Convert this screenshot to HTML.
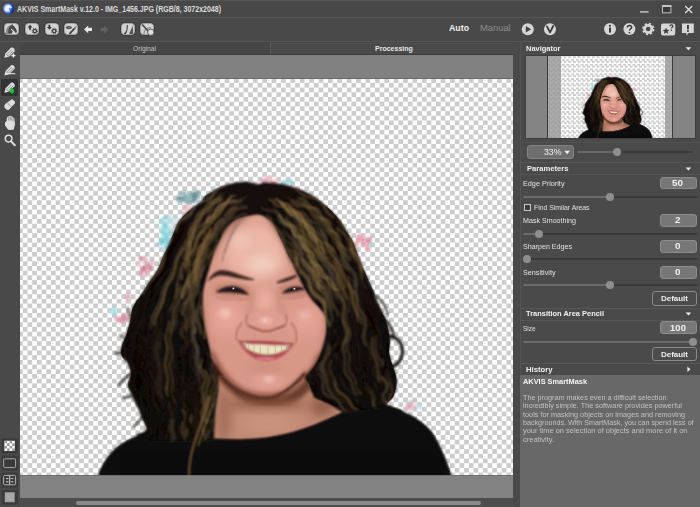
<!DOCTYPE html>
<html lang="en">
<head>
<meta charset="utf-8">
<title>AKVIS SmartMask v.12.0 - IMG_1456.JPG</title>
<style>
html,body{margin:0;padding:0;background:#494949;}
body{width:700px;height:507px;overflow:hidden;font-family:"Liberation Sans",sans-serif;}
#app{position:relative;width:700px;height:507px;overflow:hidden;background:#494949;}
#app div,#app span,#app svg{position:absolute;box-sizing:border-box;}
.t{white-space:nowrap;transform-origin:0 50%;display:block;}
.hl{height:1px;background:#565656;}
.btn{border-radius:3.6px;background:#d2d2d2;border:0.8px solid #a4a4a4;box-shadow:0 0 0 0.7px #383838;}
.val{border-radius:3px;background:#777;border:1px solid #8c8c8c;}
.dbtn{border-radius:3px;background:#4c4c4c;border:1px solid #8a8a8a;}
.trk{height:2px;background:#393939;border-radius:1px;}
.trk i{position:absolute;left:0;top:0;height:2px;background:#6a6a6a;border-radius:1px;display:block;}
.knob{width:8px;height:8px;border-radius:50%;background:#8f8f8f;}
.checker{background-color:#fff;background-image:conic-gradient(#ccc 25%,#fff 0 50%,#ccc 0 75%,#fff 0);}

</style>
</head>
<body>
<div id="app">
<!-- title bar -->
<div id="titlebar" style="left:0;top:0;width:700px;height:17px;background:#484848;border-top:1px solid #545454;"></div>
<svg id="appicon" style="left:2px;top:2px" width="14" height="14" viewBox="0 0 14 14">
  <defs><radialGradient id="gi" cx="32%" cy="38%" r="75%"><stop offset="0" stop-color="#dbe8ff"/><stop offset="0.4" stop-color="#6c9cf0"/><stop offset="0.75" stop-color="#1c40b8"/><stop offset="1" stop-color="#0a1666"/></radialGradient></defs>
  <circle cx="6.7" cy="6.7" r="5.5" fill="url(#gi)"/>
  <path d="M2.6 8.4 C2.4 5.6 4.2 3.2 7 2.8 C8.4 3.2 9.4 4.2 9.8 5.6 L8.6 6.4 L7.6 5.6 C6.8 6.2 6.6 7 6.8 7.8 C7.4 8.4 8 9 8 9.8 L5.4 10.8 C4 10.6 2.8 9.8 2.6 8.4 Z" fill="#f6f9ff" opacity="0.92"/>
  <path d="M2.2 8.8 C4 9.4 7 9.6 9.4 10.4 C8.4 11.6 6.8 12.2 5.2 11.8 C3.6 11.4 2.6 10.2 2.2 8.8 Z" fill="#3a78e0" opacity="0.7"/>
</svg>
<svg id="winctl" style="left:630px;top:0" width="70" height="17" viewBox="630 0 70 17">
  <rect x="640" y="11.2" width="8.6" height="1.4" fill="#c8c8c8"/>
  <rect x="662.5" y="5.6" width="8.4" height="7.2" fill="#3a3a3a" stroke="#bdbdbd" stroke-width="1"/>
  <rect x="662" y="5" width="9.4" height="2" fill="#c4c4c4"/>
  <path d="M685.2 6 L692.2 13 M692.2 6 L685.2 13" stroke="#e4e4e4" stroke-width="1.2" fill="none"/>
</svg>
<div class="hl" style="left:0;top:17px;width:700px;background:#565656"></div>
<!-- toolbar -->
<div id="toolbar" style="left:0;top:18px;width:700px;height:23px;background:#494949;"></div>
<div class="btn" style="left:3.8px;top:23px;width:15.2px;height:12.4px"></div>
<div class="btn" style="left:25.2px;top:23px;width:14px;height:12.4px"></div>
<div class="btn" style="left:44.6px;top:23px;width:14px;height:12.4px"></div>
<div class="btn" style="left:63.8px;top:23px;width:14.4px;height:12.4px"></div>
<div class="btn" style="left:120.9px;top:23.2px;width:14.2px;height:12.2px"></div>
<div class="btn" style="left:140.3px;top:23.2px;width:14.2px;height:12.2px"></div>
<svg id="tbicons" style="left:0;top:18px" width="700" height="24" viewBox="0 18 700 24">
  <!-- horse head -->
  <path d="M5.8 33.8 C5.8 29.4 7.6 26 11 25.2 L12.6 24.2 L13.2 25.6 C15 27 16.6 29.4 17 32 L15.6 33 L13.6 31 C12.4 31.6 11.8 32.8 12 33.8 Z" fill="#4a4a4a"/>
  <path d="M5.8 33.8 C5.8 29.6 7.4 26.4 10.4 25.4 C8.8 27.6 8 30.6 8.2 33.8 Z" fill="#8a8a8a"/>
  <path d="M11.2 29.2 L14.6 32.4" stroke="#e8e8e8" stroke-width="1.1" fill="none"/>
  <!-- up arrow + gear -->
  <path d="M30 24.8 L32.6 27.6 L31 27.6 L31 29.8 L29 29.8 L29 27.6 L27.4 27.6 Z" fill="#3e3e3e"/>
  <circle cx="34.8" cy="31" r="1.7" fill="#d8d8d8" stroke="#3e3e3e" stroke-width="1.3"/>
  <circle cx="34.8" cy="31" r="2.7" fill="none" stroke="#3e3e3e" stroke-width="1" stroke-dasharray="1.06 1.06"/>
  <path d="M49.4 29.8 L52 27 L50.4 27 L50.4 24.8 L48.4 24.8 L48.4 27 L46.8 27 Z" fill="#3e3e3e"/>
  <circle cx="54.2" cy="31" r="1.7" fill="#d8d8d8" stroke="#3e3e3e" stroke-width="1.3"/>
  <circle cx="54.2" cy="31" r="2.7" fill="none" stroke="#3e3e3e" stroke-width="1" stroke-dasharray="1.06 1.06"/>
  <!-- eye + brush -->
  <path d="M65.6 27.4 C67 25.4 70.6 25.4 72 27.4 C70.6 29.4 67 29.4 65.6 27.4 Z" fill="#444"/>
  <ellipse cx="68.8" cy="27.4" rx="1.3" ry="0.7" fill="#9a9a9a"/>
  <path d="M69.8 33.6 L74.6 28.4" stroke="#3c3c3c" stroke-width="1.6" stroke-linecap="round"/>
  <path d="M74.8 28.2 L76.2 26.6" stroke="#888" stroke-width="1.4" stroke-linecap="round"/>
  <!-- arrows -->
  <path d="M84 29.4 L88.2 25.6 L88.2 27.8 L92 27.8 L92 31 L88.2 31 L88.2 33.2 Z" fill="#e6e6e6"/>
  <path d="M108.4 29.4 L104.2 25.6 L104.2 27.8 L100.6 27.8 L100.6 31 L104.2 31 L104.2 33.2 Z" fill="#626262"/>
  <!-- brushes -->
  <path d="M123.6 34 L126 34 L127.4 30.6 L128 25 L126.8 25 L126.4 30.6 Z" fill="#444"/>
  <path d="M129 34 L133 34 L133 25.4 Z" fill="#555"/>
  <!-- pencil with circle -->
  <path d="M142.6 25 L148 31" stroke="#444" stroke-width="1.6" stroke-linecap="round"/>
  <path d="M144 34 C144 30 146.6 27.6 150.6 27.6" stroke="#666" stroke-width="0.9" fill="none"/>
  <circle cx="150.8" cy="32.2" r="3.2" fill="#dedede" stroke="#555" stroke-width="1"/>
  <!-- run / apply -->
  <circle cx="527.8" cy="29.2" r="6" fill="#d6d6d6"/>
  <path d="M525.8 26 L531.2 29.2 L525.8 32.4 Z" fill="#444"/>
  <circle cx="550" cy="29.2" r="6" fill="#d6d6d6"/>
  <path d="M547 26.4 L550 32.4 L553.2 26" stroke="#3c3c3c" stroke-width="1.8" fill="none" stroke-linejoin="round" stroke-linecap="round"/>
  <!-- info / help -->
  <circle cx="610" cy="29" r="6" fill="#d6d6d6"/>
  <circle cx="610" cy="25.8" r="1.1" fill="#3c3c3c"/>
  <rect x="609" y="27.6" width="2" height="5" fill="#3c3c3c"/>
  <circle cx="629.4" cy="29" r="6" fill="#d6d6d6"/>
  <path d="M627.4 27.4 C627.4 24.8 631.6 24.8 631.6 27.4 C631.6 28.8 629.5 28.8 629.5 30.6" stroke="#3c3c3c" stroke-width="1.5" fill="none"/>
  <circle cx="629.5" cy="32.6" r="0.9" fill="#3c3c3c"/>
  <!-- gear -->
  <circle cx="648.2" cy="29" r="3.6" fill="none" stroke="#d6d6d6" stroke-width="2.6"/>
  <circle cx="648.2" cy="29" r="5.2" fill="none" stroke="#d6d6d6" stroke-width="2" stroke-dasharray="2.1 1.98"/>
  <!-- star / ? -->
  <rect x="661" y="23.6" width="14.2" height="11.8" rx="2" fill="#d6d6d6"/>
  <path d="M666 27.4 L667 29.8 L669.6 29.9 L667.6 31.5 L668.3 34 L666 32.6 L663.8 34 L664.5 31.5 L662.5 29.9 L665.1 29.8 Z" fill="#3c3c3c"/>
  <path d="M669.8 26.2 C669.8 24.4 673 24.4 673 26.2 C673 27.2 671.4 27.3 671.4 28.6" stroke="#3c3c3c" stroke-width="1.2" fill="none"/>
  <circle cx="671.4" cy="30.2" r="0.7" fill="#3c3c3c"/>
  <!-- bubble ! -->
  <path d="M682 23.6 H693.8 V33 H688.6 L686.4 35.6 V33 H682 Z" fill="#d6d6d6"/>
  <rect x="687" y="25" width="1.9" height="4.4" fill="#3c3c3c"/>
  <rect x="687" y="30.2" width="1.9" height="1.6" fill="#3c3c3c"/>
</svg>
<div class="hl" style="left:0;top:41px;width:700px;background:#555"></div>
<!-- tabs -->
<div id="tabs" style="left:20px;top:42px;width:493px;height:13px;background:#464646;"></div>
<div style="left:270px;top:43px;width:243px;height:11px;background:#4a4a4a;border-left:1px solid #5a5a5a;border-top:1px solid #515151;"></div>
<div style="left:20px;top:53.6px;width:493px;height:1.2px;background:#3c3c3c;"></div>
<!-- left tool strip -->
<div id="tools" style="left:0;top:42px;width:20px;height:465px;background:#494949;"></div>
<div style="left:1.4px;top:79.2px;width:16.8px;height:16.4px;background:#333;border-radius:2px;"></div>
<svg id="toolicons" style="left:0;top:42px" width="20" height="465" viewBox="0 42 20 465">
  <g>
    <!-- pencil + -->
    <path d="M4.4 57.8 L5.5 53.3 L11 47.8 C12.6 46.6 15.6 49.4 14.6 51.2 L9 56.7 Z" fill="#dedede"/>
    <path d="M7 54.4 L12 49.4 M8.4 55.6 L13.4 50.6" stroke="#7c7c7c" stroke-width="0.7" fill="none"/>
    <path d="M5.6 53.6 L8.8 56.6" stroke="#6a6a6a" stroke-width="0.6" fill="none"/>
    <path d="M11.4 55.6 h4 M13.4 53.6 v4" stroke="#f4f4f4" stroke-width="1.3" fill="none"/>
    <!-- pencil - -->
    <path d="M4.4 75.4 L5.5 70.9 L11 65.4 C12.6 64.2 15.6 67.0 14.6 68.8 L9 74.3 Z" fill="#dedede"/>
    <path d="M7 72.0 L12 67.0 M8.4 73.2 L13.4 68.2" stroke="#7c7c7c" stroke-width="0.7" fill="none"/>
    <path d="M5.6 71.2 L8.8 74.2" stroke="#6a6a6a" stroke-width="0.6" fill="none"/>
    <path d="M5 73.7 h10.2" stroke="#e8e8e8" stroke-width="1.1" fill="none"/>
    <!-- selected pencil -->
    <path d="M4.4 92.8 L5.5 88.3 L11 82.8 C12.6 81.6 15.6 84.4 14.6 86.2 L9 91.7 Z" fill="#dedede"/>
    <path d="M7 89.4 L12 84.4 M8.4 90.6 L13.4 85.6" stroke="#7c7c7c" stroke-width="0.7" fill="none"/>
    <path d="M5.6 88.6 L8.8 91.6" stroke="#6a6a6a" stroke-width="0.6" fill="none"/>
    <ellipse cx="12" cy="91" rx="2.1" ry="2.6" fill="#17c42c"/>
    <path d="M12 87.6 L13.6 90 L10.4 90 Z" fill="#17c42c"/>
    <!-- eraser -->
    <path d="M4.6 107.4 C4 106 4.6 104.6 5.6 103.8 L11.4 99.4 C12.6 98.8 15.6 101.8 15 103.2 L9.2 109.6 C8 110.6 5.6 109.4 4.6 107.4 Z" fill="#dedede"/>
    <path d="M7.6 103 L11 106.8" stroke="#7c7c7c" stroke-width="0.8" fill="none"/>
    <!-- hand -->
    <path d="M5 122.4 L6.6 121 L7 117.4 L8.2 116.6 L9 116.2 L10.2 115.8 L11.6 116.2 L12.8 117 L14.4 118.6 L15 124.6 L13.6 129.8 L8.4 130 L5 125.4 Z" fill="#dedede"/>
    <path d="M8.6 120.6 V117.2 M10.2 120.4 V116.6 M11.8 120.6 V117 M13.2 121.4 V118.4" stroke="#666" stroke-width="0.6" fill="none"/>
    <!-- magnifier -->
    <circle cx="8.6" cy="138.6" r="3.3" fill="none" stroke="#dedede" stroke-width="1.5"/>
    <path d="M11.2 141.4 L14.8 145.2" stroke="#dedede" stroke-width="2" stroke-linecap="round"/>
  </g>
  <!-- bottom icons -->
  <rect x="1.6" y="438.6" width="16.4" height="14.6" rx="1.5" fill="#3b3b3b"/>
  <rect x="1.6" y="455.8" width="16.4" height="14.6" rx="1.5" fill="#3b3b3b"/>
  <rect x="1.6" y="472.8" width="16.4" height="14.6" rx="1.5" fill="#3b3b3b"/>
  <rect x="1.6" y="490" width="16.4" height="14.6" rx="1.5" fill="#3b3b3b"/>
  <rect x="4.4" y="440.8" width="10.4" height="10.2" fill="#fff"/>
  <path d="M4.4 440.8 h2.6 v2.55 h-2.6z M9.6 440.8 h2.6 v2.55 h-2.6z M7 443.35 h2.6 v2.55 h-2.6z M12.2 443.35 h2.6 v2.55 h-2.6z M4.4 445.9 h2.6 v2.55 h-2.6z M9.6 445.9 h2.6 v2.55 h-2.6z M7 448.45 h2.6 v2.55 h-2.6z M12.2 448.45 h2.6 v2.55 h-2.6z" fill="#9a9a9a"/>
  <rect x="3.6" y="458.8" width="12" height="8.8" rx="1" fill="#3a3a3a" stroke="#aaa" stroke-width="1"/>
  <rect x="3.6" y="475.4" width="12" height="9.4" rx="1" fill="#3a3a3a" stroke="#b4b4b4" stroke-width="1"/>
  <path d="M9.6 476 V484.4 M6 478.6 h2.4 M10.8 478.6 h2.6 M6 481.8 h2.4 M10.8 481.8 h2.6" stroke="#d4d4d4" stroke-width="1"/>
  <rect x="5" y="492.4" width="9.6" height="9.6" fill="#a8a8a8" stroke="#8a8a8a" stroke-width="0.6"/>
</svg>
<!-- canvas area -->
<div id="band-top" style="left:20px;top:54.8px;width:492.6px;height:24.4px;background:#818181;"></div>
<div style="left:20px;top:77.6px;width:492.6px;height:1.6px;background:#6a6a6a;"></div>
<div id="canvas" class="checker" style="left:20px;top:79px;width:492.6px;height:396px;background-size:9.405px 9.405px;background-position:2.8px -0.8px;"></div>
<div id="band-bot" style="left:20px;top:475px;width:492.6px;height:23px;background:#828282;"></div>
<div style="left:20px;top:475px;width:492.6px;height:1.2px;background:#6e6e6e;"></div>
<div id="hscroll" style="left:20px;top:498px;width:493px;height:9px;background:#4d4d4d;"></div>
<div style="left:75.6px;top:500.8px;width:405.6px;height:4.6px;border-radius:2.3px;background:#8a8a8a;"></div>
<div id="gutter" style="left:512.6px;top:42px;width:7.4px;height:465px;background:#494949;"></div>
<!-- right panel -->
<div id="panel" style="left:520px;top:42px;width:180px;height:333px;background:#4a4a4a;border-left:1px solid #545454;"></div>
<div class="hl" style="left:520px;top:53px;width:180px;background:#4c4c4c"></div>
<div class="hl" style="left:520px;top:142px;width:180px;background:#525252"></div>
<div class="val" style="left:526.8px;top:145px;width:47px;height:13.6px;background:#6e6e6e;border-color:#828282"></div>
<div class="hl" style="left:520px;top:162.4px;width:180px"></div>
<div class="hl" style="left:520px;top:173.6px;width:180px"></div>
<div class="val" style="left:660px;top:176.6px;width:36.8px;height:12.8px"></div>
<div style="left:523.8px;top:204px;width:6.8px;height:6.8px;border:1px solid #c8c8c8;background:#3c3c3c"></div>
<div class="val" style="left:660px;top:214px;width:36.8px;height:12.8px"></div>
<div class="val" style="left:660px;top:239.8px;width:36.8px;height:12.8px"></div>
<div class="val" style="left:660px;top:265.8px;width:36.8px;height:12.8px"></div>
<div class="dbtn" style="left:652.2px;top:291.4px;width:45px;height:14.4px"></div>
<div class="hl" style="left:520px;top:307.6px;width:180px"></div>
<div class="hl" style="left:520px;top:319.8px;width:180px"></div>
<div class="val" style="left:660px;top:321.4px;width:36.8px;height:12.8px"></div>
<div class="dbtn" style="left:652.2px;top:347px;width:45px;height:14.4px"></div>
<div class="hl" style="left:520px;top:363.4px;width:180px"></div>
<!-- sliders -->
<div class="trk" style="left:577px;top:150.6px;width:116.4px"><i style="width:40px"></i></div>
<div class="knob" style="left:612.8px;top:147.6px"></div>
<div class="trk" style="left:523px;top:195.6px;width:173.8px"><i style="width:87px"></i></div>
<div class="knob" style="left:605.8px;top:192.6px"></div>
<div class="trk" style="left:523px;top:233px;width:173.8px"><i style="width:15px"></i></div>
<div class="knob" style="left:534.5px;top:230px"></div>
<div class="trk" style="left:523px;top:258.4px;width:173.8px"></div>
<div class="knob" style="left:523px;top:255.4px"></div>
<div class="trk" style="left:523px;top:284px;width:173.8px"><i style="width:87px"></i></div>
<div class="knob" style="left:605.8px;top:281px"></div>
<div class="trk" style="left:523px;top:340.6px;width:173.8px"><i style="width:170px"></i></div>
<div class="knob" style="left:688.8px;top:337.6px"></div>
<svg id="carets" style="left:520px;top:42px" width="180" height="340" viewBox="520 42 180 340">
  <path d="M685.6 47.2 h5.6 l-2.8 3 z" fill="#eee"/>
  <path d="M564.4 150.8 h5.6 l-2.8 3.4 z" fill="#eee"/>
  <path d="M685.6 167.4 h5.6 l-2.8 3 z" fill="#eee"/>
  <path d="M685.6 312.4 h5.6 l-2.8 3 z" fill="#eee"/>
  <path d="M687.4 366.6 v5.4 l3 -2.7 z" fill="#eee"/>
</svg>
<!-- hint -->
<div id="hint" style="left:520px;top:375px;width:180px;height:132px;background:#686868;"></div>

<svg id="portrait" style="left:20px;top:79px" width="492.6" height="396" viewBox="20 79 492.6 396">
<defs>
<filter id="b1" x="-10%" y="-10%" width="120%" height="120%"><feGaussianBlur stdDeviation="0.8"/></filter>
<filter id="b2" x="-20%" y="-20%" width="140%" height="140%"><feGaussianBlur stdDeviation="2"/></filter>
<filter id="b4" x="-30%" y="-30%" width="160%" height="160%"><feGaussianBlur stdDeviation="4.5"/></filter>
<filter id="b8" x="-40%" y="-40%" width="180%" height="180%"><feGaussianBlur stdDeviation="8"/></filter>
<clipPath id="faceclip"><path d="M246.8 216.6 C251.0 215.6 255.9 214.0 260.0 215.0 C264.1 216.0 268.6 219.6 271.6 222.8 C274.6 226.0 275.9 229.9 278.0 234.0 C280.1 238.1 282.2 243.6 284.0 247.6 C285.8 251.6 287.3 254.6 289.0 258.0 C290.7 261.4 292.6 264.6 294.4 268.3 C296.2 272.0 298.2 276.4 300.0 280.0 C301.8 283.6 303.0 286.7 305.0 290.0 C307.0 293.3 309.5 296.8 312.0 300.0 C314.5 303.2 317.9 306.4 320.0 309.0 C322.1 311.6 323.4 313.0 324.4 315.7 C325.4 318.4 325.8 321.9 326.0 325.0 C326.2 328.1 326.0 331.0 325.5 334.3 C325.0 337.6 324.0 341.6 323.0 345.0 C322.0 348.4 320.8 351.7 319.3 355.0 C317.8 358.3 316.1 361.9 314.0 365.0 C311.9 368.1 309.3 370.9 306.8 373.7 C304.3 376.5 301.8 379.6 299.0 382.0 C296.2 384.4 292.8 386.5 290.3 388.2 C287.8 389.9 286.1 391.0 284.0 392.0 C281.9 393.0 280.1 393.6 277.8 394.4 C275.5 395.1 272.4 396.1 270.0 396.5 C267.6 396.9 266.6 396.9 263.3 396.5 C260.0 396.1 254.5 395.4 250.0 394.0 C245.5 392.6 240.2 390.5 236.4 388.2 C232.6 385.9 229.8 382.8 227.0 380.0 C224.2 377.2 222.1 374.9 219.8 371.6 C217.5 368.3 214.7 364.1 213.0 360.0 C211.3 355.9 210.7 351.8 209.5 346.8 C208.3 341.8 206.9 335.2 206.0 330.0 C205.1 324.8 204.5 320.2 204.0 315.7 C203.5 311.2 203.1 307.1 203.0 303.0 C202.9 298.9 202.8 294.8 203.3 291.0 C203.8 287.2 205.0 283.8 206.0 280.0 C207.0 276.2 208.2 272.6 209.5 268.3 C210.8 264.0 212.3 258.5 214.0 254.0 C215.7 249.5 217.8 245.4 219.8 241.4 C221.8 237.4 223.5 233.4 226.0 230.0 C228.5 226.6 231.5 223.2 235.0 221.0 C238.5 218.8 242.6 217.6 246.8 216.6Z"/></clipPath>
<clipPath id="hairclip"><path d="M244.3 181.7 C247.7 181.5 249.9 182.2 252.0 182.6 C254.1 183.0 254.8 184.2 257.0 184.2 C259.1 184.2 262.1 182.7 264.9 182.5 C267.7 182.3 271.0 182.7 274.0 183.0 C277.0 183.3 279.4 183.5 283.0 184.3 C286.6 185.1 291.4 186.5 295.7 188.0 C300.0 189.5 304.3 190.9 308.6 193.3 C312.9 195.7 317.1 198.9 321.4 202.3 C325.7 205.7 331.0 210.6 334.3 213.9 C337.6 217.2 338.9 219.0 341.0 222.0 C343.1 225.0 345.2 229.0 347.0 232.0 C348.8 235.0 350.5 237.0 352.0 240.0 C353.5 243.0 354.5 246.2 356.0 250.0 C357.5 253.8 359.2 258.5 361.0 263.0 C362.8 267.5 365.0 272.4 367.0 277.0 C369.0 281.6 371.2 286.2 373.0 290.5 C374.8 294.8 376.2 298.8 378.0 303.0 C379.8 307.2 382.3 311.8 384.0 316.0 C385.7 320.2 387.0 324.0 388.0 328.0 C389.0 332.0 389.8 336.0 390.0 340.0 C390.2 344.0 388.7 348.0 389.0 352.0 C389.3 356.0 390.8 360.0 392.0 364.0 C393.2 368.0 395.2 372.3 396.0 376.0 C396.8 379.7 397.0 382.5 396.5 386.0 C396.0 389.5 394.6 394.0 393.0 397.0 C391.4 400.0 387.2 402.2 387.0 404.0 C386.8 405.8 389.5 406.5 392.0 408.0 C394.5 409.5 404.0 408.3 402.0 413.0 C400.0 417.7 397.0 430.7 380.0 436.0 C363.0 441.3 330.0 443.0 300.0 445.0 C270.0 447.0 225.0 448.8 200.0 448.0 C175.0 447.2 160.7 442.0 150.0 440.0 C139.3 438.0 136.7 437.7 136.0 436.0 C135.3 434.3 144.8 432.7 146.0 430.0 C147.2 427.3 144.2 423.2 143.0 420.0 C141.8 416.8 140.7 414.2 139.0 410.5 C137.3 406.8 134.8 402.2 133.0 398.0 C131.2 393.8 128.3 389.0 128.0 385.0 C127.7 381.0 131.0 377.5 131.0 374.0 C131.0 370.5 129.6 367.2 128.0 364.0 C126.4 360.8 122.5 358.0 121.5 355.0 C120.5 352.0 121.2 349.2 122.0 346.0 C122.8 342.8 124.7 339.5 126.0 335.5 C127.3 331.5 129.0 326.2 130.0 322.0 C131.0 317.8 131.0 313.3 132.0 310.0 C133.0 306.7 134.6 304.3 136.0 302.0 C137.4 299.7 138.4 299.0 140.4 296.0 C142.4 293.0 145.2 288.2 148.0 284.0 C150.8 279.8 154.5 275.5 157.0 271.0 C159.5 266.5 160.9 261.6 163.0 257.0 C165.1 252.4 167.6 247.7 169.4 243.5 C171.2 239.3 172.4 235.7 174.0 232.0 C175.6 228.3 176.5 224.9 179.0 221.4 C181.5 217.9 185.3 214.2 189.0 211.0 C192.7 207.8 198.2 204.5 201.0 202.0 C203.8 199.5 202.8 198.2 205.7 195.9 C208.6 193.6 214.3 190.1 218.6 188.0 C222.9 185.9 227.1 184.6 231.4 183.5 C235.7 182.4 240.9 181.8 244.3 181.7Z"/></clipPath>
<clipPath id="neckclip"><path d="M219.0 376.0 C212.1 376.0 219.1 386.0 218.6 392.0 C218.1 398.0 216.5 404.2 215.8 412.0 C215.1 419.8 210.4 434.3 214.4 439.0 C218.4 443.7 231.4 440.2 240.0 440.0 C248.6 439.8 257.3 439.2 266.0 438.0 C274.7 436.8 284.0 435.1 292.0 433.0 C300.0 430.9 305.5 429.0 314.0 425.6 C322.5 422.2 340.3 416.0 343.0 412.6 C345.7 409.2 334.8 407.4 330.0 405.0 C325.2 402.6 318.5 402.2 314.4 398.0 C310.3 393.8 308.0 384.7 305.6 380.0 C303.2 375.3 307.6 368.0 300.0 370.0 C292.4 372.0 273.5 391.0 260.0 392.0 C246.5 393.0 225.9 376.0 219.0 376.0Z"/></clipPath>
</defs>
<g id="pt">
<g filter="url(#b1)" opacity="0.9">
<ellipse cx="179.6" cy="198.2" rx="3.0" ry="2.1" fill="#4e7880" opacity="0.94"/>
<ellipse cx="193.5" cy="201.9" rx="2.2" ry="2.4" fill="#86b4bc" opacity="0.64"/>
<ellipse cx="187.9" cy="198.3" rx="2.8" ry="2.6" fill="#6e9aa2" opacity="0.84"/>
<ellipse cx="182.1" cy="199.3" rx="2.7" ry="2.5" fill="#4e7880" opacity="0.61"/>
<ellipse cx="186.5" cy="196.8" rx="1.6" ry="1.7" fill="#6e9aa2" opacity="0.91"/>
<ellipse cx="184.3" cy="200.9" rx="1.6" ry="1.7" fill="#5e8890" opacity="0.80"/>
<ellipse cx="184.4" cy="193.8" rx="1.8" ry="3.2" fill="#6e9aa2" opacity="0.88"/>
<ellipse cx="186.7" cy="199.3" rx="1.8" ry="1.3" fill="#6e9aa2" opacity="0.76"/>
<ellipse cx="193.5" cy="194.2" rx="3.1" ry="2.9" fill="#6e9aa2" opacity="0.69"/>
<ellipse cx="191.1" cy="196.5" rx="2.0" ry="2.6" fill="#a4c8cc" opacity="0.63"/>
<ellipse cx="180.7" cy="193.2" rx="1.7" ry="1.4" fill="#5e8890" opacity="0.61"/>
<ellipse cx="177.7" cy="200.1" rx="1.5" ry="2.6" fill="#6e9aa2" opacity="0.62"/>
<ellipse cx="190.4" cy="195.0" rx="2.3" ry="2.1" fill="#86b4bc" opacity="0.99"/>
<ellipse cx="190.0" cy="193.5" rx="2.0" ry="2.0" fill="#86b4bc" opacity="0.60"/>
<ellipse cx="198.1" cy="192.6" rx="2.4" ry="3.2" fill="#6e9aa2" opacity="0.68"/>
<ellipse cx="179.0" cy="200.4" rx="2.5" ry="1.4" fill="#86b4bc" opacity="0.69"/>
<ellipse cx="188.4" cy="202.1" rx="1.9" ry="1.8" fill="#6e9aa2" opacity="0.63"/>
<ellipse cx="191.7" cy="201.4" rx="1.2" ry="1.9" fill="#4e7880" opacity="0.78"/>
<ellipse cx="197.8" cy="196.0" rx="2.3" ry="2.9" fill="#86b4bc" opacity="0.85"/>
<ellipse cx="186.8" cy="199.3" rx="2.4" ry="2.7" fill="#86b4bc" opacity="0.90"/>
<ellipse cx="193.9" cy="196.2" rx="3.1" ry="3.0" fill="#4e7880" opacity="0.63"/>
<ellipse cx="192.5" cy="197.5" rx="2.2" ry="1.7" fill="#7aa8b0" opacity="0.88"/>
<ellipse cx="188.5" cy="202.3" rx="2.4" ry="1.8" fill="#86b4bc" opacity="0.97"/>
<ellipse cx="193.0" cy="196.8" rx="2.2" ry="2.5" fill="#4e7880" opacity="0.85"/>
<ellipse cx="186.5" cy="202.6" rx="1.6" ry="1.2" fill="#5e8890" opacity="0.76"/>
<ellipse cx="189.0" cy="198.0" rx="1.8" ry="2.3" fill="#86b4bc" opacity="0.64"/>
<ellipse cx="194.6" cy="199.8" rx="1.9" ry="2.7" fill="#4e7880" opacity="0.83"/>
<ellipse cx="190.2" cy="197.6" rx="1.2" ry="3.0" fill="#7aa8b0" opacity="0.72"/>
<ellipse cx="199.1" cy="197.9" rx="1.3" ry="1.3" fill="#5e8890" opacity="0.73"/>
<ellipse cx="192.0" cy="197.0" rx="2.3" ry="2.7" fill="#7aa8b0" opacity="0.89"/>
<ellipse cx="198.4" cy="201.3" rx="1.9" ry="1.4" fill="#a4c8cc" opacity="0.96"/>
<ellipse cx="194.7" cy="194.4" rx="2.8" ry="2.9" fill="#4e7880" opacity="0.61"/>
<ellipse cx="185.2" cy="206.6" rx="1.2" ry="1.3" fill="#e6a8b6" opacity="0.86"/>
<ellipse cx="192.6" cy="208.8" rx="2.7" ry="2.0" fill="#d890a0" opacity="0.78"/>
<ellipse cx="187.7" cy="208.0" rx="2.7" ry="1.3" fill="#e6a8b6" opacity="0.79"/>
<ellipse cx="187.6" cy="213.0" rx="2.2" ry="2.4" fill="#d890a0" opacity="0.70"/>
<ellipse cx="189.9" cy="209.2" rx="2.6" ry="1.6" fill="#eec0c8" opacity="0.90"/>
<ellipse cx="183.8" cy="213.0" rx="2.2" ry="1.7" fill="#d890a0" opacity="0.87"/>
<ellipse cx="188.2" cy="211.9" rx="2.8" ry="3.0" fill="#eec0c8" opacity="0.75"/>
<ellipse cx="184.4" cy="207.7" rx="1.5" ry="2.2" fill="#e6a8b6" opacity="0.88"/>
<ellipse cx="189.6" cy="208.3" rx="1.5" ry="2.1" fill="#f0d0d4" opacity="0.97"/>
<ellipse cx="188.6" cy="206.5" rx="2.2" ry="2.5" fill="#d890a0" opacity="0.73"/>
<ellipse cx="188.3" cy="207.0" rx="2.4" ry="2.6" fill="#f0d0d4" opacity="0.83"/>
<ellipse cx="163.1" cy="250.2" rx="1.2" ry="1.5" fill="#a8e0e4" opacity="0.68"/>
<ellipse cx="165.3" cy="225.0" rx="2.8" ry="2.8" fill="#5cc4d0" opacity="0.65"/>
<ellipse cx="168.2" cy="242.7" rx="2.5" ry="1.9" fill="#7fd4dc" opacity="0.87"/>
<ellipse cx="166.2" cy="246.2" rx="1.6" ry="1.2" fill="#a8e0e4" opacity="0.81"/>
<ellipse cx="167.4" cy="235.8" rx="2.8" ry="2.3" fill="#c4ecee" opacity="0.80"/>
<ellipse cx="167.0" cy="233.9" rx="2.9" ry="2.6" fill="#6fd0da" opacity="0.63"/>
<ellipse cx="169.5" cy="227.2" rx="1.5" ry="2.1" fill="#5cc4d0" opacity="0.95"/>
<ellipse cx="169.2" cy="234.6" rx="2.5" ry="2.2" fill="#86d8e0" opacity="0.79"/>
<ellipse cx="163.7" cy="227.7" rx="2.6" ry="2.8" fill="#5cc4d0" opacity="0.97"/>
<ellipse cx="166.8" cy="240.0" rx="2.0" ry="1.4" fill="#86d8e0" opacity="0.81"/>
<ellipse cx="165.8" cy="224.2" rx="3.0" ry="2.9" fill="#86d8e0" opacity="0.80"/>
<ellipse cx="168.1" cy="236.4" rx="2.0" ry="1.8" fill="#7fd4dc" opacity="0.69"/>
<ellipse cx="167.4" cy="225.1" rx="1.3" ry="2.3" fill="#5cc4d0" opacity="0.92"/>
<ellipse cx="166.2" cy="238.9" rx="2.2" ry="2.6" fill="#5cc4d0" opacity="0.88"/>
<ellipse cx="168.7" cy="229.6" rx="3.1" ry="1.4" fill="#6fd0da" opacity="0.78"/>
<ellipse cx="160.0" cy="227.5" rx="2.3" ry="1.5" fill="#c4ecee" opacity="0.94"/>
<ellipse cx="162.2" cy="230.3" rx="2.0" ry="2.9" fill="#c4ecee" opacity="0.68"/>
<ellipse cx="168.5" cy="218.2" rx="2.2" ry="2.3" fill="#6fd0da" opacity="0.76"/>
<ellipse cx="165.2" cy="234.5" rx="2.0" ry="2.3" fill="#7fd4dc" opacity="0.81"/>
<ellipse cx="160.7" cy="244.2" rx="2.3" ry="2.2" fill="#5cc4d0" opacity="0.67"/>
<ellipse cx="168.4" cy="228.7" rx="3.0" ry="2.8" fill="#a8e0e4" opacity="0.71"/>
<ellipse cx="163.3" cy="235.0" rx="2.1" ry="2.8" fill="#a8e0e4" opacity="0.81"/>
<ellipse cx="167.8" cy="241.5" rx="1.3" ry="1.7" fill="#5cc4d0" opacity="0.91"/>
<ellipse cx="167.2" cy="235.1" rx="1.7" ry="2.6" fill="#86d8e0" opacity="0.89"/>
<ellipse cx="165.1" cy="247.2" rx="2.2" ry="2.4" fill="#c4ecee" opacity="0.85"/>
<ellipse cx="164.0" cy="218.2" rx="3.0" ry="1.2" fill="#5cc4d0" opacity="0.77"/>
<ellipse cx="163.0" cy="232.8" rx="1.6" ry="2.5" fill="#5cc4d0" opacity="0.69"/>
<ellipse cx="165.9" cy="247.6" rx="2.4" ry="1.5" fill="#5cc4d0" opacity="0.85"/>
<ellipse cx="163.8" cy="239.9" rx="2.4" ry="3.0" fill="#6fd0da" opacity="0.69"/>
<ellipse cx="170.6" cy="233.8" rx="1.5" ry="1.7" fill="#5cc4d0" opacity="0.64"/>
<ellipse cx="162.2" cy="241.9" rx="3.1" ry="2.3" fill="#5cc4d0" opacity="0.65"/>
<ellipse cx="161.1" cy="243.1" rx="1.2" ry="1.6" fill="#5cc4d0" opacity="0.74"/>
<ellipse cx="166.4" cy="224.2" rx="2.6" ry="2.5" fill="#86d8e0" opacity="0.80"/>
<ellipse cx="164.1" cy="227.2" rx="1.3" ry="1.4" fill="#7fd4dc" opacity="0.90"/>
<ellipse cx="160.7" cy="221.7" rx="2.2" ry="1.6" fill="#7fd4dc" opacity="0.68"/>
<ellipse cx="168.2" cy="217.2" rx="3.1" ry="1.4" fill="#7fd4dc" opacity="0.65"/>
<ellipse cx="164.5" cy="230.1" rx="1.4" ry="2.0" fill="#a8e0e4" opacity="0.81"/>
<ellipse cx="161.0" cy="240.3" rx="1.2" ry="2.6" fill="#6fd0da" opacity="0.67"/>
<ellipse cx="160.2" cy="238.8" rx="2.0" ry="1.6" fill="#6fd0da" opacity="0.64"/>
<ellipse cx="165.8" cy="224.2" rx="1.4" ry="2.9" fill="#5cc4d0" opacity="0.98"/>
<ellipse cx="163.0" cy="230.9" rx="2.4" ry="1.9" fill="#86d8e0" opacity="0.71"/>
<ellipse cx="168.7" cy="245.2" rx="1.5" ry="3.1" fill="#6fd0da" opacity="0.96"/>
<ellipse cx="168.5" cy="223.0" rx="2.7" ry="2.7" fill="#a8e0e4" opacity="0.68"/>
<ellipse cx="167.1" cy="250.0" rx="1.8" ry="1.4" fill="#86d8e0" opacity="1.00"/>
<ellipse cx="165.8" cy="232.1" rx="1.7" ry="3.1" fill="#86d8e0" opacity="0.74"/>
<ellipse cx="162.7" cy="222.0" rx="2.3" ry="2.0" fill="#a8e0e4" opacity="0.86"/>
<ellipse cx="170.7" cy="215.5" rx="3.2" ry="1.2" fill="#e8c8d0" opacity="0.64"/>
<ellipse cx="172.3" cy="226.9" rx="2.2" ry="2.7" fill="#e8c8d0" opacity="0.75"/>
<ellipse cx="173.8" cy="224.0" rx="3.0" ry="2.3" fill="#e8c8d0" opacity="0.77"/>
<ellipse cx="167.5" cy="221.1" rx="1.4" ry="2.1" fill="#e8c8d0" opacity="0.63"/>
<ellipse cx="168.5" cy="218.1" rx="1.3" ry="3.1" fill="#b0e0e4" opacity="0.75"/>
<ellipse cx="176.5" cy="220.6" rx="2.3" ry="2.4" fill="#d8f0f0" opacity="0.98"/>
<ellipse cx="169.0" cy="224.6" rx="2.4" ry="1.9" fill="#d8f0f0" opacity="0.79"/>
<ellipse cx="171.4" cy="229.6" rx="2.5" ry="2.7" fill="#b0e0e4" opacity="0.61"/>
<ellipse cx="172.0" cy="223.2" rx="1.5" ry="2.7" fill="#d8f0f0" opacity="0.62"/>
<ellipse cx="170.9" cy="226.2" rx="2.4" ry="2.6" fill="#d8f0f0" opacity="0.63"/>
<ellipse cx="174.5" cy="219.3" rx="2.2" ry="3.1" fill="#b0e0e4" opacity="0.62"/>
<ellipse cx="175.6" cy="226.1" rx="3.0" ry="1.5" fill="#b0e0e4" opacity="0.84"/>
<ellipse cx="174.8" cy="226.0" rx="2.1" ry="1.6" fill="#b0e0e4" opacity="0.74"/>
<ellipse cx="173.5" cy="225.6" rx="1.5" ry="2.0" fill="#e8c8d0" opacity="0.70"/>
<ellipse cx="169.4" cy="219.7" rx="2.8" ry="2.3" fill="#b0e0e4" opacity="0.98"/>
<ellipse cx="144.7" cy="262.2" rx="1.4" ry="3.0" fill="#dc90a0" opacity="0.85"/>
<ellipse cx="142.7" cy="269.2" rx="2.6" ry="2.3" fill="#dc90a0" opacity="0.68"/>
<ellipse cx="144.4" cy="269.8" rx="3.1" ry="2.2" fill="#c87088" opacity="0.97"/>
<ellipse cx="145.8" cy="265.1" rx="1.3" ry="1.7" fill="#efc8d0" opacity="0.61"/>
<ellipse cx="148.2" cy="266.9" rx="1.8" ry="2.7" fill="#c87088" opacity="0.66"/>
<ellipse cx="145.8" cy="274.9" rx="2.2" ry="1.9" fill="#e09aaa" opacity="0.74"/>
<ellipse cx="144.8" cy="257.9" rx="1.3" ry="1.4" fill="#dc90a0" opacity="0.94"/>
<ellipse cx="145.6" cy="260.5" rx="2.7" ry="2.0" fill="#d8869a" opacity="0.75"/>
<ellipse cx="140.5" cy="258.6" rx="1.9" ry="2.3" fill="#c87088" opacity="0.93"/>
<ellipse cx="147.5" cy="272.4" rx="2.4" ry="2.1" fill="#e09aaa" opacity="0.63"/>
<ellipse cx="149.9" cy="269.2" rx="2.2" ry="2.6" fill="#e09aaa" opacity="0.93"/>
<ellipse cx="149.0" cy="266.3" rx="3.0" ry="2.4" fill="#c87088" opacity="0.72"/>
<ellipse cx="144.0" cy="258.9" rx="1.8" ry="1.5" fill="#e09aaa" opacity="0.86"/>
<ellipse cx="141.5" cy="273.5" rx="1.8" ry="2.1" fill="#dc90a0" opacity="0.97"/>
<ellipse cx="152.0" cy="262.9" rx="2.1" ry="2.8" fill="#e09aaa" opacity="0.78"/>
<ellipse cx="146.4" cy="274.7" rx="2.7" ry="2.2" fill="#e8c0c8" opacity="0.74"/>
<ellipse cx="142.1" cy="269.7" rx="2.0" ry="2.0" fill="#d8869a" opacity="0.90"/>
<ellipse cx="141.9" cy="269.8" rx="1.5" ry="2.4" fill="#d8869a" opacity="0.67"/>
<ellipse cx="145.4" cy="257.7" rx="1.8" ry="1.2" fill="#dc90a0" opacity="0.62"/>
<ellipse cx="147.1" cy="269.6" rx="1.2" ry="2.9" fill="#efc8d0" opacity="0.63"/>
<ellipse cx="138.4" cy="263.7" rx="1.4" ry="1.4" fill="#c87088" opacity="0.64"/>
<ellipse cx="144.7" cy="266.9" rx="2.5" ry="1.4" fill="#c87088" opacity="0.77"/>
<ellipse cx="143.8" cy="260.3" rx="3.0" ry="1.9" fill="#efc8d0" opacity="0.76"/>
<ellipse cx="140.9" cy="273.5" rx="2.5" ry="2.2" fill="#dc90a0" opacity="0.92"/>
<ellipse cx="150.4" cy="269.0" rx="1.3" ry="2.7" fill="#c87088" opacity="0.74"/>
<ellipse cx="149.5" cy="266.1" rx="1.4" ry="2.1" fill="#dc90a0" opacity="0.86"/>
<ellipse cx="138.6" cy="264.9" rx="2.8" ry="2.0" fill="#efc8d0" opacity="0.97"/>
<ellipse cx="114.0" cy="310.7" rx="2.5" ry="2.6" fill="#8fdce4" opacity="0.68"/>
<ellipse cx="112.7" cy="310.1" rx="3.1" ry="1.3" fill="#8fdce4" opacity="0.89"/>
<ellipse cx="113.7" cy="310.5" rx="3.0" ry="3.0" fill="#8fdce4" opacity="0.61"/>
<ellipse cx="111.4" cy="309.5" rx="1.8" ry="1.6" fill="#8fdce4" opacity="0.69"/>
<ellipse cx="114.2" cy="313.1" rx="2.4" ry="1.6" fill="#6fd2e0" opacity="0.96"/>
<ellipse cx="111.7" cy="311.7" rx="3.1" ry="2.5" fill="#b8e8ec" opacity="0.79"/>
<ellipse cx="122.4" cy="321.7" rx="3.0" ry="1.9" fill="#dc94a6" opacity="0.79"/>
<ellipse cx="123.3" cy="318.6" rx="3.1" ry="2.8" fill="#d08098" opacity="0.99"/>
<ellipse cx="125.1" cy="314.7" rx="2.8" ry="1.3" fill="#c87890" opacity="0.96"/>
<ellipse cx="129.0" cy="315.3" rx="2.1" ry="1.7" fill="#d08098" opacity="0.84"/>
<ellipse cx="124.6" cy="319.1" rx="1.8" ry="1.7" fill="#c87890" opacity="0.85"/>
<ellipse cx="127.1" cy="317.9" rx="2.3" ry="1.5" fill="#c87890" opacity="0.60"/>
<ellipse cx="126.5" cy="314.7" rx="2.8" ry="1.4" fill="#e8b4c0" opacity="0.85"/>
<ellipse cx="114.7" cy="317.3" rx="2.6" ry="1.4" fill="#e8b4c0" opacity="0.61"/>
<ellipse cx="124.3" cy="319.4" rx="2.6" ry="2.8" fill="#d08098" opacity="0.68"/>
<ellipse cx="117.1" cy="317.3" rx="1.5" ry="2.9" fill="#e8b4c0" opacity="0.73"/>
<ellipse cx="117.8" cy="319.6" rx="3.2" ry="2.5" fill="#dc94a6" opacity="0.74"/>
<ellipse cx="122.1" cy="317.0" rx="2.0" ry="2.1" fill="#dc94a6" opacity="0.86"/>
<ellipse cx="128.0" cy="318.2" rx="2.6" ry="1.7" fill="#dc94a6" opacity="0.78"/>
<ellipse cx="130.0" cy="298.3" rx="2.8" ry="1.6" fill="#dca0b0" opacity="0.72"/>
<ellipse cx="127.0" cy="300.4" rx="1.8" ry="1.9" fill="#e8c0c8" opacity="0.82"/>
<ellipse cx="128.6" cy="299.0" rx="2.0" ry="1.4" fill="#e8c0c8" opacity="0.98"/>
<ellipse cx="126.5" cy="296.4" rx="1.9" ry="2.9" fill="#dca0b0" opacity="0.64"/>
<ellipse cx="127.6" cy="297.0" rx="2.5" ry="1.6" fill="#dca0b0" opacity="0.76"/>
<ellipse cx="128.8" cy="294.9" rx="1.4" ry="1.7" fill="#dca0b0" opacity="0.99"/>
<ellipse cx="263.0" cy="181.0" rx="1.9" ry="2.8" fill="#e08a9c" opacity="0.86"/>
<ellipse cx="270.8" cy="177.3" rx="2.0" ry="1.9" fill="#f0c0c8" opacity="0.85"/>
<ellipse cx="269.0" cy="177.8" rx="1.8" ry="2.8" fill="#e08a9c" opacity="0.86"/>
<ellipse cx="269.4" cy="179.8" rx="1.9" ry="1.9" fill="#f0c0c8" opacity="0.64"/>
<ellipse cx="265.7" cy="181.4" rx="2.8" ry="2.9" fill="#e08a9c" opacity="0.70"/>
<ellipse cx="265.8" cy="179.6" rx="1.7" ry="2.4" fill="#e08a9c" opacity="0.83"/>
<ellipse cx="272.8" cy="182.7" rx="3.2" ry="2.6" fill="#e08a9c" opacity="0.83"/>
<ellipse cx="276.9" cy="180.4" rx="2.8" ry="1.5" fill="#f0c0c8" opacity="0.83"/>
<ellipse cx="268.5" cy="178.5" rx="3.1" ry="1.9" fill="#f0c0c8" opacity="0.95"/>
<ellipse cx="262.9" cy="180.7" rx="1.7" ry="2.3" fill="#e8a0b0" opacity="0.82"/>
<ellipse cx="284.5" cy="184.8" rx="3.2" ry="2.8" fill="#7cc4d0" opacity="0.66"/>
<ellipse cx="285.2" cy="182.0" rx="2.6" ry="1.9" fill="#7cc4d0" opacity="0.75"/>
<ellipse cx="287.2" cy="183.9" rx="2.8" ry="2.1" fill="#b4dce0" opacity="0.67"/>
<ellipse cx="290.8" cy="181.8" rx="2.5" ry="1.8" fill="#7cc4d0" opacity="0.94"/>
<ellipse cx="288.7" cy="180.8" rx="2.5" ry="2.7" fill="#9cd4dc" opacity="0.68"/>
<ellipse cx="283.2" cy="182.2" rx="2.0" ry="2.3" fill="#9cd4dc" opacity="0.73"/>
<ellipse cx="366.3" cy="245.2" rx="3.1" ry="1.3" fill="#ee9cac" opacity="0.89"/>
<ellipse cx="365.1" cy="239.1" rx="2.2" ry="1.4" fill="#e4889a" opacity="0.76"/>
<ellipse cx="359.4" cy="239.1" rx="2.7" ry="2.7" fill="#f4d0d6" opacity="0.96"/>
<ellipse cx="356.7" cy="244.5" rx="2.6" ry="2.9" fill="#ee9cac" opacity="0.83"/>
<ellipse cx="368.5" cy="240.3" rx="2.3" ry="2.1" fill="#ee9cac" opacity="0.73"/>
<ellipse cx="370.2" cy="244.9" rx="3.0" ry="2.7" fill="#a8dce0" opacity="0.73"/>
<ellipse cx="365.8" cy="236.7" rx="3.0" ry="1.7" fill="#f4d0d6" opacity="0.70"/>
<ellipse cx="369.5" cy="238.1" rx="2.2" ry="1.4" fill="#f0b0bc" opacity="0.82"/>
<ellipse cx="359.7" cy="237.4" rx="3.0" ry="3.2" fill="#e07890" opacity="0.99"/>
<ellipse cx="360.3" cy="237.5" rx="2.0" ry="2.8" fill="#f0b0bc" opacity="0.86"/>
<ellipse cx="362.0" cy="243.9" rx="1.3" ry="2.2" fill="#f0b0bc" opacity="0.65"/>
<ellipse cx="356.5" cy="241.4" rx="1.2" ry="1.7" fill="#e4889a" opacity="0.61"/>
<ellipse cx="366.3" cy="246.8" rx="2.1" ry="2.3" fill="#f0b0bc" opacity="0.74"/>
<ellipse cx="362.9" cy="242.4" rx="1.3" ry="3.0" fill="#e4889a" opacity="0.73"/>
<ellipse cx="368.3" cy="247.7" rx="2.8" ry="3.0" fill="#f0b0bc" opacity="0.72"/>
<ellipse cx="370.6" cy="239.9" rx="1.6" ry="2.9" fill="#e4889a" opacity="0.96"/>
<ellipse cx="370.1" cy="243.5" rx="2.6" ry="2.3" fill="#a8dce0" opacity="0.85"/>
<ellipse cx="366.7" cy="249.1" rx="1.3" ry="1.4" fill="#e07890" opacity="0.93"/>
<ellipse cx="367.6" cy="242.2" rx="2.0" ry="3.0" fill="#e4889a" opacity="0.88"/>
<ellipse cx="368.6" cy="241.4" rx="1.4" ry="1.6" fill="#e4889a" opacity="0.65"/>
<ellipse cx="362.7" cy="240.0" rx="2.6" ry="2.2" fill="#e4889a" opacity="0.92"/>
<ellipse cx="410.2" cy="407.8" rx="3.0" ry="2.4" fill="#e8a0b0" opacity="0.99"/>
<ellipse cx="416.0" cy="403.9" rx="1.7" ry="1.5" fill="#a4dce0" opacity="0.79"/>
<ellipse cx="419.9" cy="407.2" rx="1.3" ry="3.0" fill="#a4dce0" opacity="0.84"/>
<ellipse cx="413.3" cy="407.1" rx="2.8" ry="1.4" fill="#e4ecec" opacity="1.00"/>
<ellipse cx="414.9" cy="406.7" rx="2.7" ry="1.3" fill="#e8a0b0" opacity="1.00"/>
<ellipse cx="418.3" cy="405.7" rx="2.7" ry="2.0" fill="#c0e4e8" opacity="0.62"/>
<ellipse cx="419.5" cy="406.7" rx="3.0" ry="1.8" fill="#c0e4e8" opacity="0.91"/>
<ellipse cx="409.4" cy="404.7" rx="2.9" ry="2.6" fill="#d88898" opacity="0.90"/>
<ellipse cx="409.0" cy="404.3" rx="2.7" ry="1.4" fill="#c0e4e8" opacity="0.69"/>
<ellipse cx="408.4" cy="406.6" rx="2.8" ry="2.8" fill="#e8a0b0" opacity="0.70"/>
<ellipse cx="407.9" cy="403.8" rx="2.4" ry="1.7" fill="#e8a0b0" opacity="0.84"/>
<ellipse cx="412.9" cy="401.5" rx="2.9" ry="1.6" fill="#e8a0b0" opacity="0.84"/>
<ellipse cx="409.2" cy="402.2" rx="2.2" ry="2.6" fill="#a4dce0" opacity="0.63"/>
</g>
<path d="M98.5 476 C103 463 110 452 122 444 C131 438.6 141 434 152 431 L330 420 L389 406 C398 410 406 413.4 411.6 416.2 C421 421.6 428 427.6 432 433 C440 446 446 460 451 476 Z" fill="#0b0b0c" filter="url(#b1)"/>
<path d="M244.3 181.7 C247.7 181.5 249.9 182.2 252.0 182.6 C254.1 183.0 254.8 184.2 257.0 184.2 C259.1 184.2 262.1 182.7 264.9 182.5 C267.7 182.3 271.0 182.7 274.0 183.0 C277.0 183.3 279.4 183.5 283.0 184.3 C286.6 185.1 291.4 186.5 295.7 188.0 C300.0 189.5 304.3 190.9 308.6 193.3 C312.9 195.7 317.1 198.9 321.4 202.3 C325.7 205.7 331.0 210.6 334.3 213.9 C337.6 217.2 338.9 219.0 341.0 222.0 C343.1 225.0 345.2 229.0 347.0 232.0 C348.8 235.0 350.5 237.0 352.0 240.0 C353.5 243.0 354.5 246.2 356.0 250.0 C357.5 253.8 359.2 258.5 361.0 263.0 C362.8 267.5 365.0 272.4 367.0 277.0 C369.0 281.6 371.2 286.2 373.0 290.5 C374.8 294.8 376.2 298.8 378.0 303.0 C379.8 307.2 382.3 311.8 384.0 316.0 C385.7 320.2 387.0 324.0 388.0 328.0 C389.0 332.0 389.8 336.0 390.0 340.0 C390.2 344.0 388.7 348.0 389.0 352.0 C389.3 356.0 390.8 360.0 392.0 364.0 C393.2 368.0 395.2 372.3 396.0 376.0 C396.8 379.7 397.0 382.5 396.5 386.0 C396.0 389.5 394.6 394.0 393.0 397.0 C391.4 400.0 387.2 402.2 387.0 404.0 C386.8 405.8 389.5 406.5 392.0 408.0 C394.5 409.5 404.0 408.3 402.0 413.0 C400.0 417.7 397.0 430.7 380.0 436.0 C363.0 441.3 330.0 443.0 300.0 445.0 C270.0 447.0 225.0 448.8 200.0 448.0 C175.0 447.2 160.7 442.0 150.0 440.0 C139.3 438.0 136.7 437.7 136.0 436.0 C135.3 434.3 144.8 432.7 146.0 430.0 C147.2 427.3 144.2 423.2 143.0 420.0 C141.8 416.8 140.7 414.2 139.0 410.5 C137.3 406.8 134.8 402.2 133.0 398.0 C131.2 393.8 128.3 389.0 128.0 385.0 C127.7 381.0 131.0 377.5 131.0 374.0 C131.0 370.5 129.6 367.2 128.0 364.0 C126.4 360.8 122.5 358.0 121.5 355.0 C120.5 352.0 121.2 349.2 122.0 346.0 C122.8 342.8 124.7 339.5 126.0 335.5 C127.3 331.5 129.0 326.2 130.0 322.0 C131.0 317.8 131.0 313.3 132.0 310.0 C133.0 306.7 134.6 304.3 136.0 302.0 C137.4 299.7 138.4 299.0 140.4 296.0 C142.4 293.0 145.2 288.2 148.0 284.0 C150.8 279.8 154.5 275.5 157.0 271.0 C159.5 266.5 160.9 261.6 163.0 257.0 C165.1 252.4 167.6 247.7 169.4 243.5 C171.2 239.3 172.4 235.7 174.0 232.0 C175.6 228.3 176.5 224.9 179.0 221.4 C181.5 217.9 185.3 214.2 189.0 211.0 C192.7 207.8 198.2 204.5 201.0 202.0 C203.8 199.5 202.8 198.2 205.7 195.9 C208.6 193.6 214.3 190.1 218.6 188.0 C222.9 185.9 227.1 184.6 231.4 183.5 C235.7 182.4 240.9 181.8 244.3 181.7Z" fill="#130f0c" filter="url(#b1)"/>
<g clip-path="url(#hairclip)">
<ellipse cx="188" cy="262" rx="10" ry="44" transform="rotate(18 188 262)" fill="#4a3824" opacity="0.22" filter="url(#b8)"/>
<ellipse cx="160" cy="330" rx="16" ry="34" transform="rotate(8 160 330)" fill="#3a2e20" opacity="0.25" filter="url(#b8)"/>
<ellipse cx="170" cy="400" rx="16" ry="28" transform="rotate(-5 170 400)" fill="#382c1e" opacity="0.22" filter="url(#b8)"/>
<ellipse cx="318" cy="238" rx="12" ry="38" transform="rotate(-32 318 238)" fill="#54402a" opacity="0.22" filter="url(#b8)"/>
<ellipse cx="345" cy="290" rx="12" ry="36" transform="rotate(-22 345 290)" fill="#463622" opacity="0.22" filter="url(#b8)"/>
<ellipse cx="365" cy="350" rx="12" ry="34" transform="rotate(-8 365 350)" fill="#382c1e" opacity="0.22" filter="url(#b8)"/>
<ellipse cx="200" cy="425" rx="7" ry="36" transform="rotate(12 200 425)" fill="#4a3a24" opacity="0.35" filter="url(#b8)"/>
</g>
<g clip-path="url(#hairclip)"><g filter="url(#b1)" fill="none" stroke-linecap="round" stroke-linejoin="round">
<path d="M161.2 364.2 L160.7 369.3 L161.8 374.4 L163.4 379.4 L163.8 384.5 L163.2 389.8 L163.3 394.9 L164.9 399.8 L167.1 404.5 L168.1 409.4 L168.1 414.6 L168.4 419.6 L169.9 424.4 L171.7 429.2 L172.0 434.2" stroke="#18120d" stroke-width="2.3" opacity="1.00"/>
<path d="M168.0 361.0 L166.7 366.0 L166.1 371.1 L167.1 376.1 L168.7 381.1 L169.1 386.2 L168.5 391.3 L168.3 396.5 L169.7 401.3 L171.8 406.0 L172.9 410.9 L172.7 416.0 L172.7 421.0 L173.9 425.8 L175.7 430.6 L175.9 435.5" stroke="#120e0b" stroke-width="3.0" opacity="0.81"/>
<path d="M162.7 359.3 L161.4 364.3 L160.9 369.4 L162.1 374.5 L163.6 379.5 L164.0 384.6 L163.4 389.8 L163.5 395.0 L165.2 399.9 L167.3 404.6 L168.3 409.5 L168.2 414.7 L168.6 419.7 L170.1 424.5 L171.9 429.3 L172.1 434.2 L170.3 438.8 L167.9 442.8 L166.0 447.3" stroke="#120e0b" stroke-width="2.1" opacity="0.81"/>
<path d="M189.1 299.7 L191.6 304.8 L192.8 309.6" stroke="#18120d" stroke-width="2.2" opacity="0.97"/>
<path d="M190.5 295.9 L190.1 300.6 L192.9 305.7 L194.2 310.5 L191.5 315.0 L188.0 319.4 L188.2 324.2 L191.6 328.8" stroke="#120e0b" stroke-width="2.8" opacity="0.71"/>
<path d="M194.1 276.1 L195.1 281.4 L195.9 286.6 L193.8 290.9 L190.3 295.2 L189.3 299.8 L191.2 304.8 L192.6 309.7 L190.8 314.3" stroke="#080706" stroke-width="3.3" opacity="0.96"/>
<path d="M140.8 387.3 L141.4 392.7 L142.6 398.0 L144.8 402.9 L147.5 407.6 L149.8 412.5 L151.3 417.7 L151.8 423.0 L151.8 428.0" stroke="#1e1610" stroke-width="3.0" opacity="0.73"/>
<path d="M139.5 372.3 L141.4 377.4 L142.5 382.7 L142.8 388.1 L143.2 393.5 L144.7 398.7 L147.1 403.5 L149.9 408.1 L152.0 413.1 L152.9 418.4 L153.2 423.7 L153.4 428.6" stroke="#120e0b" stroke-width="2.5" opacity="0.89"/>
<path d="M144.1 378.4 L145.6 383.6 L146.2 388.9 L146.5 394.3 L147.4 399.5 L149.4 404.5 L152.1 409.1 L154.5 413.9 L155.8 419.1 L156.0 424.4 L155.7 429.4 L155.2 433.8" stroke="#120e0b" stroke-width="1.8" opacity="0.82"/>
<path d="M209.6 274.4 L209.2 279.0 L207.5 283.4 L205.2 287.7" stroke="#120e0b" stroke-width="1.5" opacity="0.86"/>
<path d="M216.1 258.4 L213.4 262.5 L211.3 266.7 L210.6 271.3 L210.8 276.1 L210.6 280.8 L209.2 285.2 L207.0 289.5 L205.2 293.9 L204.9 298.5" stroke="#1e1610" stroke-width="1.9" opacity="0.72"/>
<path d="M209.8 270.0 L210.1 274.9 L209.7 279.5 L207.9 283.9 L205.5 288.1 L203.9 292.5 L203.9 297.3" stroke="#18120d" stroke-width="1.8" opacity="0.90"/>
<path d="M168.9 418.5 L168.8 423.7 L167.8 428.8 L167.9 433.5 L168.8 438.3 L168.2 443.3" stroke="#120e0b" stroke-width="3.2" opacity="0.78"/>
<path d="M167.4 417.9 L167.7 423.1 L166.6 428.3 L166.2 433.0 L167.0 437.7 L166.8 442.8 L163.9 447.1 L159.5 450.2" stroke="#0b0908" stroke-width="1.7" opacity="0.98"/>
<path d="M158.6 403.2 L159.9 408.1 L163.0 412.6 L165.7 417.2 L165.8 422.5 L164.6 427.7 L164.3 432.4 L165.4 437.1" stroke="#0b0908" stroke-width="2.3" opacity="0.76"/>
<path d="M174.6 344.1 L175.8 349.0 L175.6 353.9 L174.3 358.9 L174.1 363.8 L175.3 368.7" stroke="#1e1610" stroke-width="2.7" opacity="0.71"/>
<path d="M173.4 334.0 L172.7 338.9 L173.9 343.8 L175.2 348.7 L174.7 353.6" stroke="#18120d" stroke-width="2.2" opacity="0.72"/>
<path d="M170.5 337.8 L171.4 342.7 L172.3 347.6 L171.9 352.6 L170.7 357.5 L170.5 362.5 L171.5 367.5 L172.3 372.4" stroke="#18120d" stroke-width="2.3" opacity="0.95"/>
<path d="M182.4 414.3 L184.0 419.0 L184.7 423.8 L184.3 428.7 L183.3 433.6 L182.2 438.1 L181.3 442.5" stroke="#1e1610" stroke-width="2.7" opacity="0.77"/>
<path d="M181.8 414.1 L183.4 418.8 L184.2 423.6 L183.9 428.6 L182.9 433.4 L181.8 438.0 L180.8 442.4" stroke="#120e0b" stroke-width="3.2" opacity="0.92"/>
<path d="M177.3 408.5 L179.3 413.1 L181.0 417.9 L181.6 422.7 L181.2 427.7 L180.1 432.6 L179.1 437.2 L178.5 441.6 L177.9 446.2" stroke="#18120d" stroke-width="2.0" opacity="0.98"/>
<path d="M201.9 273.3 L201.3 278.0 L201.6 282.9 L202.0 287.9 L201.7 292.6 L200.4 297.0 L198.5 301.5 L196.9 306.1 L196.3 310.8" stroke="#1e1610" stroke-width="2.2" opacity="0.99"/>
<path d="M202.9 293.6 L201.7 298.0 L199.7 302.4" stroke="#18120d" stroke-width="2.9" opacity="0.95"/>
<path d="M202.6 279.5 L202.9 284.5 L203.3 289.4 L203.1 294.0 L201.9 298.4 L200.2 302.9 L198.7 307.6 L198.1 312.3" stroke="#0b0908" stroke-width="2.2" opacity="0.85"/>
<path d="M156.9 386.9 L156.5 392.3 L156.0 397.7 L157.0 402.7 L159.6 407.4 L162.5 411.9 L164.2 416.8 L164.2 422.1 L163.4 427.3 L163.2 432.1 L163.7 436.6 L163.4 441.6" stroke="#0b0908" stroke-width="1.6" opacity="0.78"/>
<path d="M153.5 385.8 L153.0 391.2 L152.6 396.7 L153.7 401.8 L156.5 406.4 L159.6 410.9 L161.3 415.8 L161.3 421.2 L160.6 426.5 L160.5 431.2 L161.1 435.7 L160.9 440.8" stroke="#1e1610" stroke-width="3.2" opacity="0.84"/>
<path d="M152.0 396.6 L153.3 401.7 L156.3 406.2 L159.4 410.7 L161.0 415.7 L160.8 421.1 L160.1 426.4 L160.2 431.1 L161.0 435.7 L160.8 440.8 L158.4 445.5 L154.3 448.9 L149.6 451.8" stroke="#18120d" stroke-width="2.5" opacity="0.79"/>
<path d="M170.3 311.4 L169.2 316.0 L167.1 320.5 L165.4 325.1 L165.2 330.0 L166.1 335.1 L166.4 340.0 L165.4 345.0 L163.9 350.0 L163.6 355.0 L164.5 360.1 L165.4 365.1 L165.1 370.1 L164.1 375.3" stroke="#18120d" stroke-width="1.9" opacity="0.72"/>
<path d="M170.9 295.2 L169.0 299.9 L168.6 305.0 L168.4 310.1 L166.9 314.7 L164.4 319.1 L162.5 323.7 L162.6 328.7 L163.6 333.8 L163.6 338.8 L162.2 343.8 L160.5 348.7 L160.4 353.8 L161.6 358.9 L162.4 364.0 L161.7 369.1 L160.5 374.3" stroke="#0b0908" stroke-width="2.3" opacity="0.73"/>
<path d="M173.3 290.3 L170.3 294.6 L167.8 299.1 L167.0 304.1 L166.9 309.3 L165.9 314.0 L163.5 318.4 L161.3 323.0 L160.7 327.9 L161.6 333.1 L162.1 338.1 L161.1 343.1 L159.2 348.1 L158.5 353.1 L159.3 358.3 L160.4 363.4 L160.3 368.5" stroke="#0b0908" stroke-width="2.6" opacity="0.72"/>
<path d="M161.7 288.3 L160.2 293.3 L159.1 298.5 L157.5 303.4 L155.2 308.0 L152.4 312.4 L150.3 317.1 L149.4 322.2" stroke="#0b0908" stroke-width="2.6" opacity="0.73"/>
<path d="M170.5 275.4 L167.5 279.7 L164.6 284.2 L162.7 289.0 L161.5 294.1 L160.4 299.3 L158.6 304.1 L155.9 308.5" stroke="#18120d" stroke-width="2.9" opacity="0.71"/>
<path d="M166.1 278.5 L163.2 282.9 L160.9 287.7 L159.6 292.8 L158.4 298.0 L156.6 302.8 L154.0 307.3 L151.2 311.7" stroke="#080706" stroke-width="1.8" opacity="0.79"/>
<path d="M212.4 244.2 L210.2 248.4 L206.9 252.1 L204.5 256.2 L203.9 261.1 L203.5 266.0 L201.8 270.4 L199.2 274.7 L197.7 279.3 L197.7 284.3 L197.5 289.1" stroke="#120e0b" stroke-width="1.9" opacity="0.82"/>
<path d="M215.1 235.3 L213.7 239.9 L212.6 244.6 L210.3 248.7 L207.1 252.5 L204.9 256.7 L204.3 261.5 L203.8 266.4 L202.0 270.8 L199.5 275.1 L198.2 279.7 L198.1 284.7 L197.9 289.5 L196.3 293.9 L194.5 298.5 L194.2 303.2 L195.2 307.9" stroke="#18120d" stroke-width="1.4" opacity="0.82"/>
<path d="M213.1 239.1 L211.9 243.8 L210.0 248.1 L207.1 251.9 L204.5 256.0 L203.4 260.7 L202.9 265.6 L201.6 270.2 L199.4 274.5 L197.6 279.1 L197.1 283.9 L196.9 288.8 L195.9 293.3 L194.2 297.9" stroke="#0b0908" stroke-width="1.7" opacity="0.83"/>
<path d="M164.9 413.8 L167.8 418.4 L169.5 423.3 L169.0 428.4 L167.5 433.3 L166.4 437.6 L166.0 442.3" stroke="#1e1610" stroke-width="2.6" opacity="0.73"/>
<path d="M168.3 418.2 L169.5 423.2 L168.5 428.5 L166.9 433.3 L166.3 437.6 L166.4 442.5 L165.3 447.7 L162.1 451.7" stroke="#0b0908" stroke-width="2.4" opacity="0.73"/>
<path d="M164.1 413.8 L167.2 418.3 L169.3 423.1 L169.2 428.3 L167.5 433.2 L165.9 437.4 L165.3 441.9 L164.4 447.2 L162.1 451.8 L158.1 455.2" stroke="#1e1610" stroke-width="2.6" opacity="0.79"/>
<path d="M215.4 223.9 L211.3 227.0 L208.5 231.0 L207.0 235.8 L205.9 240.8 L204.1 245.3 L201.2 249.2 L197.8 252.9 L194.8 257.1 L193.3 261.9 L193.1 267.0 L193.2 272.2 L192.4 277.1 L190.2 281.6 L187.4 285.9 L185.1 290.4" stroke="#080706" stroke-width="3.1" opacity="0.95"/>
<path d="M220.2 222.1 L215.6 224.6 L211.3 227.5 L208.5 231.5 L207.2 236.4 L206.5 241.6 L204.9 246.2 L202.0 250.0 L198.3 253.6 L195.1 257.8 L193.5 262.5 L193.6 267.7 L194.0 273.0 L193.4 278.0 L191.1 282.4" stroke="#0b0908" stroke-width="3.3" opacity="0.74"/>
<path d="M214.7 222.9 L210.7 226.1 L208.2 230.3 L207.0 235.3 L205.9 240.3 L203.8 244.6 L200.5 248.3 L196.7 251.9 L193.9 256.2 L192.8 261.1 L192.9 266.4 L193.0 271.7 L191.8 276.5 L189.2 280.8 L186.1 285.1 L184.0 289.6" stroke="#18120d" stroke-width="2.6" opacity="0.74"/>
<path d="M197.4 336.1 L197.1 340.8 L196.3 345.6 L196.5 350.3 L198.4 354.8 L200.8 359.1 L202.2 363.7 L201.9 368.5 L201.0 373.4 L201.0 378.1 L202.3 382.7 L203.9 387.4 L204.4 392.2" stroke="#1e1610" stroke-width="1.4" opacity="0.75"/>
<path d="M196.9 336.1 L196.9 340.8 L196.5 345.5 L196.8 350.2 L198.4 354.7 L200.4 359.1 L201.7 363.7 L201.7 368.5 L201.2 373.3 L201.2 378.0 L202.2 382.6 L203.5 387.4 L203.9 392.2 L203.0 396.9 L201.6 401.7" stroke="#120e0b" stroke-width="2.2" opacity="0.94"/>
<path d="M197.5 340.9 L196.8 345.8 L196.9 350.5 L198.7 354.9 L201.1 359.3 L202.6 363.8 L202.4 368.6 L201.5 373.5 L201.4 378.2 L202.6 382.8 L204.2 387.5 L204.8 392.3" stroke="#0b0908" stroke-width="1.7" opacity="0.71"/>
<path d="M157.4 270.6 L152.6 274.2 L148.1 278.0 L146.4 283.5 L145.9 289.6 L143.2 294.5 L138.2 298.0 L134.2 302.3 L133.4 308.1 L133.6 314.1 L131.3 319.1 L127.2 323.7 L125.1 328.9 L126.2 334.9 L126.8 340.7 L124.3 345.8 L120.8 351.0 L120.7 356.6" stroke="#0b0908" stroke-width="3.4" opacity="0.96"/>
<path d="M151.0 280.2 L149.3 285.5 L148.7 291.5 L146.1 296.3 L141.5 300.1 L137.9 304.4 L137.2 310.1 L137.2 315.8 L135.1 320.8 L131.5 325.5 L129.7 330.8 L130.5 336.6 L131.0 342.3 L128.7 347.4 L125.8 352.6" stroke="#120e0b" stroke-width="2.8" opacity="0.91"/>
<path d="M160.6 259.9 L159.9 265.9 L158.2 271.2 L154.0 275.2 L149.5 279.1 L147.4 284.2 L146.6 290.2 L144.4 295.2 L139.9 299.1 L135.9 303.2 L134.7 308.8 L134.7 314.7 L133.0 319.8 L129.4 324.5 L127.1 329.7 L127.6 335.5 L128.2 341.3 L126.3 346.5" stroke="#080706" stroke-width="3.0" opacity="0.78"/>
<path d="M213.4 399.8 L213.0 404.5 L210.3 409.0 L208.3 413.6" stroke="#120e0b" stroke-width="2.7" opacity="0.82"/>
<path d="M210.7 409.2 L208.5 413.8 L209.9 418.5 L212.7 423.4" stroke="#080706" stroke-width="3.1" opacity="0.71"/>
<path d="M212.5 404.4 L209.5 408.9 L208.1 413.5 L209.7 418.3 L211.9 423.2 L211.4 427.8 L208.4 432.2 L206.1 436.6" stroke="#18120d" stroke-width="2.7" opacity="1.00"/>
<path d="M178.9 389.8 L178.7 394.8 L179.3 399.8 L180.6 404.6 L182.1 409.3 L183.2 414.1" stroke="#120e0b" stroke-width="3.3" opacity="0.88"/>
<path d="M179.1 394.9 L179.6 399.9 L180.8 404.7 L182.3 409.4 L183.5 414.2 L183.9 419.0 L183.7 423.9" stroke="#18120d" stroke-width="2.9" opacity="0.92"/>
<path d="M178.3 384.3 L177.5 389.3 L177.0 394.3 L177.4 399.3 L178.6 404.1 L180.3 408.9" stroke="#0b0908" stroke-width="1.9" opacity="0.74"/>
<path d="M181.2 342.3 L180.6 347.1 L181.0 351.9 L182.2 356.7 L183.2 361.5 L183.3 366.4 L182.5 371.3" stroke="#080706" stroke-width="2.1" opacity="0.74"/>
<path d="M183.3 352.8 L184.7 357.5 L185.5 362.3 L185.2 367.2 L184.4 372.1 L184.2 377.0" stroke="#1e1610" stroke-width="2.7" opacity="0.73"/>
<path d="M180.7 342.2 L180.3 347.0 L180.9 351.8 L182.1 356.6" stroke="#080706" stroke-width="2.6" opacity="0.97"/>
<path d="M164.9 385.9 L165.7 391.0 L168.0 395.8 L170.3 400.5 L171.2 405.4 L170.7 410.6 L170.0 415.8 L170.7 420.7 L172.9 425.4 L175.1 430.1 L175.7 435.2 L173.6 439.8" stroke="#120e0b" stroke-width="1.5" opacity="0.77"/>
<path d="M167.1 409.7 L166.8 414.9 L168.0 419.8 L170.5 424.4 L172.6 429.2 L172.8 434.3 L170.6 438.9 L167.4 442.6" stroke="#120e0b" stroke-width="2.7" opacity="0.86"/>
<path d="M164.7 394.6 L166.6 399.4 L167.2 404.4 L166.7 409.6 L166.5 414.8 L167.9 419.6 L170.3 424.3 L172.3 429.1 L172.4 434.2 L170.2 438.7" stroke="#0b0908" stroke-width="2.8" opacity="1.00"/>
<path d="M192.0 265.0 L189.2 269.3 L187.1 273.9 L186.4 278.9 L186.4 284.0 L185.8 288.9 L183.9 293.4 L181.6 297.8 L180.0 302.4 L179.7 307.3 L180.1 312.3" stroke="#0b0908" stroke-width="2.7" opacity="0.78"/>
<path d="M184.7 271.4 L183.9 276.4 L183.9 281.6 L183.2 286.5 L181.2 291.0 L178.6 295.4 L176.7 299.9 L176.2 304.8 L176.5 309.9" stroke="#0b0908" stroke-width="2.5" opacity="0.78"/>
<path d="M193.3 259.1 L190.9 263.6 L188.0 268.0 L185.9 272.6 L185.2 277.6 L185.1 282.8 L184.4 287.6 L182.4 292.1 L180.0 296.5 L178.3 301.1 L177.9 306.0 L178.2 311.0 L177.9 315.8 L176.3 320.3" stroke="#120e0b" stroke-width="2.4" opacity="0.73"/>
<path d="M134.7 354.7 L132.0 359.9 L130.8 365.5 L133.0 370.7 L136.7 375.6 L138.3 380.8 L137.3 386.5 L136.8 392.4 L139.3 397.3 L143.8 401.4 L146.9 406.1 L146.9 411.8 L146.2 417.7 L147.7 422.7 L151.1 427.2 L152.5 432.6 L149.1 436.9" stroke="#080706" stroke-width="3.2" opacity="0.77"/>
<path d="M138.2 376.1 L139.7 381.3 L138.8 387.0 L138.4 392.8 L140.9 397.7 L145.2 401.9 L148.1 406.6 L148.2 412.3 L147.5 418.1 L149.1 423.0 L152.3 427.6 L153.5 433.0 L150.2 437.3 L145.0 439.9" stroke="#080706" stroke-width="3.1" opacity="0.91"/>
<path d="M135.2 360.6 L133.6 366.2 L134.7 371.5 L138.0 376.5 L140.4 381.5 L140.2 387.0 L139.5 392.8 L141.1 398.0 L144.9 402.4 L148.4 406.8 L149.4 412.2 L148.8 418.0 L149.3 423.2 L151.9 427.8 L153.5 433.0" stroke="#080706" stroke-width="2.5" opacity="0.88"/>
<path d="M152.2 413.2 L152.9 418.6 L153.2 423.9 L153.6 428.7" stroke="#120e0b" stroke-width="2.7" opacity="0.91"/>
<path d="M157.0 414.8 L157.4 420.1 L157.6 425.3 L157.9 430.1 L158.1 434.7 L157.3 439.5" stroke="#080706" stroke-width="1.5" opacity="0.97"/>
<path d="M148.1 403.4 L150.7 408.2 L152.4 413.3 L153.1 418.6 L153.3 423.9 L153.7 428.8 L153.9 433.3" stroke="#0b0908" stroke-width="3.3" opacity="0.71"/>
<path d="M243.2 214.7 L238.9 216.5 L234.5 218.2 L230.5 220.6 L227.3 224.1 L225.0 228.2 L223.0 232.5 L220.9 236.6 L218.5 240.5 L215.8 244.4 L213.4 248.5 L211.5 252.8 L210.4 257.3 L209.5 262.0 L208.5 266.6 L207.1 271.0 L205.2 275.4 L203.4 279.8" stroke="#120e0b" stroke-width="2.1" opacity="0.79"/>
<path d="M243.1 213.7 L238.8 215.5 L234.4 217.1 L230.3 219.4 L227.0 222.8 L224.6 226.9 L222.6 231.2 L220.5 235.4 L218.0 239.3 L215.2 243.1 L212.6 247.1 L210.7 251.3 L209.4 255.9 L208.6 260.6 L207.6 265.2 L206.1 269.6 L204.2 274.0 L202.2 278.4" stroke="#18120d" stroke-width="2.6" opacity="0.93"/>
<path d="M230.3 219.8 L227.1 223.3 L224.9 227.5 L222.9 231.8 L220.7 235.9 L218.1 239.8 L215.3 243.6 L212.8 247.6 L211.0 251.9 L209.9 256.5 L209.1 261.2" stroke="#080706" stroke-width="2.1" opacity="0.93"/>
<path d="M178.0 294.8 L177.6 299.8 L177.0 304.7 L175.9 309.4 L174.2 314.0 L172.4 318.5 L171.1 323.1" stroke="#120e0b" stroke-width="2.9" opacity="0.79"/>
<path d="M180.1 306.7 L179.1 311.4 L177.4 316.0 L175.6 320.5 L174.5 325.1 L174.4 329.9 L175.1 334.7 L176.1 339.5 L176.6 344.3" stroke="#1e1610" stroke-width="3.3" opacity="0.88"/>
<path d="M179.0 311.3 L177.5 315.8 L175.7 320.3 L174.3 324.9 L173.8 329.7 L174.4 334.5 L175.4 339.3 L176.2 344.2 L176.1 349.1" stroke="#120e0b" stroke-width="1.6" opacity="0.85"/>
<path d="M130.9 353.7 L132.1 358.9 L132.2 364.1 L131.4 369.7 L130.7 375.4 L131.4 380.9 L133.9 386.0 L137.4 390.6 L140.4 395.3 L141.9 400.5 L142.3 406.2 L142.6 411.9 L144.0 417.1 L146.8 421.8 L149.6 426.5 L150.3 431.9 L147.6 436.6" stroke="#1e1610" stroke-width="2.9" opacity="0.97"/>
<path d="M132.2 354.2 L133.8 359.5 L134.4 364.6 L133.7 370.1 L132.6 375.9 L132.7 381.5 L134.9 386.7 L138.5 391.2 L142.0 395.7 L143.9 400.8 L144.3 406.4 L144.1 412.2 L145.0 417.6 L147.4 422.3 L150.4 427.0 L151.6 432.3 L149.3 437.3" stroke="#080706" stroke-width="2.2" opacity="0.85"/>
<path d="M132.9 359.3 L133.5 364.5 L133.1 370.0 L132.3 375.7 L132.5 381.3 L134.5 386.4 L137.8 391.1 L141.1 395.7 L143.1 400.7 L143.8 406.3 L144.0 412.0 L144.9 417.3 L147.1 422.2 L149.8 426.9 L150.9 432.1 L148.7 437.0 L144.2 440.4 L139.2 443.2" stroke="#080706" stroke-width="2.1" opacity="0.89"/>
<path d="M212.1 257.3 L210.6 261.7 L207.6 265.6 L204.2 269.5 L202.2 273.9 L202.0 278.8 L203.0 283.9 L203.5 288.8 L202.3 293.2 L199.9 297.5 L197.5 302.1 L196.9 306.8" stroke="#080706" stroke-width="2.1" opacity="0.77"/>
<path d="M211.1 251.1 L210.9 256.1 L209.7 260.6 L207.2 264.6 L204.0 268.6 L201.7 273.0 L201.0 277.7 L201.6 282.7 L202.1 287.7 L201.4 292.3 L199.3 296.6 L197.0 301.1 L195.9 305.8" stroke="#080706" stroke-width="1.7" opacity="0.75"/>
<path d="M210.9 245.9 L210.8 251.0 L211.1 256.2 L210.2 260.8 L207.6 264.7 L204.0 268.6 L201.2 272.8 L200.4 277.5 L201.3 282.6 L202.3 287.7 L201.9 292.3 L199.7 296.6" stroke="#120e0b" stroke-width="3.3" opacity="0.78"/>
<path d="M168.8 366.1 L167.0 371.2 L165.9 376.3 L167.2 381.3 L169.6 386.2 L170.7 391.2 L169.6 396.4" stroke="#18120d" stroke-width="2.7" opacity="0.76"/>
<path d="M167.7 360.6 L167.3 365.6 L165.1 370.7 L164.0 375.8 L165.7 380.8 L168.5 385.7 L169.3 390.7 L167.8 396.0" stroke="#1e1610" stroke-width="2.4" opacity="0.91"/>
<path d="M166.4 371.2 L165.7 376.3 L167.7 381.3 L170.3 386.2 L170.6 391.2 L169.0 396.5" stroke="#120e0b" stroke-width="2.3" opacity="0.97"/>
<path d="M200.5 199.9 L197.2 204.8 L193.4 208.9 L188.3 211.6 L183.1 214.2 L179.2 218.3 L177.3 223.8 L175.8 229.1 L172.7 233.8 L168.8 238.1 L165.9 242.9 L164.7 248.6 L163.7 254.3 L160.9 259.2 L156.7 263.3" stroke="#120e0b" stroke-width="2.7" opacity="0.90"/>
<path d="M215.6 192.6 L210.2 194.5 L205.0 196.8 L200.9 200.7 L197.6 205.5 L193.7 209.6 L188.7 212.3 L183.6 215.0 L179.9 219.2 L178.0 224.6 L176.3 229.9 L173.2 234.5 L169.4 238.9 L166.6 243.8 L165.5 249.4 L164.4 255.0" stroke="#1e1610" stroke-width="2.7" opacity="0.91"/>
<path d="M205.2 197.4 L201.3 201.5 L198.0 206.2 L193.8 209.9 L188.8 212.5 L183.9 215.5 L180.5 219.9 L178.6 225.3 L176.6 230.3 L173.3 234.9 L169.7 239.3 L167.3 244.4 L166.3 250.0 L164.9 255.5" stroke="#120e0b" stroke-width="2.1" opacity="0.97"/>
<path d="M157.0 309.4 L158.2 315.1 L157.4 320.0 L153.7 324.3 L150.9 329.1 L151.8 334.4 L154.0 339.9 L153.5 345.0 L150.1 349.9 L147.9 354.9 L149.5 360.3" stroke="#120e0b" stroke-width="1.6" opacity="0.86"/>
<path d="M155.4 302.8 L154.1 307.8 L155.5 313.7 L155.2 318.8 L151.5 323.1 L147.9 327.7 L148.2 333.0 L150.9 338.7 L150.9 343.9 L147.3 348.7" stroke="#18120d" stroke-width="2.2" opacity="0.86"/>
<path d="M160.2 299.2 L155.7 303.0 L154.4 308.0 L155.6 313.8 L155.2 318.8 L151.6 323.1 L148.3 327.8 L148.6 333.2 L151.0 338.7 L150.9 344.0 L147.5 348.8 L144.8 353.8" stroke="#0b0908" stroke-width="2.6" opacity="0.92"/>
<path d="M144.7 411.0 L144.6 416.8 L146.1 421.8 L149.1 426.5 L149.6 431.7 L146.1 435.7 L141.6 438.7 L138.6 443.2 L136.3 448.6" stroke="#080706" stroke-width="1.8" opacity="0.78"/>
<path d="M141.6 402.0 L145.5 406.3 L147.5 411.4 L147.2 417.2 L147.6 422.5 L150.1 427.2 L151.5 432.3 L148.7 436.8 L143.8 439.6 L140.0 443.4 L137.9 448.7" stroke="#1e1610" stroke-width="1.7" opacity="0.84"/>
<path d="M140.8 401.3 L144.3 405.8 L145.4 411.2 L145.3 416.9 L146.7 422.0 L149.5 426.7 L150.1 431.9 L146.8 436.0 L142.3 439.0 L139.1 443.4" stroke="#120e0b" stroke-width="1.7" opacity="0.94"/>
<path d="M187.5 333.0 L188.3 337.6 L190.7 342.0 L192.9 346.5 L193.0 351.2 L191.6 356.2 L190.7 361.1 L191.7 365.7 L194.2 370.3 L196.1 375.0 L195.7 379.8 L193.8 384.7 L192.3 389.6" stroke="#1e1610" stroke-width="3.1" opacity="0.81"/>
<path d="M190.9 329.7 L189.9 334.4 L191.1 339.0 L193.9 343.3 L195.9 347.7 L195.8 352.5 L194.3 357.5 L193.7 362.4 L195.2 366.9 L197.9 371.4" stroke="#0b0908" stroke-width="3.0" opacity="0.94"/>
<path d="M190.2 329.5 L189.1 334.3 L190.8 338.8 L193.9 343.1 L195.9 347.5 L195.4 352.3 L193.5 357.4 L192.9 362.2 L194.8 366.8 L197.9 371.2 L199.5 375.9 L198.4 380.8 L195.9 385.7" stroke="#0b0908" stroke-width="2.1" opacity="0.90"/>
<path d="M182.8 293.4 L181.7 298.1 L181.3 302.9 L181.2 307.8 L180.9 312.7 L180.0 317.3 L178.6 321.8 L177.2 326.4 L176.6 331.1 L176.9 335.9 L177.8 340.7 L178.8 345.5 L179.2 350.3 L178.8 355.2 L178.0 360.1 L177.5 365.0 L177.6 369.9 L178.5 374.9 L179.6 379.8 L180.3 384.7 L180.3 389.7" stroke="#080706" stroke-width="1.4" opacity="0.70"/>
<path d="M184.8 295.0 L183.6 299.6 L183.1 304.4 L183.1 309.3 L183.0 314.1 L182.4 318.8 L181.3 323.3 L180.2 327.9 L179.5 332.6 L179.6 337.3 L180.6 342.1 L181.7 346.8 L182.4 351.6 L182.3 356.5 L181.7 361.4 L181.2 366.3 L181.1 371.1 L181.8 376.0" stroke="#120e0b" stroke-width="2.3" opacity="0.76"/>
<path d="M182.7 304.0 L182.7 308.9 L182.5 313.7 L181.7 318.3 L180.4 322.9 L179.2 327.5 L178.6 332.2 L178.9 336.9 L179.9 341.7 L181.0 346.4 L181.5 351.2 L181.2 356.1 L180.5 361.0 L180.0 365.9 L180.2 370.8 L181.0 375.7 L182.1 380.6 L182.8 385.5" stroke="#080706" stroke-width="1.6" opacity="0.99"/>
<path d="M143.4 342.0 L142.4 347.2 L143.4 352.7 L144.6 358.0 L144.3 363.1 L142.8 368.5 L142.2 374.0 L143.8 379.1 L146.6 384.0 L148.6 389.0 L148.8 394.3 L148.5 399.9 L149.7 405.1 L152.8 409.6 L156.0 414.2 L157.3 419.3" stroke="#0b0908" stroke-width="1.9" opacity="0.87"/>
<path d="M141.5 341.3 L140.9 346.6 L142.0 352.1 L142.8 357.4 L142.0 362.5 L140.5 367.9 L140.4 373.4 L142.4 378.5 L145.2 383.4 L146.7 388.5 L146.6 394.0 L146.6 399.5 L148.4 404.5 L151.7 409.0" stroke="#120e0b" stroke-width="1.9" opacity="0.91"/>
<path d="M139.9 340.7 L139.1 346.0 L140.3 351.5 L141.3 356.9 L140.6 362.0 L139.0 367.4 L138.6 372.9 L140.6 378.1 L143.7 382.9 L145.4 388.0 L145.3 393.4 L145.1 399.1 L146.7 404.2" stroke="#080706" stroke-width="2.0" opacity="0.85"/>
<path d="M167.1 298.8 L165.3 303.5 L165.3 308.7 L166.0 314.0" stroke="#0b0908" stroke-width="3.3" opacity="0.90"/>
<path d="M167.5 298.7 L164.7 303.1 L163.7 308.0 L164.1 313.3 L164.5 318.4 L163.8 323.2 L161.5 327.7 L159.0 332.5" stroke="#0b0908" stroke-width="2.2" opacity="0.76"/>
<path d="M170.2 294.1 L166.4 298.1 L163.8 302.5 L163.2 307.6 L163.9 313.0 L164.2 318.1 L163.0 322.8 L160.3 327.3" stroke="#080706" stroke-width="1.8" opacity="0.93"/>
<path d="M200.0 257.2 L199.5 262.1 L199.4 267.2 L198.8 272.1 L197.1 276.6 L194.6 281.0 L192.1 285.4 L190.7 290.0 L190.6 294.9" stroke="#52402a" stroke-width="1.2" opacity="0.85"/>
<path d="M203.3 254.8 L201.2 259.2 L200.6 264.2 L200.8 269.3 L200.7 274.2 L199.4 278.9 L197.0 283.2 L194.3 287.5 L192.5 292.1 L192.2 296.9 L193.2 301.7" stroke="#463624" stroke-width="1.6" opacity="0.73"/>
<path d="M199.8 267.6 L199.0 272.4 L197.1 276.9 L194.5 281.2 L192.3 285.7 L191.1 290.4 L191.2 295.2" stroke="#3a2c1e" stroke-width="0.9" opacity="0.66"/>
<path d="M200.5 268.3 L199.9 273.2 L198.1 277.7 L195.4 282.0 L192.9 286.4" stroke="#5c4a32" stroke-width="1.5" opacity="0.86"/>
<path d="M206.8 243.2 L205.7 248.0 L203.5 252.2 L200.4 256.1 L197.4 260.2 L195.5 264.8 L195.2 269.8 L195.4 274.9 L194.8 279.9 L192.9 284.3 L190.2 288.7 L188.2 293.2 L187.7 297.9 L188.5 302.9 L189.2 307.8" stroke="#120e0b" stroke-width="1.8" opacity="0.73"/>
<path d="M205.1 240.8 L204.2 245.8 L202.3 250.2 L199.4 254.1 L196.0 258.1 L193.7 262.5 L192.9 267.5 L193.1 272.7 L192.9 277.8 L191.3 282.4 L188.6 286.7 L186.1 291.1 L185.0 295.8 L185.4 300.8 L186.3 305.8" stroke="#120e0b" stroke-width="2.5" opacity="0.94"/>
<path d="M206.8 237.2 L205.7 242.1 L205.0 247.2 L203.6 251.8 L200.8 255.7 L197.4 259.7 L194.7 264.0 L193.8 268.9 L194.2 274.1 L194.3 279.3 L193.0 283.9 L190.4 288.2 L187.7 292.6 L186.3 297.2 L186.8 302.1 L188.0 307.1" stroke="#080706" stroke-width="1.5" opacity="0.98"/>
<path d="M178.1 403.6 L177.9 408.6 L178.0 413.5 L178.9 418.3 L180.4 423.0 L181.7 427.8 L182.3 432.7 L181.6 437.5 L179.9 442.0" stroke="#1e1610" stroke-width="3.4" opacity="0.88"/>
<path d="M178.9 408.8 L179.1 413.7 L179.9 418.5 L181.1 423.3 L182.3 428.1 L182.8 432.9 L182.3 437.8 L180.7 442.3" stroke="#1e1610" stroke-width="1.7" opacity="0.76"/>
<path d="M179.7 399.1 L179.5 404.0 L179.2 409.0 L179.4 413.9 L180.3 418.7 L181.7 423.4 L182.9 428.2 L183.4 433.1 L182.6 437.9 L180.9 442.3 L178.7 446.5 L176.6 450.7 L174.9 455.3 L173.3 460.0" stroke="#0b0908" stroke-width="1.6" opacity="0.77"/>
<path d="M196.2 298.8 L197.2 303.6 L196.4 308.2 L194.3 312.8 L192.6 317.4 L192.9 322.1 L194.7 326.8 L196.4 331.2 L196.5 335.7 L195.4 340.5" stroke="#120e0b" stroke-width="1.6" opacity="0.92"/>
<path d="M197.8 309.5 L196.2 314.1 L194.8 318.8 L195.1 323.5 L196.7 328.1 L198.2 332.5" stroke="#0b0908" stroke-width="1.4" opacity="0.92"/>
<path d="M195.8 289.5 L194.8 294.2 L195.8 299.1 L197.2 303.9 L197.1 308.5 L195.4 313.1 L193.5 317.7 L193.0 322.4 L194.5 327.1 L196.5 331.5" stroke="#080706" stroke-width="3.1" opacity="0.75"/>
<path d="M246.3 195.5 L241.8 198.4 L237.3 200.6 L232.5 201.7 L227.4 202.7 L222.7 204.8 L219.0 208.4 L216.3 212.9 L213.8 217.4 L210.5 221.2 L206.4 224.2 L202.2 227.3 L198.8 231.0 L196.6 235.6 L195.2 240.7" stroke="#18120d" stroke-width="1.7" opacity="0.99"/>
<path d="M241.8 198.3 L237.2 200.3 L232.3 201.3 L227.3 202.3 L222.6 204.5 L219.1 208.2 L216.4 212.8 L213.7 217.2 L210.3 220.8 L206.1 223.8 L202.0 226.9 L198.7 230.7" stroke="#080706" stroke-width="2.0" opacity="0.80"/>
<path d="M237.1 200.1 L232.4 201.3 L227.4 202.4 L222.7 204.6 L219.0 208.2 L216.2 212.6 L213.5 216.9 L210.2 220.7 L206.2 223.8 L202.1 227.0 L198.7 230.7 L196.4 235.3 L194.8 240.2 L193.2 244.9" stroke="#0b0908" stroke-width="2.6" opacity="0.95"/>
<path d="M211.0 408.9 L212.1 413.7 L210.9 418.3 L208.3 422.8 L206.8 427.3 L207.5 432.0 L209.2 437.0 L209.4 441.8 L207.1 446.1 L203.7 450.0 L201.6 454.2 L201.6 459.1 L202.3 464.2 L201.4 468.9" stroke="#52402a" stroke-width="1.2" opacity="0.78"/>
<path d="M207.3 403.5 L209.8 408.3 L210.6 413.1 L208.7 417.7 L205.8 422.2 L204.7 426.8 L206.2 431.5 L208.3 436.5 L208.1 441.3 L205.1 445.5 L201.5 449.3 L199.9 453.6 L200.5 458.7 L201.4 464.0 L199.9 468.4" stroke="#52402a" stroke-width="1.8" opacity="0.83"/>
<path d="M211.4 404.7 L213.6 409.6 L214.3 414.3 L212.5 418.9 L209.6 423.3 L208.4 427.9 L209.7 432.6 L211.4 437.6 L211.1 442.4 L208.2 446.5 L204.7 450.4 L203.1 454.7 L203.7 459.8 L204.4 464.9 L203.1 469.4" stroke="#44403a" stroke-width="1.4" opacity="0.81"/>
<path d="M210.4 394.9 L209.0 399.6 L210.2 404.3 L212.5 409.2 L213.1 413.9 L211.1 418.5 L208.3 422.9 L207.3 427.5 L208.7 432.3 L210.5 437.3 L210.1 442.0 L207.0 446.1 L203.6 450.0 L202.1 454.4 L202.8 459.5 L203.5 464.6 L202.0 469.0" stroke="#44403a" stroke-width="1.1" opacity="0.87"/>
<path d="M150.8 396.1 L153.1 401.0 L156.2 405.5 L157.9 410.4 L158.0 415.8 L158.0 421.1 L159.5 426.0 L161.7 430.8 L161.8 435.8" stroke="#0b0908" stroke-width="2.1" opacity="0.86"/>
<path d="M152.8 385.8 L152.2 391.2 L152.2 396.6 L154.3 401.4 L157.4 405.9 L159.3 410.8 L159.4 416.1 L159.2 421.5 L160.4 426.4 L162.6 431.1 L163.0 436.2 L160.1 440.4 L155.9 443.7" stroke="#18120d" stroke-width="2.6" opacity="0.84"/>
<path d="M153.9 397.3 L156.1 402.1 L159.6 406.5 L161.5 411.3 L161.2 416.7 L160.6 422.1 L161.9 426.9 L164.4 431.7" stroke="#080706" stroke-width="3.0" opacity="0.81"/>
<path d="M183.9 401.7 L184.8 406.5 L187.5 411.1 L189.8 415.8 L189.9 420.6 L188.1 425.6 L186.2 430.4 L186.2 435.0 L187.8 439.8 L189.0 444.9" stroke="#52402a" stroke-width="1.2" opacity="0.74"/>
<path d="M190.0 411.7 L192.1 416.4 L191.7 421.2 L189.4 426.2 L187.5 430.9 L187.8 435.5 L189.8 440.4 L191.0 445.6 L189.3 450.2 L185.2 453.7 L181.0 457.0 L178.7 461.2" stroke="#32281c" stroke-width="1.1" opacity="0.73"/>
<path d="M185.9 402.2 L186.9 407.0 L189.3 411.6 L191.1 416.3 L191.0 421.1 L189.3 426.0 L187.8 430.8 L188.0 435.4 L189.4 440.2 L190.1 445.3 L188.5 449.9 L185.0 453.6 L181.2 457.1" stroke="#5c4a32" stroke-width="1.1" opacity="0.89"/>
<path d="M187.7 392.1 L185.6 397.1 L185.1 402.0 L187.0 406.8 L189.7 411.4 L191.0 416.1 L190.0 421.0 L187.9 425.9 L186.9 430.7 L188.0 435.3 L189.9 440.2 L190.3 445.3" stroke="#5c4a32" stroke-width="1.6" opacity="0.65"/>
<path d="M180.5 267.4 L180.3 272.8 L180.8 278.3" stroke="#52402a" stroke-width="1.6" opacity="0.73"/>
<path d="M184.4 264.4 L182.3 269.1 L181.6 274.2 L181.6 279.5" stroke="#463624" stroke-width="1.1" opacity="0.90"/>
<path d="M182.1 274.5 L182.4 279.9 L182.0 284.9 L180.2 289.5 L177.2 293.8 L174.1 298.0" stroke="#4e4636" stroke-width="1.1" opacity="0.87"/>
<path d="M183.1 263.2 L180.9 267.9 L180.4 273.1 L180.7 278.5" stroke="#52402a" stroke-width="1.9" opacity="0.80"/>
<path d="M177.0 389.7 L178.5 394.6 L180.7 399.4 L182.2 404.2 L182.4 409.0 L181.5 414.0 L180.5 419.1 L180.5 423.9 L181.9 428.6 L183.8 433.4 L184.8 438.3 L183.8 443.2 L180.8 447.3" stroke="#1e1610" stroke-width="2.3" opacity="0.81"/>
<path d="M174.8 393.5 L176.7 398.4 L178.3 403.1 L178.9 408.0 L178.5 413.0 L177.9 418.0 L177.9 422.9 L179.0 427.7 L180.6 432.4 L181.6 437.3 L180.9 442.2 L178.3 446.5 L174.8 450.1 L171.7 453.9 L169.5 458.4" stroke="#0b0908" stroke-width="3.1" opacity="0.75"/>
<path d="M181.1 404.1 L182.1 408.9 L182.0 413.9 L181.2 418.9 L180.8 423.8 L181.3 428.5 L182.6 433.3 L183.7 438.1 L183.4 443.0 L181.1 447.4 L177.8 451.2 L174.5 454.9 L172.0 459.1" stroke="#0b0908" stroke-width="2.2" opacity="0.98"/>
<path d="M186.4 292.2 L188.1 297.4 L190.0 302.5 L189.1 307.2 L185.7 311.5 L182.7 315.9 L183.0 320.7 L185.7 325.5 L187.4 330.1 L186.2 334.7 L183.4 339.5 L182.5 344.4 L184.8 349.0" stroke="#0b0908" stroke-width="2.3" opacity="0.75"/>
<path d="M186.6 292.2 L187.6 297.2 L189.3 302.3 L188.8 307.0 L186.0 311.4 L183.1 315.8 L182.9 320.6 L185.0 325.4 L186.8 330.0 L186.1 334.6 L183.8 339.4 L182.7 344.2 L184.3 348.9" stroke="#0b0908" stroke-width="3.1" opacity="0.78"/>
<path d="M185.7 291.2 L187.4 296.4 L188.7 301.5 L187.2 306.0 L183.7 310.3 L181.2 314.8 L181.9 319.7 L184.3 324.5 L185.3 329.1 L183.6 333.7 L181.0 338.5 L180.6 343.3 L183.2 348.0 L186.1 352.6 L186.5 357.4 L184.3 362.4" stroke="#0b0908" stroke-width="2.4" opacity="0.75"/>
<path d="M191.8 259.5 L192.7 265.1 L192.5 270.3 L190.0 274.8 L186.1 278.8 L183.0 283.0 L182.2 287.9 L183.5 293.2 L184.6 298.4 L183.7 303.1 L180.6 307.4 L177.2 311.6 L175.7 316.3 L176.7 321.3 L178.8 326.2 L179.7 330.8 L178.4 335.5" stroke="#1e1610" stroke-width="3.4" opacity="1.00"/>
<path d="M192.6 264.7 L191.7 269.7 L188.9 274.0 L185.2 278.1 L182.7 282.6 L182.4 287.6 L183.4 292.9 L183.9 297.9 L182.4 302.5 L179.3 306.8 L176.4 311.1" stroke="#18120d" stroke-width="2.7" opacity="0.74"/>
<path d="M193.9 248.7 L191.8 253.3 L191.5 258.6 L191.8 263.9 L190.9 269.0 L188.2 273.4 L184.8 277.6 L182.3 282.0 L181.8 287.0 L182.5 292.2 L182.8 297.2 L181.4 301.9 L178.5 306.2 L175.8 310.6 L174.7 315.3 L175.5 320.2 L176.8 325.1 L177.0 329.8" stroke="#080706" stroke-width="2.1" opacity="0.79"/>
<path d="M191.1 276.1 L188.8 280.6 L186.0 284.9 L184.7 289.6 L185.1 294.6 L185.4 299.6" stroke="#080706" stroke-width="1.6" opacity="0.72"/>
<path d="M192.3 271.9 L191.5 276.8 L189.3 281.3 L186.8 285.7 L185.7 290.4 L186.1 295.4 L186.1 300.2 L184.5 304.8 L182.3 309.3" stroke="#120e0b" stroke-width="1.8" opacity="0.87"/>
<path d="M186.3 285.2 L185.0 289.9 L185.5 295.0" stroke="#18120d" stroke-width="3.1" opacity="0.80"/>
<path d="M162.1 274.8 L159.9 279.7 L157.1 284.4 L154.0 288.8 L151.1 293.3 L148.6 298.1 L146.6 303.1 L145.1 308.2 L143.7 313.3 L142.1 318.3 L140.3 323.3 L138.4 328.4 L136.9 333.6" stroke="#18120d" stroke-width="2.8" opacity="0.71"/>
<path d="M156.1 290.3 L153.2 294.8 L150.8 299.5 L149.0 304.5 L147.7 309.6 L146.4 314.7 L145.0 319.7 L143.2 324.7 L141.4 329.7 L139.9 334.9 L139.1 340.2 L138.8 345.6 L138.8 351.0 L138.7 356.2" stroke="#0b0908" stroke-width="2.8" opacity="0.74"/>
<path d="M159.4 286.0 L156.5 290.5 L153.5 295.0 L150.9 299.6 L149.0 304.5 L147.6 309.7 L146.5 314.8 L145.2 319.8 L143.6 324.8 L141.9 329.9 L140.3 335.0 L139.2 340.2" stroke="#0b0908" stroke-width="1.6" opacity="0.79"/>
<path d="M221.6 384.2 L222.6 388.8 L222.4 393.4 L221.4 398.0 L220.2 402.5 L219.3 407.1 L219.1 411.7 L219.4 416.4 L219.6 421.1 L219.2 425.8" stroke="#463624" stroke-width="1.1" opacity="0.54"/>
<path d="M222.2 398.3 L221.1 402.8 L220.4 407.4 L220.2 412.0 L220.4 416.7" stroke="#3a2c1e" stroke-width="1.6" opacity="0.83"/>
<path d="M221.2 388.3 L220.9 393.0 L219.8 397.6 L218.7 402.1 L218.2 406.7 L218.2 411.4" stroke="#463624" stroke-width="0.9" opacity="0.52"/>
<path d="M221.6 384.1 L222.2 388.7 L221.8 393.3 L220.8 397.9 L219.8 402.4 L219.3 407.0 L219.3 411.7 L219.5 416.4 L219.4 421.1" stroke="#463624" stroke-width="1.1" opacity="0.72"/>
<path d="M201.5 309.3 L200.7 314.0 L201.6 318.7 L203.4 323.2 L204.6 327.8 L204.2 332.4 L203.4 337.2 L203.7 342.0 L205.7 346.2 L208.5 350.3 L210.5 354.6 L210.8 359.3 L210.4 364.3" stroke="#080706" stroke-width="2.5" opacity="0.95"/>
<path d="M200.7 302.5 L198.9 307.1 L197.9 311.8 L198.7 316.5 L200.5 321.1 L201.5 325.7 L200.9 330.3 L199.7 335.1 L199.8 339.8 L201.7 344.1 L204.5 348.3 L206.2 352.6" stroke="#18120d" stroke-width="3.1" opacity="0.91"/>
<path d="M202.8 303.9 L201.2 308.5 L199.6 313.2 L199.8 317.8 L201.6 322.4 L203.4 327.0 L203.6 331.5 L202.6 336.3 L202.0 341.1 L203.4 345.6 L206.3 349.6 L208.9 353.8 L209.7 358.4" stroke="#18120d" stroke-width="3.3" opacity="0.86"/>
<path d="M183.9 224.9 L182.2 230.2 L180.4 235.2 L177.7 239.9 L174.3 244.3 L171.1 248.9 L169.0 253.9 L167.9 259.4 L166.7 264.9 L164.7 269.9 L161.4 274.3 L157.7 278.5 L154.5 282.9 L152.5 287.9 L151.2 293.3 L149.8 298.6" stroke="#080706" stroke-width="1.9" opacity="0.90"/>
<path d="M179.2 233.7 L176.3 238.4 L172.9 242.8 L169.9 247.5 L167.9 252.6 L166.8 258.1 L165.4 263.6 L163.1 268.5 L159.6 272.9 L155.9 277.0 L152.8 281.6 L150.8 286.7" stroke="#0b0908" stroke-width="2.7" opacity="0.71"/>
<path d="M178.3 240.6 L175.1 245.2 L172.0 249.8 L169.8 254.7 L168.5 260.1 L167.3 265.5 L165.3 270.5 L162.3 275.1 L158.8 279.3 L155.7 283.7 L153.5 288.6 L152.2 293.9 L150.8 299.2 L148.6 304.1 L145.6 308.5 L142.5 313.0" stroke="#080706" stroke-width="1.6" opacity="0.73"/>
<path d="M173.4 258.0 L172.2 263.3 L169.9 268.1 L166.6 272.4 L164.0 277.0 L162.6 282.2 L161.3 287.4 L158.8 292.0 L155.5 296.3 L153.1 301.0 L152.0 306.2 L150.9 311.3 L148.7 316.0 L146.1 320.6 L144.9 325.8 L145.0 331.1 L144.9 336.5" stroke="#080706" stroke-width="1.6" opacity="0.97"/>
<path d="M165.8 271.7 L163.0 276.2 L161.6 281.4 L160.3 286.6 L157.8 291.3 L154.4 295.6 L151.8 300.2 L150.6 305.4 L149.5 310.6 L147.4 315.3 L144.7 319.9 L143.3 325.0 L143.3 330.4" stroke="#1e1610" stroke-width="1.9" opacity="0.87"/>
<path d="M169.7 267.9 L166.5 272.2 L163.5 276.7 L162.0 281.8 L160.8 287.0 L158.5 291.8 L155.2 296.1 L152.5 300.6 L151.2 305.7 L150.2 310.9 L148.3 315.7 L145.7 320.4 L144.1 325.4" stroke="#120e0b" stroke-width="1.8" opacity="0.90"/>
<path d="M178.1 282.6 L175.1 286.9 L173.2 291.4 L172.6 296.5 L172.6 301.7 L172.1 306.7 L170.3 311.2 L167.7 315.6 L165.4 320.0 L164.5 324.8 L165.2 329.9 L166.4 334.9 L166.6 339.9 L165.4 344.8 L163.6 349.8 L162.4 354.8" stroke="#080706" stroke-width="3.3" opacity="0.86"/>
<path d="M172.4 296.7 L172.6 301.9 L172.8 307.1 L171.6 311.8 L169.1 316.1 L166.3 320.5 L164.8 325.2 L165.2 330.2 L166.8 335.3 L167.8 340.3 L167.1 345.2 L165.1 350.2 L163.3 355.1" stroke="#18120d" stroke-width="2.0" opacity="0.85"/>
<path d="M179.7 277.0 L177.1 281.4 L174.0 285.6 L171.5 290.1 L170.4 295.0 L170.3 300.2 L170.0 305.4 L168.6 310.1 L166.0 314.4 L163.4 318.8 L161.9 323.5 L162.2 328.6 L163.3 333.7 L163.9 338.7 L163.0 343.7 L161.2 348.7" stroke="#18120d" stroke-width="1.5" opacity="0.83"/>
<path d="M224.1 184.9 L218.5 186.3 L214.5 190.6 L211.2 195.6 L206.4 198.5 L200.6 200.0 L195.5 202.8 L192.4 207.7 L189.4 212.9 L184.9 216.1 L179.4 218.5 L175.6 222.8 L174.6 228.6" stroke="#52402a" stroke-width="1.0" opacity="0.77"/>
<path d="M224.3 186.5 L218.8 188.0 L215.2 192.7 L211.9 197.7 L207.1 200.4 L201.2 201.8 L196.4 204.7 L193.6 209.9 L190.8 215.1 L186.2 218.1 L180.7 220.5 L177.1 224.9 L176.4 230.8" stroke="#4e4636" stroke-width="1.7" opacity="0.80"/>
<path d="M224.4 186.1 L218.6 186.9 L214.4 190.8 L211.3 196.1 L207.0 199.7 L201.2 201.1 L195.7 203.3 L192.3 208.0 L189.8 213.6 L185.8 217.3 L180.3 219.6 L175.9 223.4 L174.6 229.1" stroke="#4e4636" stroke-width="1.3" opacity="0.54"/>
<path d="M218.7 187.6 L214.8 191.9 L211.7 197.2 L207.3 200.4 L201.3 201.8 L196.1 204.2 L193.0 209.2 L190.5 214.7 L186.3 218.1 L180.7 220.4 L176.6 224.3 L175.7 230.2" stroke="#4e4636" stroke-width="1.8" opacity="0.81"/>
<path d="M178.3 365.5 L178.4 370.4 L180.0 375.3 L181.7 380.2 L182.1 385.1 L181.0 390.1 L179.6 395.2 L179.7 400.1" stroke="#1e1610" stroke-width="1.4" opacity="0.89"/>
<path d="M179.3 360.4 L178.0 365.3 L177.9 370.2 L179.2 375.1 L180.8 380.0 L181.4 384.9 L180.5 389.9 L179.3 395.0 L179.3 400.0" stroke="#120e0b" stroke-width="2.2" opacity="0.83"/>
<path d="M181.3 380.1 L181.8 385.0 L180.8 390.0 L179.5 395.1 L179.6 400.1" stroke="#120e0b" stroke-width="1.8" opacity="0.99"/>
<path d="M206.8 258.0 L205.6 262.5 L203.2 266.7 L201.1 271.1 L200.5 275.9 L200.5 280.8 L199.2 285.4 L196.9 289.8" stroke="#5c4a32" stroke-width="1.3" opacity="0.75"/>
<path d="M209.5 249.0 L207.6 253.3 L206.8 258.1 L205.8 262.7 L203.5 267.0 L201.3 271.3" stroke="#44403a" stroke-width="1.9" opacity="0.64"/>
<path d="M210.2 250.1 L208.3 254.4 L207.4 259.1 L206.4 263.7 L204.3 268.0 L202.2 272.4 L201.4 277.1 L201.3 282.0" stroke="#5c4a32" stroke-width="1.0" opacity="0.87"/>
<path d="M207.5 253.3 L206.7 258.1 L205.9 262.8 L203.8 267.1 L201.4 271.4 L200.5 276.1 L200.5 281.1 L199.6 285.8 L197.5 290.1 L195.9 294.7" stroke="#5c4a32" stroke-width="1.4" opacity="0.64"/>
<path d="M181.5 314.2 L181.9 319.1 L182.7 323.8 L183.1 328.4 L182.7 333.0 L181.7 337.7 L180.7 342.6 L180.4 347.4 L181.1 352.2 L182.5 356.9 L183.9 361.7 L184.7 366.5 L184.5 371.4 L183.6 376.4 L182.5 381.3 L182.2 386.3 L182.8 391.2 L184.2 396.1 L185.6 400.9 L186.5 405.7 L186.4 410.5" stroke="#18120d" stroke-width="3.4" opacity="0.95"/>
<path d="M183.7 320.1 L184.2 324.8 L184.5 329.4 L184.2 334.0 L183.5 338.7 L182.9 343.5 L182.9 348.3 L183.6 353.1 L184.9 357.8 L186.1 362.6 L186.7 367.4 L186.6 372.3 L185.8 377.2 L185.1 382.1 L184.9 387.0 L185.5 391.9 L186.6 396.8 L187.6 401.6" stroke="#080706" stroke-width="2.2" opacity="0.97"/>
<path d="M184.5 324.9 L184.7 329.5 L184.3 334.1 L183.6 338.8 L183.1 343.6 L183.2 348.4 L184.0 353.2 L185.3 357.9 L186.4 362.7 L187.0 367.5 L186.8 372.4 L186.0 377.3 L185.4 382.2 L185.3 387.1 L185.9 392.0 L187.0 396.9 L188.0 401.7 L188.5 406.5" stroke="#0b0908" stroke-width="1.4" opacity="0.91"/>
<path d="M220.3 387.8 L219.9 392.5 L218.4 397.1 L216.7 401.6 L215.8 406.2 L215.9 410.8 L216.7 415.6 L217.4 420.4 L217.3 425.0 L216.1 429.6 L214.2 434.0 L212.3 438.4 L211.0 442.8 L210.6 447.4 L210.7 452.3" stroke="#463624" stroke-width="1.5" opacity="0.70"/>
<path d="M213.0 410.0 L213.9 414.8 L214.9 419.5 L215.0 424.2 L213.9 428.8 L212.0 433.3 L210.1 437.7 L208.7 442.0 L208.4 446.7 L208.5 451.6 L208.4 456.4 L207.3 460.9 L205.1 465.1" stroke="#32281c" stroke-width="1.0" opacity="0.74"/>
<path d="M220.9 387.9 L220.9 392.6 L219.5 397.3 L217.6 401.8 L216.1 406.3 L215.7 410.9 L216.4 415.7 L217.5 420.4 L218.0 425.2 L217.2 429.8 L215.2 434.2 L212.9 438.5 L211.1 442.8 L210.3 447.4 L210.4 452.2 L210.6 457.1 L210.0 461.7 L208.1 466.1 L205.5 470.2" stroke="#32281c" stroke-width="1.5" opacity="0.83"/>
<path d="M216.5 406.3 L216.5 411.0 L217.2 415.8 L217.8 420.5 L217.7 425.2 L216.5 429.7 L214.7 434.2 L212.8 438.5 L211.6 442.9 L211.1 447.6 L211.0 452.4 L210.7 457.1 L209.6 461.6" stroke="#44403a" stroke-width="1.1" opacity="0.60"/>
<path d="M213.9 399.8 L213.6 404.5 L211.8 409.1 L209.4 413.6 L207.7 418.2 L207.6 422.9 L208.8 427.6 L210.5 432.5 L211.1 437.4 L210.0 442.0" stroke="#463624" stroke-width="1.5" opacity="0.86"/>
<path d="M208.5 389.4 L210.4 394.2 L211.3 398.9 L210.6 403.6 L208.6 408.3 L206.3 412.8 L205.1 417.5 L205.5 422.2 L207.1 426.9 L208.7 431.8 L209.0 436.6 L207.5 441.2" stroke="#5c4a32" stroke-width="1.2" opacity="0.84"/>
<path d="M213.1 399.6 L212.6 404.3 L210.7 408.9 L208.5 413.4 L207.2 418.0 L207.3 422.7 L208.6 427.5 L210.1 432.3 L210.4 437.1 L209.1 441.7 L206.4 445.9 L203.4 449.9 L201.3 454.1 L200.6 458.8 L200.8 463.7" stroke="#32281c" stroke-width="0.9" opacity="0.89"/>
<path d="M209.6 394.2 L210.7 399.0 L210.8 403.7 L209.5 408.4 L207.6 413.0 L206.0 417.6 L205.6 422.2 L206.5 426.9 L207.8 431.7 L208.5 436.6 L207.8 441.3 L205.6 445.6 L202.8 449.7" stroke="#44403a" stroke-width="1.8" opacity="0.69"/>
<path d="M223.6 225.7 L221.0 229.8 L220.0 234.7 L218.5 239.1 L215.5 242.8 L212.0 246.4 L210.1 250.7 L209.8 255.7" stroke="#080706" stroke-width="2.1" opacity="0.96"/>
<path d="M219.1 233.9 L218.0 238.6 L215.8 242.7 L212.5 246.3 L209.8 250.2 L208.8 254.9 L208.5 259.9 L207.1 264.3" stroke="#1e1610" stroke-width="2.0" opacity="0.76"/>
<path d="M228.1 222.6 L223.7 225.0 L220.3 228.5 L218.9 233.2 L218.0 238.1 L215.6 242.0 L211.9 245.5 L209.1 249.4 L208.3 254.2" stroke="#120e0b" stroke-width="1.9" opacity="0.73"/>
<path d="M149.5 370.6 L151.4 375.7 L152.8 380.8 L153.3 386.0 L153.1 391.3 L153.1 396.7 L154.1 401.8 L156.1 406.6 L158.8 411.2" stroke="#1e1610" stroke-width="2.6" opacity="0.89"/>
<path d="M152.9 380.6 L153.2 385.8 L152.8 391.2 L152.6 396.6 L153.5 401.8 L155.7 406.6" stroke="#18120d" stroke-width="2.3" opacity="0.88"/>
<path d="M148.1 370.1 L150.2 375.1 L151.5 380.2 L151.7 385.5 L151.3 390.9 L151.3 396.3" stroke="#0b0908" stroke-width="1.6" opacity="0.90"/>
<path d="M231.6 220.1 L228.7 223.5 L224.0 225.6 L220.2 228.7 L219.1 233.7 L218.6 238.7 L215.6 242.4 L211.4 245.6 L209.5 250.0" stroke="#120e0b" stroke-width="1.9" opacity="0.93"/>
<path d="M218.6 233.6 L218.4 238.8 L216.1 242.8 L212.0 246.1 L209.4 250.1 L209.5 255.2" stroke="#18120d" stroke-width="2.8" opacity="0.76"/>
<path d="M224.2 224.3 L219.3 226.6 L217.5 231.2 L217.7 236.8 L215.5 240.9 L210.8 243.8" stroke="#1e1610" stroke-width="3.2" opacity="0.93"/>
<path d="M169.1 294.0 L169.0 299.2 L168.1 304.2 L165.5 308.6 L162.8 312.9 L162.2 317.9 L162.7 323.0 L161.9 327.8 L159.7 332.6 L158.7 337.6 L159.6 342.7 L160.5 347.9" stroke="#1e1610" stroke-width="3.1" opacity="0.77"/>
<path d="M173.0 290.8 L170.9 295.3 L170.5 300.5 L170.1 305.5 L167.9 310.0 L165.3 314.4 L164.4 319.2 L164.9 324.2 L164.6 329.1 L162.8 333.9 L161.6 338.8 L162.2 343.9 L163.2 349.0 L162.6 354.0 L160.8 359.0 L160.4 364.1" stroke="#120e0b" stroke-width="1.5" opacity="0.91"/>
<path d="M172.5 290.6 L170.7 295.2 L170.9 300.5 L170.4 305.6 L167.6 309.9 L164.7 314.2 L164.3 319.1 L165.3 324.3 L164.7 329.1 L162.3 333.8 L161.1 338.8 L162.4 343.9 L163.6 349.0" stroke="#0b0908" stroke-width="2.7" opacity="0.87"/>
<path d="M139.3 292.2 L136.7 297.2 L135.0 302.7 L133.5 308.1 L131.2 313.1 L128.4 317.9 L125.8 323.0 L124.4 328.5" stroke="#0b0908" stroke-width="2.9" opacity="0.73"/>
<path d="M139.7 292.4 L137.0 297.3 L135.2 302.8 L133.6 308.1 L131.5 313.2 L128.8 318.1 L126.3 323.2 L124.8 328.6 L124.3 334.3" stroke="#120e0b" stroke-width="1.5" opacity="0.90"/>
<path d="M139.4 298.8 L137.7 304.1 L136.2 309.5 L134.4 314.6 L132.0 319.5 L129.5 324.6 L127.9 329.9" stroke="#1e1610" stroke-width="2.6" opacity="1.00"/>
<path d="M178.2 283.3 L177.7 288.3 L177.1 293.3 L175.9 298.1 L173.9 302.6 L171.6 307.1 L169.6 311.6" stroke="#4e4636" stroke-width="1.3" opacity="0.75"/>
<path d="M177.8 283.0 L177.6 288.1 L177.2 293.1 L175.9 297.9 L173.7 302.4 L171.0 306.8 L168.8 311.3 L167.6 316.0" stroke="#463624" stroke-width="1.0" opacity="0.70"/>
<path d="M180.8 273.1 L178.5 277.7 L177.1 282.5 L176.5 287.5 L176.1 292.6 L175.2 297.5" stroke="#4e4636" stroke-width="1.5" opacity="0.76"/>
<path d="M177.9 283.1 L177.5 288.2 L177.1 293.2 L176.0 298.1" stroke="#52402a" stroke-width="1.6" opacity="0.55"/>
<path d="M197.2 266.1 L198.4 271.5 L196.7 276.1 L192.8 280.1 L190.9 284.6 L192.3 289.9 L193.0 294.8 L190.5 299.2 L187.6 303.6 L188.1 308.4 L190.2 313.4 L189.5 318.1 L186.5 322.5 L185.5 327.2 L188.0 331.8" stroke="#463624" stroke-width="1.0" opacity="0.85"/>
<path d="M195.6 258.8 L196.1 264.2 L197.2 269.6 L194.6 274.0 L190.3 277.8 L189.1 282.6 L191.0 288.1 L191.0 292.9 L187.5 297.1 L184.9 301.5 L186.1 306.5 L188.0 311.6 L186.3 316.1 L182.7 320.5 L182.4 325.2 L185.4 329.9 L186.5 334.5" stroke="#463624" stroke-width="1.0" opacity="0.77"/>
<path d="M200.5 256.3 L197.1 260.3 L196.6 265.3 L197.4 270.6 L195.9 275.2 L192.3 279.3 L190.4 283.9 L191.3 289.1 L191.8 294.0 L189.6 298.4 L187.0 302.8 L187.2 307.6 L188.8 312.6 L188.2 317.3 L185.5 321.7 L184.5 326.4 L186.5 331.0" stroke="#3a2c1e" stroke-width="1.0" opacity="0.64"/>
<path d="M197.0 265.9 L198.2 271.3 L196.6 275.9 L192.7 279.9 L190.7 284.4 L192.0 289.7 L192.8 294.6 L190.3 299.0 L187.4 303.4 L187.8 308.2 L189.9 313.2 L189.3 317.9 L186.2 322.3 L185.2 327.0" stroke="#3a2c1e" stroke-width="1.3" opacity="0.56"/>
<path d="M133.6 332.4 L133.1 337.8 L134.0 343.5 L133.4 348.9 L130.8 354.0 L129.6 359.4 L131.5 364.8 L134.1 369.8 L134.4 375.3 L133.6 381.1" stroke="#18120d" stroke-width="2.5" opacity="0.99"/>
<path d="M139.5 328.8 L136.7 333.7 L136.5 339.2 L137.7 344.8 L136.9 350.1 L134.3 355.2 L133.2 360.6 L135.2 365.9 L137.8 371.0 L137.9 376.4" stroke="#0b0908" stroke-width="1.6" opacity="0.81"/>
<path d="M134.8 338.5 L136.2 344.2 L135.1 349.5 L132.0 354.5 L131.0 360.0 L133.5 365.3 L136.1 370.3 L135.9 375.8 L134.6 381.7" stroke="#0b0908" stroke-width="1.5" opacity="0.74"/>
<path d="M184.1 391.6 L184.9 396.5 L186.6 401.3 L187.4 406.1 L186.6 411.0 L185.8 415.9 L186.6 420.7 L188.3 425.4 L189.2 430.2 L188.2 435.0 L186.5 439.5 L185.6 444.0 L185.4 448.8" stroke="#18120d" stroke-width="2.1" opacity="0.92"/>
<path d="M188.9 378.0 L189.8 382.8 L189.0 387.7 L187.8 392.7 L187.9 397.5 L189.3 402.4 L190.5 407.1 L190.2 411.9 L189.2 416.8 L189.2 421.6 L190.6 426.3 L191.8 431.1 L191.3 435.9 L189.4 440.4 L187.9 444.7 L187.4 449.4 L186.6 454.3 L184.4 458.6" stroke="#18120d" stroke-width="1.9" opacity="0.95"/>
<path d="M184.4 391.7 L184.8 396.6 L186.7 401.4 L187.8 406.2 L187.2 411.1 L186.1 416.0 L186.5 420.8 L188.4 425.5 L189.6 430.2 L188.7 435.0 L186.8 439.6 L185.6 444.0 L185.4 448.8 L184.5 453.7 L181.9 457.8 L178.3 461.3" stroke="#1e1610" stroke-width="3.3" opacity="0.97"/>
<path d="M206.4 422.0 L207.5 426.8 L207.5 431.5 L205.9 436.1 L203.9 440.4 L203.0 444.9 L203.2 449.8 L202.8 454.6" stroke="#1e1610" stroke-width="2.2" opacity="0.89"/>
<path d="M205.9 407.3 L204.5 411.9 L203.4 416.6 L203.8 421.3 L205.0 426.1 L205.4 430.8 L204.2 435.4 L202.2 439.8 L201.0 444.3 L201.0 449.0 L200.8 453.9 L199.2 458.3" stroke="#0b0908" stroke-width="3.1" opacity="0.95"/>
<path d="M205.4 421.7 L206.2 426.4 L206.1 431.1 L204.8 435.7 L203.2 440.2 L202.4 444.7 L202.2 449.4 L201.6 454.2 L199.7 458.5 L197.1 462.5" stroke="#1e1610" stroke-width="1.5" opacity="0.97"/>
<path d="M178.9 317.1 L179.1 321.8 L179.0 326.5 L178.1 331.1 L177.1 335.8 L176.5 340.6 L176.8 345.5 L177.9 350.3 L178.9 355.1 L179.4 360.0 L178.9 364.9" stroke="#080706" stroke-width="1.6" opacity="0.76"/>
<path d="M174.5 319.2 L174.3 323.9 L173.4 328.5 L172.0 333.2 L171.0 338.0 L170.9 343.0 L171.7 347.9 L172.8 352.8 L173.4 357.8 L172.9 362.7 L171.9 367.7" stroke="#1e1610" stroke-width="2.6" opacity="0.99"/>
<path d="M175.8 310.3 L175.7 315.1 L175.9 320.0 L175.8 324.7 L174.9 329.3 L173.6 334.0 L172.7 338.8 L172.7 343.7 L173.6 348.6 L174.7 353.5" stroke="#080706" stroke-width="2.1" opacity="0.83"/>
<path d="M211.4 419.2 L211.0 423.9 L212.5 428.7 L214.1 433.6 L213.7 438.3 L211.0 442.6 L207.7 446.5 L205.8 450.8 L205.9 455.7 L206.8 460.8 L206.5 465.5 L204.1 469.7" stroke="#463624" stroke-width="0.9" opacity="0.58"/>
<path d="M214.0 429.2 L215.7 434.1 L215.5 438.9 L212.9 443.2 L209.4 447.1 L207.2 451.3 L207.1 456.1 L208.2 461.2" stroke="#84683c" stroke-width="0.8" opacity="0.69"/>
<path d="M212.8 428.7 L214.0 433.6 L213.4 438.3 L210.8 442.5 L207.8 446.6 L206.2 450.9 L206.3 455.8" stroke="#44403a" stroke-width="1.0" opacity="0.52"/>
<path d="M216.7 430.0 L217.8 434.9 L217.1 439.5 L214.5 443.7 L211.4 447.7 L209.6 452.0 L209.6 456.9 L210.3 461.9 L210.0 466.6" stroke="#64502e" stroke-width="1.2" opacity="0.59"/>
<path d="M216.0 434.2 L215.4 438.9 L212.5 443.1 L209.2 447.0 L207.4 451.3 L207.7 456.2 L208.7 461.4 L208.3 466.1 L205.8 470.2" stroke="#44403a" stroke-width="1.0" opacity="0.53"/>
<path d="M234.5 219.7 L230.0 221.8 L228.0 226.3 L227.2 231.5 L224.8 235.3 L220.5 238.2 L216.9 241.6 L216.1 246.4 L216.7 251.6" stroke="#32281c" stroke-width="1.2" opacity="0.59"/>
<path d="M234.6 219.7 L229.5 221.0 L227.3 225.5 L227.2 231.2 L225.5 235.5 L220.9 238.1 L216.3 241.0 L215.0 245.7 L216.4 251.2 L216.3 256.1" stroke="#32281c" stroke-width="0.9" opacity="0.86"/>
<path d="M228.0 226.2 L227.6 231.7 L225.1 235.5 L220.3 238.0 L216.3 241.3 L215.9 246.3" stroke="#52402a" stroke-width="1.2" opacity="0.80"/>
<path d="M239.4 217.5 L233.9 217.5 L229.4 219.6 L227.7 224.5 L227.0 229.8 L224.2 233.4 L219.4 235.9 L215.7 239.3 L215.2 244.3" stroke="#44403a" stroke-width="1.2" opacity="0.71"/>
<path d="M214.2 373.0 L213.5 377.9 L213.8 382.4 L215.4 386.9 L216.9 391.5 L216.9 396.2 L215.1 400.8 L213.3 405.4 L213.0 410.0 L214.1 414.8 L215.1 419.5 L214.4 424.2 L212.3 428.6 L210.6 433.1" stroke="#9a7e4c" stroke-width="1.0" opacity="0.42"/>
<path d="M217.2 374.2 L216.6 379.0 L217.0 383.5 L218.7 387.9 L220.3 392.6 L220.1 397.3 L218.2 401.8 L216.3 406.3 L216.0 410.9" stroke="#463624" stroke-width="1.3" opacity="0.40"/>
<path d="M213.7 386.4 L215.0 391.0 L215.1 395.7 L213.8 400.3 L212.2 404.9 L211.7 409.6 L212.5 414.3" stroke="#4e4636" stroke-width="1.4" opacity="0.63"/>
<path d="M218.4 387.8 L219.9 392.5 L219.7 397.2 L218.0 401.7 L216.2 406.2 L215.8 410.9 L216.8 415.6 L217.6 420.4 L216.8 425.0 L214.8 429.4" stroke="#3a2c1e" stroke-width="1.1" opacity="0.38"/>
<path d="M215.0 395.7 L213.7 400.3 L212.2 404.9 L211.7 409.6 L212.4 414.3 L213.2 419.1 L212.9 423.7" stroke="#463624" stroke-width="1.1" opacity="0.66"/>
<path d="M224.2 227.3 L222.3 231.8 L220.8 236.3 L219.0 240.5 L216.7 244.5 L213.8 248.4 L211.1 252.3 L209.1 256.6 L208.1 261.2 L207.7 266.0 L207.3 270.8 L206.3 275.3 L204.4 279.7 L202.2 284.1 L200.4 288.5 L199.5 293.2 L199.7 297.9 L200.6 302.7" stroke="#1e1610" stroke-width="2.3" opacity="0.80"/>
<path d="M220.2 235.3 L218.3 239.5 L216.1 243.6 L213.5 247.5 L210.9 251.5 L208.9 255.8 L207.5 260.3 L206.8 265.0 L206.3 269.8 L205.3 274.4 L203.6 278.8 L201.7 283.2 L199.9 287.7 L198.9 292.3 L198.9 297.1 L199.4 301.8" stroke="#120e0b" stroke-width="3.4" opacity="0.84"/>
<path d="M221.9 230.1 L220.1 234.5 L218.1 238.7 L215.5 242.6 L212.7 246.4 L210.0 250.4 L208.1 254.7 L207.0 259.3 L206.4 264.1 L205.8 268.8 L204.5 273.4 L202.6 277.8 L200.4 282.1 L198.7 286.6 L198.0 291.3 L198.1 296.1 L198.7 300.9" stroke="#080706" stroke-width="2.1" opacity="1.00"/>
<path d="M132.6 307.7 L131.3 313.1 L129.7 318.4 L127.7 323.6 L125.3 328.7 L123.4 334.0 L122.4 339.6 L122.1 345.2 L122.1 350.7 L122.1 356.0 L121.9 361.5 L122.0 367.1" stroke="#1e1610" stroke-width="2.7" opacity="0.89"/>
<path d="M125.8 329.0 L124.0 334.3 L123.1 339.8 L123.0 345.5 L123.0 351.0 L122.8 356.3 L122.5 361.7 L122.5 367.3 L123.3 372.9 L125.0 378.2 L127.5 383.3 L130.1 388.2" stroke="#0b0908" stroke-width="2.9" opacity="0.79"/>
<path d="M133.0 313.9 L131.2 319.1 L128.9 324.2 L126.6 329.3 L125.0 334.7 L124.4 340.2 L124.3 345.9 L124.1 351.3 L123.8 356.6 L123.3 362.1 L123.4 367.7 L124.3 373.2 L126.3 378.5" stroke="#1e1610" stroke-width="2.8" opacity="0.80"/>
<path d="M210.3 366.4 L209.7 371.3 L208.6 376.3 L208.5 380.9 L210.1 385.3 L212.2 390.0 L212.9 394.8 L211.6 399.4 L209.3 404.0 L207.8 408.6 L208.3 413.4 L210.1 418.2" stroke="#120e0b" stroke-width="3.1" opacity="0.70"/>
<path d="M204.6 354.3 L207.4 358.4 L210.3 362.5 L211.6 367.0 L211.1 371.9 L210.1 376.9 L210.3 381.4 L211.9 385.9 L213.8 390.5 L214.4 395.3 L213.0 399.9 L210.7 404.5 L209.4 409.1 L210.0 413.8 L211.6 418.6" stroke="#0b0908" stroke-width="2.8" opacity="0.74"/>
<path d="M211.0 366.8 L210.5 371.7 L209.6 376.6 L209.7 381.2 L211.3 385.7 L213.2 390.3 L213.7 395.1 L212.4 399.7 L210.2 404.3 L208.9 408.9 L209.5 413.7" stroke="#120e0b" stroke-width="1.6" opacity="0.88"/>
<path d="M183.9 314.1 L183.5 318.7 L180.5 323.0 L177.6 327.5 L177.6 332.3 L180.3 337.0 L182.9 341.7 L182.6 346.5 L180.0 351.5 L178.1 356.4" stroke="#1e1610" stroke-width="1.8" opacity="0.80"/>
<path d="M180.9 308.0 L182.2 313.1 L181.5 317.7 L178.9 322.1 L176.4 326.6 L176.4 331.4 L178.6 336.1 L180.5 340.9 L180.2 345.7 L178.0 350.6 L176.6 355.6 L177.6 360.4" stroke="#0b0908" stroke-width="2.2" opacity="0.77"/>
<path d="M180.8 307.7 L181.8 312.8 L180.8 317.4 L178.1 321.8 L175.8 326.3 L176.1 331.1 L178.2 335.9 L179.9 340.6 L179.3 345.4 L177.2 350.4 L176.0 355.3 L177.2 360.1" stroke="#0b0908" stroke-width="2.6" opacity="0.99"/>
<path d="M187.1 414.9 L186.1 419.9 L184.2 424.9 L184.0 429.6 L185.8 434.3 L187.7 439.3 L186.8 444.2 L183.3 448.1 L179.5 451.5 L177.5 455.9 L177.2 461.2" stroke="#44403a" stroke-width="0.8" opacity="0.63"/>
<path d="M188.0 415.2 L188.0 420.1 L186.0 425.1 L184.6 429.9 L185.6 434.6 L187.6 439.5 L187.9 444.5 L185.1 448.7 L180.8 452.1 L177.9 455.9" stroke="#4e4636" stroke-width="0.9" opacity="0.64"/>
<path d="M182.2 409.5 L184.9 414.1 L184.9 419.0 L182.7 424.1 L181.2 429.0 L182.4 433.6 L184.9 438.5 L185.4 443.7 L182.4 447.9 L177.8 451.0 L174.6 454.7" stroke="#5c4a32" stroke-width="1.9" opacity="0.66"/>
<path d="M186.3 419.6 L184.4 424.6 L183.2 429.4 L184.2 434.1 L186.3 439.0 L186.5 444.0 L183.6 448.3 L179.4 451.6" stroke="#32281c" stroke-width="1.7" opacity="0.75"/>
<path d="M217.2 229.4 L215.7 234.0 L213.6 238.3 L210.5 242.0 L207.5 245.8 L205.8 250.2 L204.9 255.1 L203.5 259.6 L201.0 263.8 L198.8 268.2 L197.9 273.0" stroke="#5c4a32" stroke-width="1.8" opacity="0.77"/>
<path d="M223.4 221.1 L219.2 223.9 L216.3 227.7 L214.8 232.5 L213.2 237.0 L210.1 240.7 L206.6 244.3 L204.4 248.5 L203.6 253.4 L202.7 258.2 L200.3 262.4 L197.6 266.7 L196.2 271.4 L196.2 276.4" stroke="#4e4636" stroke-width="1.7" opacity="0.78"/>
<path d="M214.5 231.9 L212.7 236.3 L209.8 240.1 L206.4 243.7 L204.1 247.9 L203.1 252.8 L202.1 257.5 L199.8 261.8 L197.3 266.1 L195.8 270.8" stroke="#52402a" stroke-width="1.4" opacity="0.64"/>
<path d="M227.0 218.0 L223.0 220.8 L219.2 223.9 L216.7 228.0 L215.2 232.7 L213.0 236.9 L209.7 240.5 L206.6 244.3 L204.8 248.8 L204.0 253.6 L202.5 258.1 L199.9 262.3 L197.5 266.7 L196.7 271.5 L196.6 276.6 L195.6 281.3" stroke="#52402a" stroke-width="1.6" opacity="0.56"/>
<path d="M209.8 413.9 L208.8 418.5 L209.6 423.2 L211.3 428.0 L212.0 432.8 L210.9 437.4 L208.1 441.7 L205.4 445.8 L204.2 450.2 L204.4 455.1 L204.9 460.1 L204.2 464.8 L201.7 468.9" stroke="#18120d" stroke-width="2.1" opacity="0.98"/>
<path d="M211.2 432.5 L209.2 437.0 L206.2 441.2 L204.0 445.4 L203.6 450.0 L204.4 455.1" stroke="#0b0908" stroke-width="2.8" opacity="0.81"/>
<path d="M214.3 433.5 L213.0 438.1 L209.8 442.2 L206.6 446.2 L205.2 450.6 L205.7 455.6 L206.8 460.7 L206.4 465.5 L203.8 469.6" stroke="#1e1610" stroke-width="2.0" opacity="0.84"/>
<path d="M185.6 397.1 L186.3 402.0 L189.1 406.7 L190.2 411.4 L188.4 416.4 L187.0 421.3 L188.6 425.9 L191.2 430.7 L190.9 435.5 L188.0 440.0 L186.1 444.2" stroke="#080706" stroke-width="3.2" opacity="0.81"/>
<path d="M181.9 376.5 L184.2 381.4 L186.1 386.2 L185.0 391.2 L182.8 396.2 L183.3 401.1 L186.1 405.8 L187.5 410.5 L186.1 415.5 L184.6 420.5 L185.9 425.2 L188.6 429.9 L188.8 434.7 L186.0 439.3" stroke="#1e1610" stroke-width="2.1" opacity="0.77"/>
<path d="M186.0 397.4 L186.9 402.2 L190.2 406.9 L191.2 411.6 L188.9 416.6 L187.3 421.5 L189.3 426.1 L192.2 430.9 L191.6 435.7 L188.2 440.1 L186.4 444.3 L187.2 449.4 L187.3 454.7" stroke="#080706" stroke-width="2.4" opacity="0.94"/>
<path d="M217.1 257.9 L214.6 261.9 L210.2 265.4 L208.2 269.7 L209.6 274.9 L210.9 279.9 L208.8 284.2 L204.8 288.1 L203.2 292.6 L205.0 297.6 L206.9 302.2 L205.7 306.7 L202.8 311.5" stroke="#120e0b" stroke-width="2.8" opacity="0.75"/>
<path d="M208.4 273.4 L209.5 278.4 L207.5 282.7 L203.6 286.6 L202.0 291.1 L203.6 296.1" stroke="#18120d" stroke-width="2.9" opacity="0.71"/>
<path d="M210.3 279.7 L208.6 284.0 L205.1 288.0 L203.3 292.4 L204.6 297.4 L206.4 302.1 L205.5 306.6" stroke="#0b0908" stroke-width="3.2" opacity="0.75"/>
<path d="M207.2 353.4 L208.4 357.9 L208.2 362.8 L207.9 367.6 L209.1 372.1 L211.4 376.4 L213.2 380.9 L213.1 385.7 L211.6 390.3 L210.4 395.0 L210.7 399.7 L212.0 404.5 L212.5 409.2 L211.4 413.8 L209.5 418.4 L208.6 423.0 L209.3 427.7" stroke="#1e1610" stroke-width="3.4" opacity="0.96"/>
<path d="M206.5 357.1 L205.6 362.1 L205.4 366.9 L207.1 371.3 L209.9 375.6 L211.5 380.1 L210.7 384.9 L208.8 389.6 L207.9 394.3 L208.9 399.0 L210.6 403.8 L210.8 408.6 L209.0 413.2 L207.0 417.8" stroke="#080706" stroke-width="2.5" opacity="0.88"/>
<path d="M210.5 363.8 L210.4 368.6 L211.8 373.1 L214.3 377.3 L216.1 381.8 L215.8 386.6 L214.2 391.2 L213.0 395.8 L213.6 400.5 L214.9 405.3 L215.2 410.0 L213.8 414.6 L211.8 419.1" stroke="#0b0908" stroke-width="2.4" opacity="0.74"/>
<path d="M201.9 377.7 L201.3 382.5 L201.1 387.2 L201.6 391.9 L202.4 396.7 L202.9 401.5 L202.5 406.3 L201.6 411.0 L200.8 415.7 L200.6 420.4" stroke="#18120d" stroke-width="3.3" opacity="0.95"/>
<path d="M200.3 386.9 L200.3 391.7 L201.1 396.5 L201.9 401.3 L202.1 406.0 L201.5 410.8 L200.5 415.5 L199.8 420.2 L200.0 424.9" stroke="#0b0908" stroke-width="1.8" opacity="0.78"/>
<path d="M207.1 379.2 L206.4 384.0 L205.7 388.6 L205.6 393.4 L206.3 398.1 L207.1 402.9 L207.2 407.6 L206.4 412.3 L205.3 417.0 L204.4 421.6 L204.4 426.3 L205.0 431.0" stroke="#080706" stroke-width="1.9" opacity="0.99"/>
<path d="M169.8 287.7 L166.3 291.8 L164.1 296.4 L163.5 301.6 L163.3 306.9 L161.7 311.6 L158.7 315.9 L156.2 320.4" stroke="#18120d" stroke-width="2.0" opacity="0.82"/>
<path d="M173.5 272.7 L173.1 278.0 L172.4 283.2 L170.2 287.8 L166.8 292.0 L164.2 296.5 L163.2 301.5 L163.1 306.8 L161.9 311.7" stroke="#120e0b" stroke-width="2.7" opacity="0.97"/>
<path d="M171.3 276.3 L170.3 281.5 L167.9 286.1 L164.5 290.3 L161.9 294.8 L160.8 299.9 L160.4 305.2 L159.0 310.0 L156.2 314.4 L153.5 318.9" stroke="#120e0b" stroke-width="2.7" opacity="0.95"/>
<path d="M171.6 386.9 L172.0 392.0 L171.8 397.0 L171.8 402.1 L172.3 407.0 L173.6 411.8 L175.3 416.6 L176.7 421.4 L177.2 426.3 L176.9 431.3 L176.1 436.0 L175.1 440.4 L173.9 444.9 L172.3 449.5" stroke="#18120d" stroke-width="2.6" opacity="0.84"/>
<path d="M171.1 382.2 L172.2 387.1 L172.7 392.1 L172.6 397.2 L172.4 402.2 L172.8 407.2 L174.0 412.0 L175.7 416.7 L177.1 421.5 L177.8 426.4 L177.5 431.4 L176.6 436.1 L175.4 440.6 L174.2 445.0 L172.6 449.6 L170.7 454.2" stroke="#1e1610" stroke-width="2.7" opacity="0.77"/>
<path d="M169.7 381.6 L170.6 386.6 L170.9 391.7 L170.8 396.8 L170.9 401.8 L171.5 406.7 L172.9 411.5 L174.5 416.3 L175.8 421.1 L176.3 426.1 L176.0 431.0 L175.4 435.8 L174.5 440.2 L173.3 444.7 L171.6 449.3 L169.4 453.8" stroke="#080706" stroke-width="3.1" opacity="0.90"/>
<path d="M164.9 256.5 L163.7 262.1 L162.0 267.4 L159.2 272.2 L155.5 276.4 L151.6 280.5 L148.2 284.9 L145.8 289.9" stroke="#52402a" stroke-width="1.4" opacity="0.71"/>
<path d="M166.5 244.0 L164.2 249.0 L163.0 254.5 L161.9 260.2 L160.1 265.7 L157.1 270.4 L153.2 274.5 L148.9 278.5" stroke="#5c4a32" stroke-width="1.2" opacity="0.57"/>
<path d="M170.5 240.2 L167.5 244.9 L165.4 250.0 L164.0 255.5 L162.7 261.0 L160.7 266.3 L157.6 270.9 L153.8 275.1 L149.9 279.3 L146.7 283.8 L144.4 288.9 L142.8 294.3" stroke="#4e4636" stroke-width="1.8" opacity="0.86"/>
<path d="M163.8 255.1 L162.5 260.7 L160.3 265.9 L157.0 270.4" stroke="#463624" stroke-width="1.3" opacity="0.78"/>
<path d="M199.5 296.0 L199.2 300.6 L197.2 305.1 L195.3 309.8 L195.5 314.4 L197.4 319.2 L198.7 323.8 L198.0 328.4 L196.4 333.1 L196.1 337.9 L198.1 342.2 L201.0 346.4" stroke="#0b0908" stroke-width="2.4" opacity="0.83"/>
<path d="M199.5 300.9 L197.6 305.5 L195.9 310.1 L196.1 314.8 L197.9 319.5 L199.1 324.1 L198.5 328.7 L197.0 333.5 L196.8 338.2 L198.9 342.5 L201.6 346.7" stroke="#080706" stroke-width="2.6" opacity="0.90"/>
<path d="M199.5 300.7 L197.9 305.2 L195.8 309.8 L195.3 314.5 L196.9 319.2 L198.6 323.9 L198.5 328.4 L197.0 333.1 L196.3 337.9" stroke="#18120d" stroke-width="1.8" opacity="0.72"/>
<path d="M218.5 240.7 L217.5 245.4 L214.9 249.3 L211.6 253.0 L209.5 257.2 L209.2 262.1 L209.2 267.0" stroke="#64502e" stroke-width="0.8" opacity="0.88"/>
<path d="M218.4 234.0 L217.2 238.6 L216.3 243.4 L214.2 247.6" stroke="#32281c" stroke-width="1.1" opacity="0.64"/>
<path d="M221.0 229.7 L218.2 233.5 L217.1 238.3 L216.3 243.1 L214.1 247.2 L210.7 250.8 L208.0 254.8 L207.1 259.5" stroke="#4e4636" stroke-width="0.9" opacity="0.77"/>
<path d="M217.4 245.3 L215.5 249.6 L212.2 253.3 L209.4 257.2" stroke="#64502e" stroke-width="1.1" opacity="0.87"/>
<path d="M214.6 248.1 L211.4 251.8 L208.6 255.8 L207.6 260.4 L207.6 265.4" stroke="#64502e" stroke-width="0.7" opacity="0.53"/>
<path d="M191.7 316.5 L191.7 321.2 L194.1 325.9 L194.9 330.4 L193.0 335.1 L192.2 339.9 L194.6 344.3 L197.4 348.5 L197.2 353.3 L195.5 358.4 L196.4 363.0 L199.4 367.4" stroke="#9a7e4c" stroke-width="1.2" opacity="0.62"/>
<path d="M191.9 321.6 L194.9 326.2 L195.9 330.7 L193.5 335.5 L192.4 340.3 L195.2 344.6 L198.5 348.8" stroke="#8c7242" stroke-width="1.0" opacity="0.43"/>
<path d="M194.4 325.5 L194.1 330.1 L191.4 334.9 L191.3 339.5 L194.7 343.8 L197.1 348.1 L195.7 353.1 L194.0 358.2" stroke="#4e4636" stroke-width="1.4" opacity="0.55"/>
<path d="M194.5 312.1 L191.7 316.7 L191.9 321.4 L194.5 326.1 L195.2 330.5 L193.2 335.3 L192.4 340.1 L194.9 344.4 L197.8 348.7 L197.5 353.5 L195.7 358.5" stroke="#ac9464" stroke-width="0.8" opacity="0.45"/>
<path d="M188.8 314.6 L189.1 319.3 L191.5 324.1 L191.8 328.6 L189.4 333.3 L188.6 338.1 L191.3 342.5 L193.8 346.9 L193.1 351.7 L191.3 356.7" stroke="#3a2c1e" stroke-width="0.8" opacity="0.46"/>
<path d="M196.0 275.8 L195.6 280.7 L193.4 285.1 L190.5 289.4 L189.1 294.1 L189.8 299.0 L190.9 303.9" stroke="#44403a" stroke-width="1.5" opacity="0.70"/>
<path d="M193.2 285.1 L190.5 289.5 L189.3 294.1" stroke="#3a2c1e" stroke-width="0.8" opacity="0.79"/>
<path d="M197.7 259.6 L194.7 263.8 L193.7 268.6 L194.2 273.9 L194.1 279.0 L191.9 283.4 L188.7 287.6" stroke="#32281c" stroke-width="1.7" opacity="0.62"/>
<path d="M193.4 284.6 L190.4 288.8 L188.2 293.3" stroke="#463624" stroke-width="1.3" opacity="0.52"/>
<path d="M182.5 330.1 L182.6 334.8 L185.9 339.3 L187.7 343.9 L185.8 348.8" stroke="#32281c" stroke-width="1.2" opacity="0.43"/>
<path d="M182.3 310.1 L184.4 315.2 L185.8 320.1 L183.7 324.5 L180.6 329.1 L180.9 333.8 L184.2 338.4 L185.7 343.0 L183.5 347.9 L181.4 352.9" stroke="#5c4a32" stroke-width="0.7" opacity="0.39"/>
<path d="M186.1 320.4 L185.4 324.9 L182.0 329.4 L180.8 334.1 L183.7 338.7" stroke="#44403a" stroke-width="1.3" opacity="0.50"/>
<path d="M185.8 316.3 L187.1 321.1 L185.3 325.5 L182.8 330.1 L183.2 334.8 L186.0 339.4 L187.4 344.0 L185.7 348.9 L184.1 353.8" stroke="#4e4636" stroke-width="1.0" opacity="0.46"/>
<path d="M185.0 325.1 L182.1 329.7 L181.9 334.4 L184.8 338.9" stroke="#463624" stroke-width="0.6" opacity="0.49"/>
<path d="M234.2 213.6 L230.9 216.8 L227.3 219.6 L223.3 222.4 L219.7 225.7" stroke="#44403a" stroke-width="0.8" opacity="0.66"/>
<path d="M237.8 210.9 L234.3 214.2 L231.1 217.5 L227.6 220.4 L223.6 223.2 L219.9 226.4 L217.2 230.3" stroke="#3a2c1e" stroke-width="1.2" opacity="0.62"/>
<path d="M246.5 205.5 L241.8 206.6 L237.5 208.9 L233.9 212.2 L230.7 215.6 L227.2 218.6 L223.2 221.4 L219.3 224.4 L216.3 228.2" stroke="#4e4636" stroke-width="1.5" opacity="0.62"/>
<path d="M234.0 213.3 L230.8 216.7 L227.5 219.8 L223.7 222.7 L219.8 225.7 L216.8 229.5 L215.0 234.0" stroke="#463624" stroke-width="1.2" opacity="0.73"/>
<path d="M199.6 231.0 L197.2 235.5 L194.3 239.5 L191.1 243.6 L188.7 248.1 L187.4 253.1" stroke="#32281c" stroke-width="1.7" opacity="0.60"/>
<path d="M199.4 230.9 L197.1 235.5 L194.4 239.6 L191.3 243.6 L188.7 248.1 L187.3 253.1 L186.4 258.2 L184.9 263.2" stroke="#3a2c1e" stroke-width="0.9" opacity="0.80"/>
<path d="M199.8 231.7 L197.7 236.3 L195.1 240.5 L191.9 244.5 L189.2 248.9 L187.8 253.9 L187.1 259.0 L185.6 264.0" stroke="#32281c" stroke-width="1.0" opacity="0.76"/>
<path d="M191.0 243.4 L188.6 247.9 L187.2 252.9" stroke="#463624" stroke-width="0.9" opacity="0.77"/>
<path d="M210.6 389.2 L208.8 393.9 L206.3 398.5 L205.7 403.2 L207.6 408.0 L209.4 412.8 L208.9 417.5 L206.4 422.1 L204.4 426.6 L205.0 431.3 L207.0 436.2 L207.4 441.1 L205.1 445.4 L201.6 449.3 L199.6 453.5" stroke="#52402a" stroke-width="0.9" opacity="0.71"/>
<path d="M204.9 393.0 L202.7 397.7 L203.4 402.4 L206.1 407.3 L207.4 412.0 L205.8 416.7 L202.8 421.3 L201.8 425.9 L203.6 430.7 L205.8 435.6 L205.3 440.4 L202.0 444.5 L198.7 448.4 L197.8 452.9 L198.9 458.2" stroke="#463624" stroke-width="1.5" opacity="0.61"/>
<path d="M203.9 392.6 L201.8 397.3 L202.3 402.1 L204.6 406.9 L205.9 411.6 L204.6 416.3 L202.1 421.0 L201.0 425.6 L202.5 430.3 L204.5 435.2 L204.2 440.0 L201.3 444.2 L198.1 448.2 L197.1 452.7" stroke="#3a2c1e" stroke-width="1.9" opacity="0.51"/>
<path d="M202.7 397.6 L202.7 402.4 L205.1 407.2 L207.1 412.0 L206.2 416.6 L203.3 421.2 L201.5 425.9 L202.7 430.6 L205.1 435.5 L205.4 440.3 L202.6 444.6 L198.9 448.5 L197.2 452.7" stroke="#4e4636" stroke-width="1.8" opacity="0.57"/>
<path d="M204.3 370.5 L206.9 374.8 L208.9 379.3 L208.1 384.2 L206.1 388.9 L206.0 393.6 L207.7 398.4 L208.6 403.1 L207.1 407.8 L205.0 412.4 L205.1 417.1 L207.0 421.9" stroke="#8c7242" stroke-width="1.2" opacity="0.62"/>
<path d="M205.7 378.3 L204.4 383.1 L202.7 387.9 L203.2 392.6 L205.1 397.4 L205.5 402.2 L203.6 406.9 L202.0 411.6 L202.7 416.3" stroke="#44403a" stroke-width="0.8" opacity="0.41"/>
<path d="M201.6 359.8 L200.5 364.7 L201.5 369.3 L204.4 373.7 L205.8 378.3 L204.5 383.2 L202.6 387.9 L203.1 392.6 L205.2 397.4 L205.7 402.2 L203.7 406.9 L201.9 411.6 L202.7 416.3 L204.8 421.0" stroke="#4e4636" stroke-width="0.7" opacity="0.49"/>
<path d="M201.9 359.4 L200.2 364.5 L200.3 369.2 L203.1 373.6 L205.5 378.1 L204.7 382.9 L202.3 387.7 L201.9 392.4 L204.0 397.2 L205.5 402.0 L203.9 406.7 L201.5 411.4 L201.4 416.1 L203.8 420.9" stroke="#84683c" stroke-width="1.1" opacity="0.67"/>
<path d="M207.7 375.1 L210.0 379.6 L209.1 384.4 L206.7 389.1 L206.4 393.8 L208.5 398.6 L209.7 403.4 L208.0 408.0 L205.5 412.6 L205.5 417.3" stroke="#52402a" stroke-width="1.2" opacity="0.67"/>
<path d="M199.8 307.4 L198.3 312.0 L197.8 316.7 L198.8 321.4 L200.6 326.0" stroke="#463624" stroke-width="1.4" opacity="0.82"/>
<path d="M199.2 306.9 L197.6 311.5 L197.2 316.2 L198.2 320.9" stroke="#3a2c1e" stroke-width="1.8" opacity="0.80"/>
<path d="M197.0 311.0 L196.7 315.7 L197.6 320.4 L199.3 325.0 L200.7 329.5 L201.2 334.0" stroke="#4e4636" stroke-width="1.7" opacity="0.71"/>
<path d="M200.1 292.0 L200.4 296.7 L199.8 301.3 L198.4 305.8 L196.8 310.5 L196.1 315.1 L196.5 319.8 L197.9 324.5 L199.4 329.0 L200.2 333.4" stroke="#4e4636" stroke-width="1.8" opacity="0.60"/>
<path d="M237.2 200.6 L231.9 200.6 L226.8 201.8 L223.1 205.5 L220.7 210.3 L217.5 214.3 L213.0 216.8 L208.2 219.3 L205.1 223.3 L203.6 228.4 L201.7 233.2" stroke="#8c7242" stroke-width="1.1" opacity="0.63"/>
<path d="M231.9 201.5 L227.0 203.1 L223.7 207.2 L221.4 212.0 L217.9 215.6 L213.2 218.0 L208.7 220.7 L206.1 225.1" stroke="#4e4636" stroke-width="1.1" opacity="0.60"/>
<path d="M242.1 201.0 L237.5 202.7 L232.3 203.1 L227.3 204.4 L223.7 207.9 L221.2 212.6 L218.3 216.6 L214.0 219.4 L209.6 222.2" stroke="#8c7242" stroke-width="0.9" opacity="0.66"/>
<path d="M246.5 197.2 L242.1 200.0 L237.2 201.1 L231.9 201.3 L227.1 202.9 L223.6 206.8 L221.0 211.4 L217.6 215.0 L213.1 217.6 L208.7 220.4 L206.0 224.7 L204.4 229.7" stroke="#745a34" stroke-width="0.7" opacity="0.58"/>
<path d="M237.4 201.7 L232.0 201.7 L226.9 202.9 L223.4 206.7 L221.1 211.6 L218.0 215.6 L213.4 218.1 L208.7 220.6 L205.8 224.7 L204.4 229.9 L202.6 234.7 L198.9 238.1" stroke="#7c6238" stroke-width="0.9" opacity="0.73"/>
<path d="M203.5 253.4 L200.1 257.3 L198.9 262.0 L199.3 267.2 L198.8 272.1 L196.2 276.5 L193.2 280.7 L192.3 285.5 L193.1 290.6 L193.2 295.3" stroke="#32281c" stroke-width="1.2" opacity="0.62"/>
<path d="M202.8 252.5 L199.8 256.5 L198.6 261.3 L198.7 266.4 L197.8 271.3 L195.3 275.6 L192.7 280.0 L191.8 284.8 L192.3 289.8 L192.1 294.6" stroke="#32281c" stroke-width="0.8" opacity="0.71"/>
<path d="M203.3 253.1 L200.0 257.0 L198.7 261.7 L199.0 266.9 L198.5 271.8 L195.9 276.2 L193.0 280.4" stroke="#52402a" stroke-width="2.0" opacity="0.77"/>
<path d="M208.2 239.0 L207.4 244.0 L206.1 248.7 L203.1 252.5 L199.7 256.4 L198.0 261.0 L198.2 266.2 L197.9 271.2 L195.6 275.6 L192.6 279.8 L191.3 284.5 L191.8 289.6" stroke="#52402a" stroke-width="0.9" opacity="0.77"/>
<path d="M210.0 354.7 L212.6 358.8 L212.5 363.7 L211.1 368.9 L211.1 373.6 L213.6 377.8 L216.9 382.0 L218.0 386.7 L216.1 391.5 L213.3 396.0 L212.6 400.6 L214.3 405.4 L216.3 410.2 L216.0 414.9 L213.3 419.4 L210.7 423.8" stroke="#44403a" stroke-width="1.6" opacity="0.52"/>
<path d="M214.5 370.5 L214.9 375.2 L217.9 379.2 L221.3 383.3 L222.2 388.1 L219.9 392.7 L217.0 397.2 L216.5 401.8 L218.5 406.6 L220.4 411.5 L219.7 416.1 L216.6 420.4 L213.9 424.8 L213.9 429.5 L216.0 434.4" stroke="#3a2c1e" stroke-width="1.3" opacity="0.72"/>
<path d="M212.6 363.3 L210.9 368.5 L210.1 373.4 L212.2 377.7 L215.8 381.8 L217.7 386.5 L216.2 391.3 L213.0 395.8 L211.4 400.4 L212.9 405.2 L215.5 410.0 L216.0 414.8" stroke="#52402a" stroke-width="0.8" opacity="0.69"/>
<path d="M213.7 370.0 L213.5 374.8 L216.3 378.9 L220.0 383.0 L221.3 387.7 L219.2 392.4 L216.0 396.9 L215.0 401.4 L217.0 406.2 L219.3 411.1 L219.1 415.8 L216.1 420.2 L213.0 424.5" stroke="#32281c" stroke-width="1.5" opacity="0.57"/>
<path d="M193.7 303.1 L194.5 307.8 L195.4 312.6 L195.6 317.3 L194.8 321.9 L193.5 326.5 L192.8 331.2 L193.2 335.8 L194.8 340.3 L196.7 344.7 L198.2 349.1 L198.6 353.8 L198.2 358.7 L197.9 363.5 L198.3 368.2 L199.7 372.8" stroke="#44403a" stroke-width="1.4" opacity="0.76"/>
<path d="M192.7 302.1 L193.1 306.8 L193.8 311.6 L193.9 316.3 L193.3 320.9 L192.2 325.5 L191.4 330.2 L191.6 334.8 L192.8 339.3 L194.5 343.8 L195.9 348.3 L196.4 353.0 L196.3 357.8 L196.0 362.6 L196.3 367.3 L197.4 371.9 L198.8 376.6 L199.9 381.3 L199.9 386.1 L199.1 390.9" stroke="#32281c" stroke-width="1.8" opacity="0.83"/>
<path d="M195.7 317.4 L194.7 322.0 L193.5 326.6 L192.9 331.3 L193.5 335.9 L195.1 340.3 L197.0 344.7 L198.3 349.2 L198.6 353.9 L198.2 358.8 L198.0 363.6 L198.6 368.3 L200.1 372.8 L201.8 377.4" stroke="#44403a" stroke-width="1.6" opacity="0.71"/>
<path d="M193.7 311.4 L193.9 316.1 L193.1 320.7 L191.8 325.3 L190.9 330.0 L191.1 334.6 L192.4 339.1 L194.3 343.6 L195.7 348.1 L196.2 352.8 L195.8 357.6 L195.3 362.4 L195.6 367.2 L196.8 371.8 L198.5 376.4 L199.7 381.2" stroke="#44403a" stroke-width="1.2" opacity="0.57"/>
<path d="M203.9 254.9 L203.7 259.9 L202.9 264.6 L200.8 269.0 L197.9 273.3 L195.9 277.7 L195.4 282.6 L195.9 287.6 L195.7 292.4 L194.3 296.9 L192.2 301.4 L191.0 306.0 L191.3 310.8 L192.5 315.6 L193.0 320.3" stroke="#32281c" stroke-width="1.0" opacity="0.61"/>
<path d="M202.4 258.1 L201.4 262.8 L199.1 267.2 L196.4 271.5 L194.6 276.0 L194.1 281.0 L194.3 286.0 L193.9 290.7 L192.2 295.2 L190.2 299.7 L189.1 304.4 L189.4 309.1 L190.3 314.0 L190.4 318.7 L189.3 323.3 L187.8 327.9" stroke="#52402a" stroke-width="1.1" opacity="0.52"/>
<path d="M202.6 253.0 L202.1 258.0 L201.4 262.8 L199.4 267.2 L196.6 271.5 L194.5 276.0 L193.8 280.8 L194.0 285.9 L193.8 290.7 L192.5 295.2 L190.4 299.7 L189.0 304.3 L189.1 309.1 L190.0 313.9" stroke="#32281c" stroke-width="1.9" opacity="0.65"/>
<path d="M204.6 249.1 L203.3 253.8 L202.8 258.7 L201.8 263.4 L199.6 267.8 L197.0 272.1 L195.2 276.7 L194.7 281.6 L194.8 286.6 L194.4 291.3 L192.9 295.8 L191.0 300.3 L189.9 305.0 L190.2 309.7 L191.0 314.6 L191.2 319.3 L190.2 323.8 L188.9 328.4" stroke="#3a2c1e" stroke-width="1.6" opacity="0.71"/>
<path d="M242.0 204.0 L237.0 204.9 L232.4 206.7 L228.6 209.8 L225.6 213.8 L222.9 217.9 L219.9 221.6 L216.3 224.9" stroke="#4e4636" stroke-width="0.7" opacity="0.81"/>
<path d="M232.3 206.3 L228.4 209.3 L225.4 213.4 L222.9 217.6 L220.0 221.5 L216.5 224.9" stroke="#32281c" stroke-width="1.2" opacity="0.83"/>
<path d="M237.0 205.6 L232.5 207.6 L228.9 210.9 L226.0 215.0 L223.4 219.1 L220.3 222.7 L216.6 225.9 L212.8 229.1" stroke="#463624" stroke-width="1.0" opacity="0.69"/>
<path d="M237.3 206.8 L232.7 208.6 L228.9 211.7 L226.0 215.6" stroke="#ac9464" stroke-width="1.1" opacity="0.45"/>
<path d="M228.9 211.6 L226.1 215.6 L223.6 219.8 L220.6 223.5 L217.0 226.8 L213.3 230.0" stroke="#4e4636" stroke-width="0.7" opacity="0.83"/>
<path d="M237.2 208.0 L232.8 210.2 L229.3 213.7 L226.9 218.0 L224.5 222.2 L221.4 225.8 L217.7 228.9 L213.8 232.0 L210.6 235.7 L208.6 240.1 L207.5 244.9 L206.6 249.8 L205.2 254.3 L203.0 258.5 L200.1 262.6" stroke="#52402a" stroke-width="1.6" opacity="0.55"/>
<path d="M247.3 208.0 L242.3 208.6 L237.3 209.3 L232.8 211.2 L229.3 214.7 L226.9 219.0 L224.8 223.4 L222.0 227.2 L218.5 230.4 L214.6 233.5 L211.3 237.1 L209.1 241.4 L208.0 246.2 L207.3 251.1 L206.2 255.8 L204.3 260.0" stroke="#4e4636" stroke-width="1.5" opacity="0.70"/>
<path d="M242.1 208.0 L237.4 209.2 L233.1 211.5 L229.7 215.0 L227.1 219.1 L224.6 223.1 L221.5 226.6 L217.8 229.8 L214.3 233.2 L211.4 237.0 L209.6 241.4 L208.4 246.2 L207.3 250.9 L205.7 255.3 L203.4 259.5 L200.8 263.7 L198.5 268.1" stroke="#3a2c1e" stroke-width="1.6" opacity="0.64"/>
<path d="M247.2 207.7 L242.2 208.1 L237.2 209.0 L232.8 211.1 L229.5 214.8 L227.2 219.1 L224.9 223.4 L221.9 227.0 L218.2 230.1 L214.3 233.2 L211.1 236.9 L209.1 241.3 L208.2 246.2 L207.5 251.1 L206.2 255.6 L204.0 259.8 L201.1 263.9" stroke="#463624" stroke-width="1.4" opacity="0.68"/>
<path d="M210.6 212.8 L208.3 217.7 L206.3 222.6 L202.4 225.9 L197.5 228.5 L194.4 232.6 L193.4 238.0" stroke="#52402a" stroke-width="1.4" opacity="0.89"/>
<path d="M215.1 209.4 L210.0 211.6 L207.4 216.2 L205.8 221.6 L202.3 225.3 L197.1 227.6 L193.3 231.2 L192.3 236.7 L191.3 241.9 L187.8 245.8 L183.7 249.8 L182.4 254.9" stroke="#5c4a32" stroke-width="0.8" opacity="0.71"/>
<path d="M215.1 210.1 L210.6 212.8 L208.1 217.5 L206.2 222.5 L202.4 225.9 L197.6 228.5 L194.3 232.5" stroke="#44403a" stroke-width="0.9" opacity="0.61"/>
<path d="M214.3 208.4 L210.2 211.5 L208.0 216.6 L205.7 221.3 L201.3 224.2 L196.5 226.9 L193.7 231.3 L192.7 236.7 L190.6 241.2 L186.5 245.0" stroke="#3a2c1e" stroke-width="2.0" opacity="0.82"/>
<path d="M185.1 241.8 L182.6 246.5 L179.9 251.1 L177.4 255.9 L175.8 260.9 L174.7 266.1 L173.2 271.2 L170.9 275.9 L168.1 280.3 L165.6 284.9 L163.8 289.7 L162.6 294.8 L161.3 299.8 L159.3 304.5 L156.7 309.0 L154.4 313.6 L153.0 318.5 L152.6 323.6" stroke="#9a7e4c" stroke-width="0.7" opacity="0.73"/>
<path d="M183.7 247.7 L180.9 252.3 L178.4 257.0 L176.8 262.0 L175.7 267.2 L174.3 272.3 L172.2 277.0 L169.5 281.5 L166.9 286.0 L165.1 290.8 L164.0 295.9 L162.9 300.9 L161.0 305.6 L158.6 310.1" stroke="#4e4636" stroke-width="0.8" opacity="0.77"/>
<path d="M182.2 245.8 L179.5 250.5 L176.9 255.2 L175.0 260.1 L173.7 265.3 L172.3 270.4 L170.3 275.3 L167.6 279.7 L164.8 284.2 L162.7 289.0 L161.3 294.0 L160.1 299.1 L158.3 303.9 L155.8 308.4 L153.3 312.9 L151.6 317.7 L150.9 322.9 L150.8 328.1" stroke="#44403a" stroke-width="1.2" opacity="0.78"/>
<path d="M184.0 248.0 L181.2 252.5 L178.5 257.2 L176.8 262.1 L175.7 267.3 L174.5 272.5 L172.6 277.3 L169.8 281.7 L167.1 286.1 L165.2 290.9 L164.1 296.0 L163.1 301.1 L161.5 305.8 L159.0 310.3 L156.6 314.8 L155.1 319.6 L154.7 324.7" stroke="#9a7e4c" stroke-width="1.1" opacity="0.70"/>
<path d="M191.7 227.9 L188.7 232.2 L186.8 237.1 L185.3 242.1 L183.2 246.9 L180.4 251.5 L177.7 256.2 L175.8 261.1 L174.6 266.3 L173.4 271.5 L171.5 276.3 L168.8 280.8 L166.0 285.2 L163.9 289.9 L162.7 295.0 L161.6 300.1 L159.9 304.9 L157.5 309.4 L155.0 313.9 L153.3 318.7 L152.7 323.8" stroke="#32281c" stroke-width="1.2" opacity="0.85"/>
<path d="M172.4 420.2 L171.7 425.3 L172.1 430.1 L173.5 434.9 L173.8 439.8 L171.4 444.2 L167.7 447.8 L164.8 451.8 L163.1 456.6" stroke="#4e4636" stroke-width="1.9" opacity="0.63"/>
<path d="M167.6 405.7 L169.8 410.3 L171.8 415.0 L172.2 420.0 L171.5 425.2 L171.8 430.0 L173.1 434.8 L173.5 439.7 L171.2 444.1 L167.5 447.7" stroke="#52402a" stroke-width="0.8" opacity="0.60"/>
<path d="M170.1 419.3 L169.6 424.5 L169.7 429.4 L171.0 434.1 L171.5 439.1 L169.4 443.6 L165.6 447.1" stroke="#44403a" stroke-width="1.0" opacity="0.79"/>
<path d="M169.2 401.4 L169.9 406.3 L172.1 411.0 L174.0 415.7 L174.2 420.7 L173.5 425.8 L173.8 430.7 L175.0 435.4 L175.3 440.4 L173.0 444.7 L169.4 448.3 L166.5 452.3 L164.8 457.2" stroke="#5c4a32" stroke-width="0.8" opacity="0.65"/>
<path d="M247.3 213.9 L242.2 214.1 L238.0 216.3 L235.4 220.7 L232.7 224.2 L228.4 226.4 L224.2 229.1 L222.5 233.6 L222.0 238.7 L219.9 242.7" stroke="#5c4a32" stroke-width="1.4" opacity="0.72"/>
<path d="M247.6 215.5 L242.4 215.6 L238.0 217.4 L235.3 221.6 L233.1 225.7 L229.1 228.1 L224.7 230.6 L222.5 234.8 L222.3 240.0 L220.9 244.3" stroke="#3a2c1e" stroke-width="1.9" opacity="0.54"/>
<path d="M235.3 220.6 L232.7 224.1 L228.4 226.3 L224.2 229.0 L222.4 233.5 L222.0 238.5 L219.9 242.6 L216.1 246.0 L213.5 250.0" stroke="#32281c" stroke-width="1.5" opacity="0.80"/>
<path d="M238.0 217.1 L235.4 221.4 L233.0 225.3 L228.9 227.6 L224.5 230.1 L222.5 234.4 L222.3 239.6 L220.6 243.8 L216.9 247.3 L214.0 251.2 L214.0 256.1" stroke="#463624" stroke-width="1.4" opacity="0.79"/>
<path d="M189.4 274.9 L188.4 279.7 L186.4 284.3 L184.2 288.7 L182.6 293.3 L182.1 298.2" stroke="#ac9464" stroke-width="1.3" opacity="0.80"/>
<path d="M196.5 257.7 L194.0 262.1 L192.3 266.8 L191.7 271.8 L191.4 276.9 L190.3 281.7 L188.3 286.1 L186.1 290.6 L184.7 295.2 L184.6 300.1 L184.9 305.0" stroke="#3a2c1e" stroke-width="0.9" opacity="0.66"/>
<path d="M194.9 255.5 L192.5 259.9 L190.7 264.6 L189.8 269.6 L189.1 274.6 L188.0 279.4 L186.1 284.0 L184.1 288.5 L182.6 293.1" stroke="#64502e" stroke-width="0.7" opacity="0.57"/>
<path d="M190.9 276.6 L190.0 281.4 L188.3 286.0 L186.3 290.5 L184.7 295.1" stroke="#8c7242" stroke-width="1.1" opacity="0.69"/>
<path d="M190.1 264.0 L189.2 269.0 L188.6 274.1 L187.6 279.0 L185.7 283.5 L183.5 288.0 L181.8 292.6 L181.2 297.4" stroke="#745a34" stroke-width="1.3" opacity="0.70"/>
<path d="M161.9 343.7 L160.3 348.7 L159.7 353.7 L160.3 358.9 L161.6 364.0 L162.6 369.0 L162.8 374.1 L162.1 379.3 L161.2 384.5 L161.2 389.7" stroke="#3a2c1e" stroke-width="0.8" opacity="0.55"/>
<path d="M160.4 331.9 L159.2 336.8 L157.1 341.8 L155.0 346.7 L154.3 351.8 L155.0 357.0 L156.6 362.2 L157.8 367.3 L157.9 372.4 L157.0 377.6 L155.9 383.0 L155.8 388.3 L157.3 393.3 L160.1 398.0" stroke="#44403a" stroke-width="0.7" opacity="0.50"/>
<path d="M162.7 333.1 L161.9 338.0 L160.3 343.0 L158.5 348.0 L157.7 353.0 L158.2 358.2 L159.4 363.3 L160.6 368.4 L160.9 373.4 L160.3 378.6 L159.4 383.9 L159.3 389.2 L160.4 394.2 L162.7 399.0" stroke="#4e4636" stroke-width="0.7" opacity="0.69"/>
<path d="M161.9 338.2 L160.2 343.1 L158.7 348.1 L158.3 353.2 L158.9 358.3 L160.1 363.4 L161.0 368.5 L161.0 373.6 L160.3 378.8 L159.6 384.1 L159.7 389.3 L161.1 394.3 L163.4 399.0" stroke="#463624" stroke-width="0.7" opacity="0.35"/>
<path d="M158.3 342.3 L156.5 347.3 L156.0 352.4 L156.9 357.6 L158.3 362.8 L159.4 367.8 L159.3 372.9 L158.3 378.2 L157.3 383.5 L157.4 388.7 L159.1 393.7" stroke="#5c4a32" stroke-width="0.8" opacity="0.55"/>
<path d="M179.2 300.6 L177.4 305.2 L174.9 309.6 L174.0 314.3" stroke="#32281c" stroke-width="0.9" opacity="0.82"/>
<path d="M182.9 287.4 L181.3 292.0 L181.2 297.0 L180.8 301.9 L179.1 306.5 L177.0 310.9 L176.3 315.7 L176.7 320.6 L176.4 325.2 L175.0 329.8" stroke="#4e4636" stroke-width="1.2" opacity="0.64"/>
<path d="M178.3 299.9 L176.3 304.4 L173.8 308.8 L172.9 313.6 L173.4 318.6 L173.0 323.3 L171.2 327.8 L170.0 332.6" stroke="#4e4636" stroke-width="1.7" opacity="0.75"/>
<path d="M181.1 285.8 L179.2 290.4 L179.2 295.4 L179.0 300.4 L177.1 304.9 L174.5 309.3 L173.7 314.1 L174.2 319.1 L173.9 323.8" stroke="#52402a" stroke-width="1.9" opacity="0.59"/>
<path d="M198.8 269.1 L197.9 273.8 L198.0 278.8 L198.2 283.9 L197.6 288.6 L196.0 293.0 L193.8 297.5 L192.1 302.0 L191.7 306.7 L192.6 311.5 L193.9 316.3 L194.4 321.0" stroke="#52402a" stroke-width="0.9" opacity="0.64"/>
<path d="M204.3 261.5 L201.0 265.5 L199.1 270.0 L198.8 274.9 L199.6 280.1 L200.0 285.1 L198.9 289.6 L196.5 293.9 L193.9 298.4 L192.5 303.0 L192.9 307.7 L194.6 312.5 L196.1 317.3 L196.3 321.9" stroke="#463624" stroke-width="0.9" opacity="0.87"/>
<path d="M202.9 259.8 L200.0 263.9 L198.4 268.5 L198.1 273.5 L198.4 278.6 L198.2 283.5 L196.9 288.0 L194.6 292.4 L192.4 296.9 L191.3 301.5 L191.7 306.3 L192.9 311.1 L193.8 315.9 L193.5 320.5 L192.2 325.1" stroke="#745a34" stroke-width="0.9" opacity="0.77"/>
<path d="M199.2 269.6 L198.1 274.3 L198.3 279.4 L198.7 284.4 L198.3 289.1 L196.7 293.6 L194.4 298.0 L192.6 302.6 L192.2 307.3 L193.2 312.0 L194.6 316.8 L195.3 321.5 L194.7 326.0" stroke="#52402a" stroke-width="0.8" opacity="0.79"/>
<path d="M204.4 261.0 L201.4 265.0 L199.1 269.4 L198.1 274.1 L198.2 279.1 L198.4 284.2 L197.9 288.9 L196.3 293.3 L194.2 297.8 L192.5 302.4 L192.1 307.0 L192.9 311.8 L194.2 316.6 L194.8 321.3 L194.2 325.8" stroke="#44403a" stroke-width="0.7" opacity="0.78"/>
<path d="M222.8 218.9 L218.2 221.4 L215.4 225.4 L214.3 230.5 L212.3 234.9 L208.4 238.1 L204.7 241.5 L203.2 246.2 L202.8 251.4 L201.0 255.7 L197.5 259.7 L195.1 264.1 L195.0 269.2 L195.3 274.4" stroke="#7c6238" stroke-width="1.4" opacity="0.67"/>
<path d="M222.1 217.8 L217.7 220.5 L215.6 225.0 L214.5 230.1 L211.8 234.1 L207.5 237.1 L204.2 240.7 L203.2 245.7 L202.7 250.8 L200.1 254.9 L196.4 258.7 L194.5 263.4 L195.0 268.7 L194.9 273.8" stroke="#64502e" stroke-width="0.7" opacity="0.76"/>
<path d="M215.4 224.7 L214.3 229.8 L211.7 233.8 L207.4 236.8 L204.1 240.5 L203.0 245.4 L202.4 250.5 L199.9 254.6 L196.3 258.5 L194.3 263.1 L194.7 268.4 L194.6 273.5 L192.1 277.9" stroke="#64502e" stroke-width="0.8" opacity="0.82"/>
<path d="M218.0 220.9 L215.6 225.2 L214.3 230.3 L211.9 234.4 L207.9 237.5 L204.5 241.1 L203.3 246.0 L202.6 251.0 L200.4 255.2 L196.9 259.1 L194.9 263.7 L195.0 268.9" stroke="#745a34" stroke-width="1.1" opacity="0.52"/>
<path d="M223.2 220.0 L218.6 222.5 L215.7 226.4 L214.6 231.4 L212.8 235.9 L209.2 239.3 L205.4 242.7 L203.7 247.2 L203.4 252.4 L201.8 256.9 L198.5 260.8 L196.0 265.2 L195.7 270.2 L196.1 275.4" stroke="#32281c" stroke-width="0.7" opacity="0.56"/>
<path d="M169.5 321.4 L169.0 326.1 L167.3 330.8 L165.7 335.6 L165.8 340.6 L167.0 345.6 L167.8 350.7 L166.9 355.7 L165.3 360.6 L164.7 365.7 L165.8 370.7 L167.5 375.7 L167.9 380.8 L167.0 386.0 L166.5 391.1 L167.5 396.1" stroke="#9a7e4c" stroke-width="0.8" opacity="0.63"/>
<path d="M173.9 323.7 L173.3 328.3 L171.5 333.0 L170.2 337.8 L170.8 342.8 L172.4 347.7 L173.0 352.6 L172.0 357.6 L170.4 362.5 L170.2 367.5 L171.7 372.5 L173.2 377.5 L173.2 382.5 L172.0 387.6 L171.5 392.7 L172.8 397.7 L175.1 402.4" stroke="#64502e" stroke-width="0.6" opacity="0.68"/>
<path d="M166.5 336.1 L166.9 341.1 L168.4 346.1 L169.0 351.1 L167.9 356.1 L166.2 361.0 L165.8 366.1 L167.3 371.1 L168.9 376.1 L169.0 381.1 L167.9 386.3" stroke="#52402a" stroke-width="0.6" opacity="0.65"/>
<path d="M172.3 318.4 L173.0 323.3 L172.7 328.0 L171.2 332.7 L169.7 337.5 L169.9 342.4 L171.3 347.4 L172.2 352.3 L171.5 357.3 L169.9 362.3 L169.4 367.3 L170.5 372.3 L172.1 377.2 L172.5 382.2 L171.6 387.4 L170.9 392.5" stroke="#64502e" stroke-width="1.0" opacity="0.54"/>
<path d="M165.7 335.7 L166.1 340.7 L167.4 345.7 L167.9 350.7 L166.7 355.7 L165.1 360.7 L164.9 365.7 L166.3 370.8 L167.7 375.7 L167.8 380.8 L166.8 386.0 L166.5 391.2" stroke="#84683c" stroke-width="0.9" opacity="0.37"/>
<path d="M209.5 376.5 L212.4 380.8 L213.3 385.5 L211.4 390.2 L209.6 394.8 L210.5 399.6 L212.4 404.4 L212.0 409.1 L209.5 413.6 L208.2 418.2" stroke="#4e4636" stroke-width="0.6" opacity="0.48"/>
<path d="M211.6 376.9 L214.4 381.2 L214.4 386.0 L212.2 390.7 L211.1 395.3 L212.7 400.0 L214.1 404.8" stroke="#64502e" stroke-width="1.3" opacity="0.44"/>
<path d="M212.2 373.7 L214.2 378.0 L217.3 382.2 L217.7 386.9 L215.3 391.6 L213.9 396.2 L215.3 400.9 L216.9 405.7" stroke="#7c6238" stroke-width="0.7" opacity="0.63"/>
<path d="M213.3 377.5 L215.9 381.8 L216.1 386.6 L214.1 391.2 L213.1 395.8 L214.3 400.6 L215.5 405.3 L214.4 410.0 L212.1 414.5" stroke="#3a2c1e" stroke-width="1.1" opacity="0.58"/>
<path d="M210.1 376.3 L212.9 380.6 L212.7 385.4 L210.3 390.1 L209.4 394.7 L211.2 399.5" stroke="#32281c" stroke-width="1.4" opacity="0.63"/>
<path d="M201.8 305.9 L202.2 310.6 L203.6 315.2 L205.2 319.8 L206.2 324.4 L206.0 329.0 L205.3 333.7 L205.0 338.5" stroke="#84683c" stroke-width="0.8" opacity="0.83"/>
<path d="M203.0 301.1 L201.8 305.7 L201.7 310.4 L202.8 315.0 L204.4 319.6" stroke="#745a34" stroke-width="0.6" opacity="0.76"/>
<path d="M201.3 305.2 L201.2 309.9 L202.1 314.5 L203.7 319.1 L204.9 323.7 L205.3 328.3 L204.9 332.9 L204.4 337.7" stroke="#84683c" stroke-width="0.8" opacity="0.73"/>
<path d="M200.6 299.0 L199.6 303.7 L199.8 308.4 L200.8 313.0 L202.1 317.6" stroke="#52402a" stroke-width="0.7" opacity="0.46"/>
<path d="M201.1 309.6 L202.2 314.3 L203.6 318.9 L204.5 323.5" stroke="#463624" stroke-width="0.8" opacity="0.72"/>
<path d="M219.5 209.8 L217.8 215.3 L214.8 219.2" stroke="#ac9464" stroke-width="0.9" opacity="0.51"/>
<path d="M241.5 197.8 L237.5 201.6 L232.7 202.7 L227.1 202.6 L222.4 204.8 L219.9 209.7 L218.0 214.9 L214.0 218.0 L208.6 219.9 L204.7 223.2" stroke="#52402a" stroke-width="1.1" opacity="0.85"/>
<path d="M222.6 205.4 L219.5 209.6 L217.6 214.8 L214.4 218.6" stroke="#8c7242" stroke-width="0.6" opacity="0.50"/>
<path d="M222.1 203.3 L219.2 207.9 L217.2 213.2 L213.6 216.7" stroke="#8c7242" stroke-width="1.1" opacity="0.59"/>
<path d="M232.9 202.9 L227.7 203.5 L222.6 205.0 L219.3 209.0 L217.2 214.1 L214.2 218.1 L209.5 220.6" stroke="#52402a" stroke-width="1.4" opacity="0.85"/>
<path d="M201.2 244.2 L198.5 248.4 L198.0 253.6 L198.5 259.0 L198.0 264.0 L195.4 268.3 L191.7 272.4 L188.8 276.7 L188.1 281.6 L189.1 286.9 L190.0 292.0 L189.0 296.6 L186.2 301.0 L183.3 305.3 L182.0 310.0 L182.9 314.9" stroke="#ac9464" stroke-width="1.3" opacity="0.57"/>
<path d="M204.8 240.7 L200.8 244.0 L198.9 248.6 L198.8 254.0 L199.1 259.2 L197.9 264.0 L194.7 268.1 L191.0 272.2 L188.8 276.7 L188.8 281.9 L190.0 287.1 L190.3 292.1 L188.5 296.5 L185.4 300.8 L182.9 305.3 L182.4 310.0 L183.8 315.1" stroke="#32281c" stroke-width="1.1" opacity="0.66"/>
<path d="M200.0 260.7 L199.1 265.5 L196.2 269.7 L192.7 273.8 L190.3 278.2 L190.0 283.3 L191.1 288.5 L191.7 293.4 L190.4 298.0 L187.6 302.4 L185.0 306.8 L184.3 311.5 L185.6 316.5 L187.2 321.3 L187.5 325.9 L185.9 330.4" stroke="#64502e" stroke-width="1.4" opacity="0.49"/>
<path d="M199.5 255.5 L199.8 260.7 L199.0 265.5 L196.5 269.9 L193.1 274.0 L190.7 278.5 L190.1 283.4 L190.9 288.6 L191.5 293.5 L190.5 298.1 L188.0 302.5 L185.6 307.0 L184.7 311.7 L185.6 316.6" stroke="#32281c" stroke-width="1.2" opacity="0.75"/>
<path d="M202.0 245.6 L199.8 250.1 L199.6 255.3 L200.0 260.6 L198.9 265.3 L196.1 269.6 L192.5 273.7 L190.2 278.1 L190.0 283.2 L191.0 288.4 L191.5 293.3 L190.2 297.9 L187.4 302.2 L184.9 306.7 L184.3 311.4" stroke="#64502e" stroke-width="1.1" opacity="0.73"/>
<path d="M214.1 218.8 L211.1 222.6 L207.3 225.9 L203.3 229.1 L200.0 232.9 L197.7 237.4 L196.2 242.3 L194.7 247.0 L192.3 251.4 L189.4 255.7 L186.8 260.2 L185.4 265.1 L184.9 270.3" stroke="#44403a" stroke-width="0.7" opacity="0.75"/>
<path d="M203.3 229.1 L199.9 232.8 L197.6 237.3 L196.1 242.2 L194.6 247.0 L192.3 251.4 L189.4 255.7 L186.8 260.2 L185.3 265.1" stroke="#7c6238" stroke-width="1.2" opacity="0.72"/>
<path d="M213.7 218.6 L211.2 222.9 L207.9 226.6 L204.1 229.9 L200.3 233.3 L197.5 237.4 L195.8 242.2 L194.6 247.2 L192.9 251.9" stroke="#7c6238" stroke-width="1.1" opacity="0.84"/>
<path d="M208.0 226.9 L204.1 230.2 L200.5 233.6 L197.8 237.8 L196.1 242.7 L194.9 247.6 L193.1 252.2 L190.5 256.6" stroke="#745a34" stroke-width="0.7" opacity="0.83"/>
<path d="M204.7 231.2 L200.9 234.6 L198.2 238.8 L196.9 243.8 L196.0 248.8 L194.3 253.4 L191.5 257.7 L188.4 262.1 L186.4 266.7 L185.7 271.8" stroke="#745a34" stroke-width="1.3" opacity="0.50"/>
<path d="M353.6 383.0 L356.7 386.2 L359.3 389.8 L361.0 393.8 L362.0 398.0 L362.8 401.8 L364.5 405.3 L367.3 408.3 L370.8 410.8 L374.3 413.5 L377.6 416.9 L380.6 420.9" stroke="#0b0908" stroke-width="2.6" opacity="0.76"/>
<path d="M359.6 394.5 L360.8 398.5 L362.2 402.1 L364.3 405.3 L367.2 408.1 L370.4 410.8 L373.6 413.8 L376.6 417.5" stroke="#120e0b" stroke-width="2.9" opacity="0.89"/>
<path d="M353.0 383.2 L355.6 386.7 L357.8 390.5 L359.4 394.6 L360.7 398.5 L362.2 402.1 L364.3 405.3 L367.1 408.2 L370.2 410.9 L373.4 414.0 L376.5 417.6 L379.6 421.4" stroke="#120e0b" stroke-width="3.0" opacity="0.84"/>
<path d="M391.6 360.7 L392.1 365.9 L392.2 371.1 L392.3 376.4 L392.7 381.5 L393.2 386.3 L393.2 391.3 L393.0 396.2 L393.0 400.5 L393.8 404.5 L395.8 408.9" stroke="#080706" stroke-width="3.3" opacity="0.89"/>
<path d="M386.8 351.7 L388.3 356.8 L389.1 361.9 L389.3 367.0 L389.3 372.3 L389.5 377.5 L390.3 382.4 L391.2 387.1 L391.7 392.1 L391.6 396.8" stroke="#1e1610" stroke-width="2.3" opacity="0.77"/>
<path d="M387.6 345.4 L389.2 350.5 L390.7 355.6 L391.6 360.8 L391.7 366.0 L391.6 371.3 L391.7 376.6 L392.3 381.6 L393.1 386.4 L393.5 391.5 L393.2 396.3 L393.0 400.5 L393.4 404.6 L395.3 409.2" stroke="#080706" stroke-width="3.2" opacity="0.80"/>
<path d="M361.9 322.7 L363.9 327.1 L365.6 331.6 L366.5 336.3 L366.3 341.1 L365.6 346.0 L365.3 351.0 L365.8 355.9 L367.3 360.7 L369.4 365.4 L371.5 369.9 L373.0 374.4 L373.8 379.1 L374.4 383.9 L375.0 388.5 L376.0 392.6 L377.3 396.6 L378.8 400.5 L380.5 404.0 L382.3 407.4" stroke="#18120d" stroke-width="3.2" opacity="0.75"/>
<path d="M364.5 315.1 L365.4 319.9 L367.2 324.4 L369.2 328.9 L370.8 333.5 L371.5 338.3 L371.4 343.3 L371.0 348.4 L370.9 353.5 L371.7 358.5 L373.4 363.3 L375.5 367.9 L377.5 372.4 L378.8 377.0 L379.5 381.9 L379.7 386.7 L379.8 391.1 L380.2 395.3 L381.2 399.6" stroke="#18120d" stroke-width="2.5" opacity="0.82"/>
<path d="M360.9 317.8 L362.0 322.4 L363.8 326.8 L365.8 331.3 L367.1 336.0 L367.4 340.7 L366.8 345.6 L366.2 350.6 L366.3 355.7 L367.4 360.6 L369.4 365.3 L371.8 369.8 L373.7 374.1 L374.9 378.7 L375.5 383.5 L375.8 388.2 L376.2 392.5 L377.1 396.5" stroke="#18120d" stroke-width="3.3" opacity="0.87"/>
<path d="M376.6 387.8 L377.2 391.9 L379.2 395.9 L381.6 399.9 L383.3 403.2 L384.1 406.9 L385.2 411.9" stroke="#080706" stroke-width="2.0" opacity="0.76"/>
<path d="M375.8 378.3 L375.7 383.4 L375.7 388.2 L376.5 392.3 L378.4 396.2 L380.5 400.2 L382.0 403.6 L382.8 407.4" stroke="#0b0908" stroke-width="2.4" opacity="0.76"/>
<path d="M376.8 387.8 L376.8 392.2 L377.9 396.2 L379.9 400.2 L382.0 403.6 L383.6 406.9 L385.3 411.4 L387.6 416.1 L391.0 419.9" stroke="#120e0b" stroke-width="2.8" opacity="0.90"/>
<path d="M297.1 200.2 L302.0 201.6 L306.5 204.0 L310.2 207.5 L313.1 211.8 L316.0 216.1 L319.3 219.9 L323.3 223.1 L327.5 226.0 L331.5 229.4 L334.7 233.4 L337.1 238.0 L338.9 243.0 L340.8 247.8 L343.1 252.3 L346.0 256.4 L349.3 260.5 L352.3 264.8 L354.5 269.4" stroke="#080706" stroke-width="1.8" opacity="0.86"/>
<path d="M302.2 200.7 L307.0 202.7 L311.0 205.9 L314.2 210.0 L317.1 214.3 L320.2 218.4 L323.8 221.9 L327.9 225.0 L332.0 228.3 L335.6 232.0 L338.3 236.4 L340.4 241.2 L342.2 246.2 L344.1 250.9 L346.6 255.3 L349.6 259.5 L352.8 263.7" stroke="#0b0908" stroke-width="3.2" opacity="0.78"/>
<path d="M307.1 202.4 L310.9 205.9 L314.0 210.1 L317.0 214.4 L320.3 218.2 L324.2 221.4 L328.4 224.4 L332.4 227.8 L335.8 231.8 L338.2 236.3 L340.2 241.2 L342.0 246.1 L344.3 250.6 L347.0 254.9 L350.2 259.0 L353.2 263.3 L355.5 268.0 L356.9 273.0" stroke="#0b0908" stroke-width="2.8" opacity="0.88"/>
<path d="M341.5 298.9 L341.0 304.1 L342.0 308.5 L344.7 312.6 L347.5 316.9 L348.4 321.5 L347.0 326.1 L344.8 330.7 L343.9 335.1" stroke="#0b0908" stroke-width="2.6" opacity="1.00"/>
<path d="M344.3 313.1 L346.8 317.5 L347.6 322.0 L346.4 326.6 L344.5 331.2 L343.7 335.5 L344.6 339.9" stroke="#18120d" stroke-width="1.7" opacity="0.78"/>
<path d="M346.8 317.9 L347.2 322.5 L345.5 327.1 L343.4 331.6 L342.9 336.0" stroke="#080706" stroke-width="1.6" opacity="0.87"/>
<path d="M301.2 290.9 L302.6 295.3 L305.6 298.8 L309.7 301.2 L313.9 303.5 L317.2 306.7 L318.6 311.1 L318.6 315.9 L318.6 320.4 L319.9 324.6" stroke="#18120d" stroke-width="1.6" opacity="0.77"/>
<path d="M301.2 285.4 L301.4 290.3 L302.9 294.7 L306.2 298.0 L310.5 300.2 L314.8 302.5 L317.9 305.9 L319.1 310.5 L318.8 315.3 L318.8 319.8 L320.4 323.9 L323.2 327.8" stroke="#0b0908" stroke-width="2.4" opacity="0.84"/>
<path d="M294.8 274.1 L297.8 277.7 L299.7 281.7 L300.5 286.2 L301.1 290.9 L302.9 295.1 L306.1 298.3 L310.2 300.7 L314.1 303.3 L317.0 306.8 L318.3 311.2 L318.5 315.8 L318.9 320.2 L320.5 324.3" stroke="#18120d" stroke-width="2.1" opacity="0.93"/>
<path d="M361.5 364.1 L362.7 368.8 L363.5 373.5 L364.3 378.2 L365.6 382.6 L367.6 386.7 L370.0 390.5 L372.2 394.3 L373.5 398.2 L374.0 402.1" stroke="#0b0908" stroke-width="2.3" opacity="0.91"/>
<path d="M362.7 383.9 L364.9 387.9 L367.5 391.5 L369.8 395.1 L371.3 398.9 L372.0 402.7 L372.7 406.6" stroke="#120e0b" stroke-width="3.0" opacity="0.95"/>
<path d="M359.9 375.1 L360.7 379.8 L362.2 384.1 L364.6 388.0 L367.3 391.5 L369.7 395.1 L371.1 398.9 L371.6 402.8 L372.2 406.8" stroke="#120e0b" stroke-width="1.7" opacity="0.85"/>
<path d="M338.0 380.2 L341.7 383.5 L343.9 387.1 L344.6 391.8 L346.6 395.9 L350.6 398.1 L354.8 400.0 L356.8 403.4 L357.2 407.9 L359.1 411.6 L363.5 413.3 L368.0 414.9" stroke="#120e0b" stroke-width="2.5" opacity="0.82"/>
<path d="M345.3 386.5 L346.0 391.2 L347.7 395.5 L351.5 397.8 L355.8 399.6 L358.0 403.0 L358.2 407.5 L359.8 411.4 L364.1 413.3 L368.8 414.7" stroke="#0b0908" stroke-width="2.8" opacity="0.82"/>
<path d="M344.3 386.9 L345.2 391.5 L346.9 395.8 L350.6 398.2 L354.9 400.0 L357.2 403.2 L357.6 407.6 L359.3 411.5 L363.5 413.5 L368.1 414.9 L371.4 418.3 L373.7 423.0" stroke="#0b0908" stroke-width="2.8" opacity="0.81"/>
<path d="M284.0 254.1 L285.7 258.2 L289.0 261.6 L292.6 265.0 L294.9 268.8 L295.5 273.4 L295.5 278.3" stroke="#120e0b" stroke-width="2.4" opacity="0.74"/>
<path d="M284.6 246.9 L285.1 251.6 L287.0 255.6 L290.4 259.0 L294.0 262.3 L296.3 266.1 L296.9 270.8 L297.0 275.7 L298.2 280.1" stroke="#0b0908" stroke-width="3.0" opacity="0.94"/>
<path d="M284.1 243.7 L284.1 248.6 L284.2 253.5 L285.9 257.6 L289.4 260.9 L293.1 264.1 L295.4 268.0 L296.0 272.7 L295.8 277.6 L296.7 282.1" stroke="#18120d" stroke-width="2.8" opacity="0.80"/>
<path d="M327.4 305.7 L327.8 310.4 L328.0 315.1 L328.6 319.6 L329.7 323.8 L331.0 328.0 L331.8 332.5 L331.6 337.0 L330.4 341.4 L328.4 345.5 L326.3 349.4 L324.5 353.3 L323.3 357.4 L322.5 361.8 L322.0 366.1" stroke="#120e0b" stroke-width="1.7" opacity="0.89"/>
<path d="M328.4 310.0 L328.7 314.6 L329.3 319.1 L330.1 323.4 L331.1 327.7 L331.7 332.1 L331.6 336.6 L330.7 341.0 L329.2 345.2 L327.2 349.2 L325.3 353.0 L323.8 357.1 L322.8 361.4" stroke="#0b0908" stroke-width="3.1" opacity="0.75"/>
<path d="M330.3 317.5 L331.5 321.7 L332.9 326.0 L333.8 330.5 L333.8 335.0 L332.7 339.3 L330.9 343.5 L328.8 347.5 L327.1 351.4 L326.0 355.6 L325.5 360.0 L325.1 364.3" stroke="#080706" stroke-width="2.6" opacity="0.96"/>
<path d="M361.0 320.6 L360.3 325.5 L358.2 330.3 L356.9 334.9 L357.9 339.5 L360.6 344.0 L363.0 348.5 L363.5 353.1 L362.0 358.3 L360.6 363.6 L361.2 368.6 L364.3 372.9 L368.2 376.5" stroke="#18120d" stroke-width="2.5" opacity="0.81"/>
<path d="M355.7 311.5 L358.9 315.7 L361.2 320.1 L361.2 324.9 L359.5 329.8 L358.0 334.5 L358.5 339.1 L360.8 343.7 L363.3 348.1 L364.2 352.7 L363.3 357.8 L362.0 363.1 L362.2 368.2" stroke="#1e1610" stroke-width="1.8" opacity="0.90"/>
<path d="M361.5 324.6 L359.5 329.5 L358.2 334.2 L359.1 338.7 L361.8 343.3 L364.3 347.7 L364.9 352.4 L363.6 357.6 L362.1 362.9 L362.6 367.9 L365.6 372.3 L369.4 376.0 L372.1 379.8 L372.7 384.6" stroke="#080706" stroke-width="2.8" opacity="0.84"/>
<path d="M324.6 358.9 L320.9 362.0 L318.1 365.7 L318.3 370.3 L320.6 374.3 L322.3 378.2 L322.3 382.9 L322.2 387.8 L324.2 391.9 L328.3 394.4 L332.5 396.1" stroke="#120e0b" stroke-width="3.1" opacity="0.92"/>
<path d="M325.0 358.8 L321.3 361.9 L318.4 365.6 L318.4 370.1 L320.7 374.2 L322.7 378.0 L322.8 382.6 L322.6 387.6 L324.4 391.8 L328.4 394.4 L332.7 396.0 L335.9 398.8 L338.1 403.0" stroke="#120e0b" stroke-width="2.3" opacity="0.99"/>
<path d="M328.6 354.0 L326.3 357.8 L322.5 360.9 L319.8 364.7 L320.2 369.3 L322.7 373.3 L324.3 377.2 L324.1 382.0 L323.9 387.0 L325.9 391.1 L330.1 393.5 L334.3 395.2 L337.2 398.4" stroke="#18120d" stroke-width="1.5" opacity="0.81"/>
<path d="M314.9 278.3 L318.8 281.2 L322.2 284.4 L324.7 288.4 L326.2 292.9 L327.1 297.6 L328.1 302.0 L329.9 306.2 L332.4 310.2 L335.0 314.3 L336.6 318.8" stroke="#120e0b" stroke-width="2.1" opacity="0.85"/>
<path d="M325.9 286.6 L327.4 291.2 L328.4 295.8 L329.5 300.2 L331.4 304.3 L334.0 308.4 L336.5 312.6 L338.1 317.0 L338.0 321.7 L336.7 326.2 L335.2 330.6 L334.3 334.9" stroke="#1e1610" stroke-width="1.7" opacity="0.79"/>
<path d="M316.2 276.3 L320.3 279.1 L323.9 282.3 L326.4 286.3 L327.7 291.0 L328.3 295.8 L329.1 300.3 L330.9 304.5 L333.7 308.5 L336.6 312.5 L338.5 317.0" stroke="#120e0b" stroke-width="3.1" opacity="0.80"/>
<path d="M311.7 369.0 L308.6 372.2 L306.6 376.1 L306.8 380.4 L308.9 384.4 L311.6 388.1" stroke="#1e1610" stroke-width="3.4" opacity="1.00"/>
<path d="M314.8 365.2 L311.8 368.6 L308.8 372.0 L307.0 375.9 L307.4 380.2 L309.5 384.2 L312.0 387.9 L314.1 391.6" stroke="#0b0908" stroke-width="2.1" opacity="0.93"/>
<path d="M319.8 348.1 L319.0 352.4 L318.4 356.9 L317.1 361.3 L314.8 365.2 L311.7 368.5 L308.7 371.9 L307.0 375.9 L307.5 380.2 L309.6 384.1 L312.1 387.8 L314.1 391.6" stroke="#080706" stroke-width="1.6" opacity="0.77"/>
<path d="M354.0 377.7 L356.9 381.5 L359.8 385.0 L361.8 388.9 L363.0 393.2 L364.0 397.3 L365.6 400.8 L367.9 404.0 L370.5 406.9 L372.8 410.2 L375.2 414.1 L378.1 418.1" stroke="#080706" stroke-width="2.6" opacity="0.89"/>
<path d="M353.6 383.0 L356.4 386.4 L358.4 390.3 L359.8 394.5 L361.1 398.4 L363.1 401.7 L365.7 404.7 L368.2 407.6 L370.5 410.9 L373.0 414.8" stroke="#18120d" stroke-width="1.9" opacity="0.70"/>
<path d="M358.8 385.4 L360.4 389.5 L361.5 393.9 L362.8 397.8 L365.0 401.0 L367.6 404.0 L369.9 407.0 L371.8 410.6 L374.1 414.8" stroke="#120e0b" stroke-width="1.5" opacity="0.81"/>
<path d="M325.6 312.2 L327.8 316.3 L329.9 320.5 L331.0 324.9 L330.6 329.5 L329.0 333.7 L327.4 337.9 L326.6 342.2 L326.5 346.7 L326.4 351.3" stroke="#120e0b" stroke-width="1.8" opacity="0.88"/>
<path d="M328.1 316.3 L330.1 320.5 L331.0 325.0 L330.2 329.6 L328.5 333.8 L327.1 338.0 L326.5 342.4 L326.7 346.9 L326.6 351.5 L325.3 355.8 L322.8 359.5 L319.7 362.9" stroke="#18120d" stroke-width="2.9" opacity="0.93"/>
<path d="M328.4 331.9 L326.8 336.1 L325.1 340.2 L324.0 344.5 L323.7 349.0 L323.4 353.5 L322.1 357.8" stroke="#0b0908" stroke-width="1.6" opacity="0.73"/>
<path d="M312.9 221.9 L317.0 224.8 L321.7 227.2 L325.3 230.7 L327.2 235.6 L328.6 240.7 L331.4 245.0 L335.5 248.3 L339.5 251.7 L341.8 256.2 L342.7 261.5 L343.9 266.4" stroke="#080706" stroke-width="1.6" opacity="0.86"/>
<path d="M303.8 210.6 L307.5 213.9 L309.8 218.5 L312.3 223.0 L316.0 226.3 L320.6 228.7 L324.6 232.0 L326.8 236.6 L328.1 241.8 L330.4 246.3 L334.3 249.7 L338.5 253.0 L341.2 257.3 L342.3 262.4 L343.2 267.5 L345.6 271.8 L349.1 275.8 L351.9 280.1 L352.8 285.1" stroke="#080706" stroke-width="2.5" opacity="0.88"/>
<path d="M305.1 207.5 L308.9 210.8 L311.3 215.6 L313.7 220.1 L317.6 223.3 L322.5 225.5 L326.6 228.7 L328.8 233.4 L330.0 238.7 L332.3 243.3 L336.4 246.7 L340.7 249.9 L343.4 254.2 L344.3 259.5 L345.0 264.7" stroke="#080706" stroke-width="1.7" opacity="0.89"/>
<path d="M361.8 300.2 L362.7 305.0 L365.2 309.4 L367.6 313.9 L368.1 318.8 L367.9 323.8 L369.0 328.5 L371.1 333.0 L372.0 337.8 L371.4 342.9 L371.4 348.0 L373.2 352.8" stroke="#120e0b" stroke-width="2.3" opacity="0.90"/>
<path d="M367.8 307.4 L369.8 311.9 L370.1 317.0 L370.4 322.0 L372.1 326.6 L374.3 331.2 L374.8 336.2 L374.2 341.3 L374.7 346.3" stroke="#18120d" stroke-width="1.5" opacity="0.94"/>
<path d="M365.8 309.0 L367.9 313.6 L368.2 318.5 L368.3 323.5 L369.7 328.1" stroke="#080706" stroke-width="1.8" opacity="0.84"/>
<path d="M282.6 204.6 L285.5 208.5 L287.8 212.9 L291.2 215.8 L296.0 217.2 L300.7 219.1 L303.5 223.0 L304.9 228.1 L307.1 232.5 L311.2 235.4 L316.0 237.7" stroke="#080706" stroke-width="2.0" opacity="0.96"/>
<path d="M273.4 201.4 L278.5 201.1 L282.9 202.6 L285.9 206.5 L288.4 210.9 L292.0 213.7 L297.0 214.8 L301.7 216.6 L304.6 220.6 L306.1 225.7 L308.4 230.1 L312.6 232.8 L317.5 235.1" stroke="#18120d" stroke-width="2.5" opacity="0.90"/>
<path d="M273.3 202.0 L278.2 202.0 L282.8 203.2 L286.0 206.8 L288.5 211.2 L291.8 214.3 L296.5 215.8 L301.2 217.5 L304.4 221.1 L306.1 226.1 L308.1 230.7 L312.0 233.7 L316.7 236.0 L320.3 239.5" stroke="#18120d" stroke-width="2.9" opacity="0.87"/>
<path d="M380.9 321.7 L379.9 327.2 L379.2 332.5 L380.2 337.6 L382.8 342.3 L385.9 347.1 L387.9 352.1 L387.9 357.3 L386.5 362.7 L385.2 368.2 L385.6 373.4" stroke="#080706" stroke-width="1.9" opacity="0.92"/>
<path d="M383.9 319.5 L383.1 325.1 L383.0 330.5 L384.6 335.4 L387.5 340.1 L390.3 345.0 L391.8 350.2 L391.3 355.5 L389.8 361.0 L388.7 366.5 L389.4 371.7" stroke="#120e0b" stroke-width="3.1" opacity="0.83"/>
<path d="M381.9 308.9 L383.5 314.0 L383.4 319.5 L383.0 325.1 L383.4 330.3 L385.3 335.2 L388.2 340.0 L390.7 344.9 L391.7 350.2 L390.9 355.5 L389.5 361.0 L388.8 366.4 L390.0 371.6 L392.6 376.4 L395.3 381.3 L396.3 386.6 L394.8 391.7 L391.8 396.1" stroke="#18120d" stroke-width="1.7" opacity="0.88"/>
<path d="M280.8 211.1 L283.6 214.6 L286.6 217.9 L290.0 220.8 L293.7 223.4 L297.3 226.3 L300.4 229.7 L302.8 233.8 L305.0 238.0 L307.5 242.0" stroke="#0b0908" stroke-width="3.4" opacity="0.96"/>
<path d="M283.3 215.9 L286.1 219.4 L289.3 222.4 L292.9 225.1 L296.6 227.9 L299.7 231.4 L302.2 235.4 L304.2 239.7 L306.4 243.8 L309.2 247.6 L312.4 251.1 L315.7 254.7" stroke="#18120d" stroke-width="1.6" opacity="0.77"/>
<path d="M283.7 214.6 L286.6 218.1 L289.7 221.2 L293.3 224.0 L296.9 226.8 L300.2 230.1 L302.9 234.0 L305.1 238.2" stroke="#080706" stroke-width="3.0" opacity="0.84"/>
<path d="M376.6 378.0 L377.5 382.7 L376.6 387.9 L376.2 392.3 L378.0 396.2 L380.8 400.1 L382.2 403.5 L382.1 407.9 L383.4 413.0 L387.1 416.5 L392.6 418.1" stroke="#1e1610" stroke-width="1.6" opacity="0.71"/>
<path d="M376.4 383.1 L375.4 388.4 L374.4 393.0 L375.8 396.8 L379.1 400.6 L381.3 403.7 L381.6 407.8 L382.4 413.2 L385.6 417.2" stroke="#080706" stroke-width="2.9" opacity="0.93"/>
<path d="M375.1 383.6 L374.6 388.8 L373.7 393.4 L374.8 397.2 L377.8 400.9 L380.2 404.0 L380.9 408.0 L381.9 413.2 L385.0 417.2 L390.0 419.1" stroke="#1e1610" stroke-width="2.9" opacity="0.75"/>
<path d="M338.4 319.3 L336.9 323.8 L338.0 328.2 L340.3 332.8 L340.7 337.3 L338.2 341.5 L335.3 345.3 L334.8 349.6 L336.1 354.4 L336.5 358.7 L334.6 362.6 L332.6 367.3 L333.4 371.9 L336.9 375.8 L340.1 379.6 L340.8 383.9 L340.8 389.0 L342.8 393.1" stroke="#0b0908" stroke-width="2.1" opacity="0.78"/>
<path d="M340.3 333.0 L341.0 337.6 L338.2 341.7 L334.7 345.4 L334.0 349.6 L335.8 354.6 L336.7 359.0 L334.6 362.8 L332.0 367.5 L332.5 372.2 L336.4 376.0 L340.2 379.6 L340.9 383.9 L340.4 389.2" stroke="#0b0908" stroke-width="2.0" opacity="0.96"/>
<path d="M336.1 324.1 L338.0 328.6 L340.7 333.2 L340.5 337.7 L337.1 341.7 L334.2 345.5 L334.5 349.9 L336.4 354.9 L336.3 359.1 L333.5 362.9 L331.3 367.7 L332.8 372.2 L337.0 375.9 L340.0 379.6 L340.0 384.3 L339.6 389.7 L342.1 393.5 L347.1 394.9 L351.7 396.5" stroke="#120e0b" stroke-width="3.1" opacity="0.79"/>
<path d="M268.2 215.9 L271.5 218.2 L275.8 219.8 L279.9 222.1 L282.3 225.8 L283.2 230.5 L284.2 235.1 L286.8 238.7 L290.8 241.4 L294.6 244.4 L296.8 248.4 L297.4 253.3 L298.1 258.1" stroke="#1e1610" stroke-width="3.2" opacity="0.75"/>
<path d="M271.1 220.0 L275.1 221.7 L279.5 223.9 L282.3 227.4 L283.2 232.0 L283.7 236.9 L285.6 240.9 L289.4 243.8 L293.5 246.6 L296.1 250.3 L296.8 255.1 L297.0 260.1" stroke="#080706" stroke-width="1.7" opacity="0.95"/>
<path d="M275.1 221.2 L279.5 223.3 L282.5 226.6 L283.5 231.2 L284.0 236.1 L285.9 240.1 L289.6 243.0 L293.9 245.7 L296.6 249.4 L297.4 254.2 L297.6 259.2" stroke="#120e0b" stroke-width="3.2" opacity="0.83"/>
<path d="M283.4 238.7 L285.4 242.6 L288.2 246.1 L291.4 249.4 L294.4 253.0 L296.5 256.9 L297.7 261.4 L298.7 266.0 L300.0 270.4 L302.3 274.3" stroke="#120e0b" stroke-width="2.1" opacity="0.89"/>
<path d="M283.4 238.6 L285.7 242.4 L288.6 245.8 L291.8 249.2 L294.4 252.9" stroke="#080706" stroke-width="3.0" opacity="0.94"/>
<path d="M281.0 229.0 L282.3 233.4 L283.7 237.7 L285.8 241.6 L288.8 245.0 L292.1 248.3 L295.0 251.8 L297.0 255.9" stroke="#18120d" stroke-width="1.6" opacity="0.78"/>
<path d="M284.8 240.2 L285.6 244.7 L286.5 249.3 L288.5 253.3 L291.6 256.8 L294.7 260.2 L296.8 264.2 L297.7 268.7 L298.5 273.4 L300.2 277.5 L303.3 281.0" stroke="#120e0b" stroke-width="1.6" opacity="0.96"/>
<path d="M276.3 230.5 L279.6 233.8 L282.4 237.3 L284.1 241.5 L284.9 246.1 L286.0 250.5 L288.2 254.3 L291.3 257.8 L294.2 261.4 L295.8 265.6 L296.6 270.2 L297.6 274.7 L299.7 278.6 L302.8 282.1 L305.9 285.5" stroke="#18120d" stroke-width="2.9" opacity="0.71"/>
<path d="M279.2 234.2 L282.3 237.7 L284.2 241.7 L285.0 246.3 L285.9 250.8 L287.8 254.8 L290.9 258.4 L293.9 261.9 L295.8 265.9 L296.7 270.5 L297.5 275.1 L299.3 279.2 L302.3 282.7" stroke="#080706" stroke-width="2.8" opacity="0.92"/>
<path d="M397.6 369.4 L396.9 374.9 L395.2 380.3 L394.8 385.1" stroke="#0b0908" stroke-width="2.3" opacity="0.87"/>
<path d="M395.5 370.1 L395.1 375.6 L393.9 380.9" stroke="#18120d" stroke-width="2.3" opacity="0.97"/>
<path d="M389.1 355.2 L391.4 360.2 L394.4 365.1 L395.3 370.3 L394.0 375.8 L392.8 381.1 L393.6 385.9" stroke="#120e0b" stroke-width="2.3" opacity="0.96"/>
<path d="M334.4 295.8 L336.3 300.2 L337.0 304.9 L337.4 309.7 L338.2 314.2 L339.5 318.5 L340.7 322.9 L340.9 327.4 L339.9 331.9 L338.8 336.3 L338.2 340.6 L338.4 345.0 L338.3 349.4 L337.3 353.6 L335.6 357.7 L334.3 362.0 L334.8 366.5 L336.7 370.8 L338.8 375.0" stroke="#080706" stroke-width="2.1" opacity="0.88"/>
<path d="M337.0 304.9 L337.4 309.7 L338.1 314.2 L339.5 318.5 L340.7 323.0 L340.8 327.5 L339.9 331.9 L338.7 336.3 L338.2 340.6 L338.3 345.0 L338.3 349.4 L337.3 353.7 L335.5 357.7 L334.3 362.0 L334.7 366.5" stroke="#080706" stroke-width="1.7" opacity="0.91"/>
<path d="M336.5 293.1 L338.4 297.5 L339.0 302.3 L339.3 307.2 L340.2 311.7 L341.8 316.0 L343.3 320.5 L343.6 325.0 L342.6 329.5 L341.5 333.9 L341.1 338.3 L341.6 342.7 L341.9 347.2 L341.1 351.4 L339.3 355.6 L338.0 360.0 L338.6 364.5 L340.6 368.8 L342.8 373.1 L344.0 377.6" stroke="#18120d" stroke-width="2.6" opacity="0.91"/>
<path d="M281.5 212.8 L284.0 216.6 L285.1 221.8 L287.6 225.4 L292.5 227.0 L297.0 229.1" stroke="#120e0b" stroke-width="1.8" opacity="0.81"/>
<path d="M281.4 213.2 L283.7 217.2 L284.9 222.2 L287.7 225.6 L292.5 227.2 L296.7 229.6 L298.3 234.2 L298.9 239.5" stroke="#0b0908" stroke-width="2.7" opacity="0.88"/>
<path d="M276.8 212.4 L281.4 213.9 L283.5 218.0 L284.6 223.1 L287.3 226.4 L292.2 228.1 L296.4 230.5 L297.9 235.1 L298.4 240.5 L301.1 244.2" stroke="#18120d" stroke-width="2.4" opacity="0.75"/>
<path d="M339.2 354.0 L340.0 358.7 L343.3 362.9 L345.5 367.1 L344.8 372.1 L343.5 377.4 L344.9 381.9 L349.3 384.9 L353.4 387.3 L355.2 391.3 L355.4 396.5 L356.6 400.5 L360.1 402.8 L364.3 404.7 L366.4 407.7 L367.1 412.5 L369.0 417.2" stroke="#18120d" stroke-width="2.3" opacity="0.97"/>
<path d="M342.1 357.6 L345.5 361.8 L347.7 366.0 L346.9 371.0 L345.5 376.4 L346.9 381.0 L351.2 384.0 L355.4 386.5 L357.1 390.6 L357.1 395.8 L358.1 399.8 L361.6 402.2 L365.7 404.3 L367.7 407.3 L368.3 412.1 L370.2 416.9 L374.5 419.3" stroke="#0b0908" stroke-width="2.1" opacity="0.94"/>
<path d="M341.1 364.0 L342.8 368.3 L342.3 373.2 L341.6 378.3 L343.4 382.7 L347.4 385.7 L351.1 388.4 L352.9 392.4 L353.7 397.1 L355.4 400.8 L358.9 403.1 L362.6 405.3 L364.6 408.4 L365.7 413.0 L368.1 417.2 L372.4 419.4" stroke="#0b0908" stroke-width="2.6" opacity="0.87"/>
<path d="M304.1 194.8 L308.8 196.7 L314.3 197.7 L319.6 199.5 L323.4 203.2 L326.1 208.3 L328.7 213.1 L332.5 216.5 L337.5 219.1 L342.1 222.2 L344.9 226.7 L346.1 232.3 L347.3 237.7 L350.0 242.1 L354.2 245.8" stroke="#3a2c1e" stroke-width="1.6" opacity="0.72"/>
<path d="M290.9 185.7 L295.6 188.5 L299.6 192.5 L303.8 195.7 L308.7 197.1 L314.3 198.1 L319.3 200.3 L322.7 204.4 L325.2 209.6 L328.1 214.1 L332.3 217.0 L337.4 219.6 L341.7 223.0 L344.0 227.9 L345.0 233.5 L346.6 238.7 L349.8 242.7 L354.2 246.4" stroke="#463624" stroke-width="1.7" opacity="0.74"/>
<path d="M295.7 188.1 L299.7 192.3 L303.8 195.6 L308.7 196.9 L314.5 197.7 L319.6 199.7 L323.0 204.0 L325.3 209.4 L328.1 213.9 L332.4 216.8 L337.7 219.2 L342.1 222.5 L344.3 227.4 L345.1 233.3 L346.5 238.5" stroke="#5c4a32" stroke-width="1.5" opacity="0.63"/>
<path d="M295.5 188.7 L299.5 192.9 L303.7 195.9 L308.8 197.0 L314.5 197.8 L319.3 200.2 L322.6 204.6 L324.9 209.9 L327.9 214.3 L332.4 217.0 L337.7 219.4 L341.8 223.0 L343.8 228.0 L344.6 233.8 L346.3 238.8" stroke="#52402a" stroke-width="1.4" opacity="0.55"/>
<path d="M351.1 330.8 L350.8 335.2 L351.9 339.6 L353.3 344.2 L353.4 348.6 L352.3 353.2 L351.3 358.0 L352.0 362.8 L354.3 367.3 L356.9 371.6 L358.4 375.9 L358.8 380.6 L359.5 385.4 L361.6 389.4 L364.9 392.5" stroke="#1e1610" stroke-width="1.9" opacity="0.98"/>
<path d="M351.0 331.0 L350.5 335.4 L351.4 339.8 L352.7 344.4 L353.0 348.8 L352.1 353.3 L351.1 358.2 L351.5 363.0 L353.7 367.5 L356.3 371.8 L358.1 376.1 L358.7 380.7 L359.3 385.4" stroke="#080706" stroke-width="1.9" opacity="0.70"/>
<path d="M353.3 329.4 L352.7 333.9 L353.5 338.3 L355.0 342.9 L355.7 347.4 L355.0 351.9 L354.1 356.8 L354.2 361.7 L356.1 366.3 L358.8 370.6 L360.7 374.9 L361.4 379.5" stroke="#120e0b" stroke-width="1.6" opacity="0.91"/>
<path d="M385.7 368.9 L385.9 374.0 L385.7 379.2 L385.8 384.1 L386.7 388.6 L387.8 393.2 L388.6 397.8 L388.8 401.7 L389.2 405.8 L390.8 410.6 L393.9 414.7 L398.2 417.8" stroke="#1e1610" stroke-width="1.8" opacity="0.91"/>
<path d="M390.2 372.1 L389.7 377.4 L389.9 382.4 L390.9 387.0 L392.0 392.0 L392.2 396.8 L391.8 400.8 L391.7 405.2 L393.4 410.1 L396.7 414.1" stroke="#1e1610" stroke-width="1.8" opacity="0.85"/>
<path d="M390.1 387.4 L391.1 392.3 L391.4 397.0 L391.1 401.0 L391.1 405.4 L392.9 410.2" stroke="#0b0908" stroke-width="2.9" opacity="0.77"/>
<path d="M325.8 301.9 L327.5 306.3 L327.5 311.1 L327.2 316.0 L327.4 320.5 L328.6 324.6 L330.3 328.8 L331.5 333.4 L331.4 337.9 L329.8 342.2 L327.3 346.1 L324.7 349.9" stroke="#18120d" stroke-width="3.2" opacity="1.00"/>
<path d="M316.6 298.3 L320.5 301.0 L324.0 304.3 L325.9 308.5 L326.3 313.3 L325.9 318.1 L325.8 322.6 L326.5 326.8 L327.9 330.9 L329.0 335.5 L329.1 340.1 L327.7 344.4 L325.2 348.3 L322.4 352.0 L320.2 355.7 L318.9 359.8 L318.3 364.4" stroke="#080706" stroke-width="2.1" opacity="0.76"/>
<path d="M322.0 298.9 L325.4 302.3 L327.4 306.5 L327.7 311.3 L327.4 316.1 L327.3 320.7 L328.2 324.9 L329.7 329.0 L330.9 333.6 L331.0 338.1 L329.7 342.5 L327.4 346.5 L324.7 350.2 L322.7 354.0 L321.6 358.2" stroke="#18120d" stroke-width="2.0" opacity="0.99"/>
<path d="M379.5 332.9 L382.3 337.6 L384.5 342.5 L385.3 347.6 L384.5 353.0 L383.3 358.4 L382.8 363.7" stroke="#0b0908" stroke-width="3.3" opacity="0.73"/>
<path d="M380.0 332.6 L382.7 337.3 L385.0 342.1 L385.9 347.3 L385.4 352.6 L384.3 358.0" stroke="#080706" stroke-width="2.3" opacity="0.73"/>
<path d="M376.2 323.1 L377.8 327.9 L380.6 332.5 L383.6 337.1 L385.6 342.1 L385.7 347.4 L384.5 352.8 L383.1 358.2 L383.0 363.5 L384.7 368.5" stroke="#080706" stroke-width="2.8" opacity="0.71"/>
<path d="M323.0 325.8 L324.3 329.9 L325.9 334.2 L326.6 338.8 L325.7 343.2 L323.4 347.3 L320.6 351.0 L318.1 354.7 L316.5 358.7 L315.6 363.2 L314.7 367.7" stroke="#120e0b" stroke-width="3.4" opacity="0.73"/>
<path d="M322.4 326.6 L323.4 330.6 L324.9 334.8 L325.7 339.5 L325.1 344.0 L323.0 348.1 L320.0 351.8 L317.2 355.4 L315.3 359.2 L314.2 363.6" stroke="#18120d" stroke-width="2.1" opacity="0.87"/>
<path d="M321.8 327.4 L322.8 331.4 L324.2 335.7 L324.9 340.3 L324.1 344.8 L322.0 348.8 L319.0 352.6 L316.2 356.1 L314.3 360.0 L313.2 364.4 L312.3 369.0 L311.1 373.0 L309.6 376.3" stroke="#18120d" stroke-width="3.3" opacity="0.90"/>
<path d="M288.8 248.7 L289.7 253.3 L290.3 257.9 L291.6 262.3 L294.1 266.0 L297.4 269.4 L300.5 272.9 L302.5 276.9 L303.6 281.4 L304.4 286.1" stroke="#120e0b" stroke-width="2.8" opacity="0.92"/>
<path d="M288.8 248.4 L289.4 253.1 L290.2 257.7 L291.8 261.9 L294.7 265.5 L298.0 268.8 L300.9 272.4" stroke="#18120d" stroke-width="2.3" opacity="1.00"/>
<path d="M289.3 253.3 L290.0 257.9 L291.7 262.0 L294.7 265.6 L298.1 268.9 L300.9 272.5" stroke="#0b0908" stroke-width="1.5" opacity="0.72"/>
<path d="M337.6 334.2 L338.5 338.8 L336.7 343.0 L334.0 346.8 L333.0 351.0 L333.8 355.7 L333.6 360.0 L331.6 363.9" stroke="#18120d" stroke-width="2.4" opacity="0.79"/>
<path d="M338.7 341.8 L336.1 345.8 L334.7 349.8 L335.1 354.4 L335.4 358.8 L334.1 362.8 L332.7 367.4" stroke="#1e1610" stroke-width="2.1" opacity="0.76"/>
<path d="M336.5 343.3 L333.5 347.1 L332.5 351.2 L333.3 355.9 L333.2 360.2 L331.2 364.1 L329.7 368.7 L331.4 373.1" stroke="#1e1610" stroke-width="3.1" opacity="0.99"/>
<path d="M287.7 216.7 L291.1 219.6 L293.7 223.3 L296.1 227.3 L298.9 230.9 L302.4 234.1 L306.0 237.3 L308.8 241.0 L310.9 245.3 L312.9 249.7 L315.4 253.7 L318.6 257.4 L321.8 261.0 L324.4 265.1 L326.4 269.5 L328.4 273.9 L331.2 277.8" stroke="#1e1610" stroke-width="1.6" opacity="0.73"/>
<path d="M293.6 224.0 L295.8 228.0 L298.5 231.7 L302.0 234.9 L305.6 238.1 L308.5 241.8 L310.6 246.1 L312.4 250.5 L314.8 254.6 L318.0 258.2 L321.3 261.8 L323.9 265.8 L325.9 270.3" stroke="#080706" stroke-width="2.9" opacity="0.84"/>
<path d="M293.7 223.4 L296.1 227.3 L299.0 230.9 L302.4 234.1 L305.9 237.4 L308.7 241.2 L310.9 245.4 L312.9 249.7 L315.5 253.7 L318.6 257.4 L321.7 261.1 L324.2 265.2 L326.3 269.6 L328.5 273.9 L331.2 277.8 L334.4 281.4" stroke="#0b0908" stroke-width="3.2" opacity="0.95"/>
<path d="M328.5 304.6 L329.6 309.1 L329.3 314.0 L329.3 318.6 L330.8 322.8 L332.8 327.1 L333.2 331.6 L331.6 335.9 L329.2 340.0 L328.1 344.3 L328.4 348.8 L328.5 353.4 L326.7 357.4 L323.5 360.8 L320.9 364.6 L320.7 369.0 L322.6 373.1" stroke="#4e4636" stroke-width="1.9" opacity="0.73"/>
<path d="M328.4 311.2 L328.3 316.0 L327.8 320.7 L328.5 324.9 L330.3 329.2 L331.2 333.7 L330.0 338.1 L327.5 342.1 L325.5 346.1 L325.2 350.5 L325.4 355.2 L324.1 359.5 L321.1 362.9 L317.9 366.3 L316.9 370.7 L318.7 374.9" stroke="#44403a" stroke-width="1.0" opacity="0.73"/>
<path d="M325.4 300.2 L328.8 303.7 L330.9 307.9 L331.0 312.7 L330.4 317.5 L331.0 321.9 L332.9 326.1 L334.2 330.6 L333.4 335.0 L331.0 339.2 L329.1 343.3 L328.8 347.6 L329.3 352.3 L328.5 356.7 L325.9 360.3 L322.7 363.8 L321.6 368.2" stroke="#44403a" stroke-width="1.2" opacity="0.51"/>
<path d="M322.3 297.2 L325.7 300.4 L328.9 304.0 L330.3 308.4 L330.0 313.3 L329.8 318.0 L331.1 322.2 L333.2 326.5 L334.0 331.0 L332.5 335.4 L330.0 339.5 L328.6 343.6 L328.9 348.1 L329.3 352.8 L327.8 357.0 L324.6 360.4 L321.8 364.1 L321.4 368.5 L323.4 372.7 L325.6 376.6" stroke="#4e4636" stroke-width="1.7" opacity="0.61"/>
<path d="M326.8 207.9 L331.0 211.2 L334.1 215.6 L336.2 220.6 L338.2 225.6 L340.9 230.1 L344.6 234.0 L348.7 237.5 L352.5 241.5 L355.1 246.1 L356.3 251.4 L356.8 256.8 L357.6 262.2 L359.3 267.2 L362.2 271.7 L365.8 275.9 L369.0 280.2 L371.3 285.0 L372.4 290.2 L373.0 295.6" stroke="#0b0908" stroke-width="2.4" opacity="0.77"/>
<path d="M331.4 210.5 L334.4 214.9 L336.6 219.9 L338.7 224.8 L341.5 229.3 L345.3 233.1 L349.4 236.7 L353.0 240.7 L355.5 245.5 L356.7 250.7 L357.2 256.2 L358.1 261.5 L360.0 266.5 L363.0 270.9 L366.5 275.2 L369.6 279.5 L371.8 284.3 L372.9 289.6" stroke="#18120d" stroke-width="1.4" opacity="0.98"/>
<path d="M327.6 206.4 L331.9 209.6 L335.0 214.1 L337.1 219.2 L339.0 224.4 L341.6 228.9 L345.3 232.7 L349.6 236.2 L353.5 240.1 L356.2 244.8 L357.3 250.1 L357.7 255.6 L358.3 261.1 L360.0 266.1 L363.0 270.6 L366.7 274.7 L370.1 279.0 L372.5 283.7 L373.6 289.0 L374.1 294.5" stroke="#1e1610" stroke-width="2.8" opacity="0.95"/>
<path d="M303.2 267.6 L304.2 272.1 L305.7 276.6 L308.3 280.4 L311.7 283.5 L315.0 286.8 L317.3 290.7 L319.2 295.0 L321.3 299.0 L323.9 302.5 L326.7 306.2 L328.6 310.4 L329.2 315.0 L329.2 319.7 L329.5 324.1 L330.5 328.3 L331.3 332.8 L330.9 337.2 L329.2 341.5 L327.3 345.6 L326.0 349.7" stroke="#1e1610" stroke-width="1.7" opacity="0.85"/>
<path d="M310.5 285.1 L314.0 288.2 L316.7 291.8 L318.6 296.1 L320.4 300.2 L322.8 303.9 L325.5 307.5 L327.7 311.6 L328.6 316.1 L328.5 320.8 L328.5 325.2 L329.1 329.5 L329.8 333.9 L329.8 338.4 L328.3 342.7 L326.2 346.7" stroke="#120e0b" stroke-width="1.5" opacity="0.97"/>
<path d="M305.2 270.6 L306.8 275.0 L309.4 278.8 L312.7 282.1 L315.8 285.4 L318.3 289.3 L320.2 293.5 L322.4 297.5 L325.0 301.1 L327.6 304.9 L329.4 309.2 L330.1 313.8 L330.3 318.4 L330.7 322.8 L331.7 327.1 L332.4 331.5 L332.0 336.0" stroke="#080706" stroke-width="3.4" opacity="0.95"/>
<path d="M309.2 219.8 L311.3 224.6 L315.0 227.8 L320.0 230.0 L324.3 232.9 L326.4 237.6 L327.2 243.1 L329.0 247.9" stroke="#52402a" stroke-width="1.5" opacity="0.82"/>
<path d="M293.0 210.5 L298.2 211.2 L303.5 212.3 L306.9 215.9 L308.4 221.3 L310.2 226.2 L314.2 229.2 L319.5 231.1 L323.9 234.0 L325.6 239.0 L325.9 244.7 L327.8 249.5 L332.2 252.5" stroke="#3a2c1e" stroke-width="0.9" opacity="0.77"/>
<path d="M292.9 210.7 L297.8 211.8 L303.1 212.9 L306.9 216.1 L308.7 221.2 L310.3 226.3 L313.8 229.7 L318.9 231.7 L323.5 234.4 L325.7 239.1 L326.2 244.7" stroke="#4e4636" stroke-width="1.8" opacity="0.77"/>
<path d="M297.7 212.4 L302.7 213.8 L306.2 217.3 L308.0 222.3 L310.0 227.0 L313.7 230.3 L318.6 232.5 L322.8 235.5 L324.8 240.2" stroke="#463624" stroke-width="1.7" opacity="0.53"/>
<path d="M261.7 207.9 L265.3 210.8 L268.7 213.6 L272.4 215.7 L276.3 217.8 L279.5 220.7 L281.6 224.7 L283.3 228.8 L285.8 232.4 L289.3 235.4 L292.5 238.6 L294.6 242.6" stroke="#0b0908" stroke-width="1.8" opacity="0.82"/>
<path d="M261.8 209.2 L265.4 212.0 L268.7 214.9 L272.3 217.2 L276.0 219.4 L279.2 222.5 L281.2 226.4 L282.8 230.6 L285.2 234.3 L288.4 237.5 L291.6 240.7 L293.6 244.7" stroke="#120e0b" stroke-width="1.5" opacity="0.96"/>
<path d="M261.8 209.7 L265.4 212.7 L268.7 215.6 L272.2 217.8 L276.0 220.1 L279.0 223.2 L281.0 227.2 L282.5 231.5 L284.9 235.2 L288.1 238.3 L291.2 241.6 L293.2 245.7" stroke="#120e0b" stroke-width="2.7" opacity="0.96"/>
<path d="M342.4 285.3 L342.2 290.6 L342.4 295.7 L343.9 300.2 L346.7 304.3 L349.8 308.4 L351.9 312.9 L352.3 317.6" stroke="#18120d" stroke-width="1.9" opacity="0.82"/>
<path d="M335.6 272.5 L339.2 276.1 L341.5 280.5 L342.2 285.5 L342.1 290.8 L342.5 295.8 L344.0 300.3 L346.6 304.5 L349.5 308.7" stroke="#1e1610" stroke-width="3.3" opacity="0.95"/>
<path d="M341.8 280.3 L342.8 285.2 L342.7 290.4 L342.7 295.6 L343.9 300.2 L346.3 304.4 L349.2 308.6 L351.5 313.0" stroke="#1e1610" stroke-width="2.0" opacity="0.90"/>
<path d="M268.8 216.5 L273.2 217.9 L276.7 220.7 L278.6 224.8 L279.6 229.4 L281.3 233.5 L284.3 236.8 L288.1 239.7 L291.1 243.1 L292.7 247.4 L293.4 252.1 L294.7 256.6 L297.4 260.2" stroke="#080706" stroke-width="3.2" opacity="0.74"/>
<path d="M272.7 219.7 L276.6 222.2 L278.8 226.1 L279.7 230.7 L280.8 235.2 L283.2 238.9 L286.8 241.9 L290.3 245.1 L292.3 249.1" stroke="#080706" stroke-width="2.1" opacity="0.95"/>
<path d="M261.2 212.6 L264.8 215.3 L268.8 216.9 L273.0 218.6 L276.5 221.3 L278.5 225.3 L279.8 229.7 L281.4 233.9 L284.1 237.4 L287.6 240.4 L290.6 243.8 L292.4 248.0 L293.4 252.6 L294.6 257.1" stroke="#120e0b" stroke-width="2.8" opacity="0.91"/>
<path d="M309.0 367.7 L308.8 372.6 L309.7 376.7 L309.4 380.1 L308.3 384.6 L308.4 389.4 L311.1 393.2 L315.4 395.6 L318.9 397.6 L321.4 401.1 L323.9 405.5 L327.5 408.3 L332.3 408.9 L337.4 409.2" stroke="#1e1610" stroke-width="2.1" opacity="0.89"/>
<path d="M309.6 367.2 L309.8 372.2 L310.9 376.3 L310.4 379.7 L308.8 384.3 L308.8 389.2 L311.9 392.8 L316.5 395.0 L320.0 397.0 L322.1 400.9 L324.4 405.6 L328.0 408.3 L333.0 408.5" stroke="#1e1610" stroke-width="2.5" opacity="0.90"/>
<path d="M310.4 367.0 L310.7 372.0 L311.5 376.0 L310.7 379.4 L309.2 384.1 L309.5 388.9 L312.8 392.4 L317.3 394.6 L320.4 396.9 L322.4 401.0 L324.8 405.5 L328.6 407.9 L333.7 408.1 L338.7 408.4 L342.3 411.1 L344.7 415.7" stroke="#18120d" stroke-width="2.0" opacity="0.78"/>
<path d="M328.3 294.6 L330.7 298.4 L334.5 302.0 L337.9 305.9 L339.0 310.5 L337.9 315.6 L336.1 320.3 L335.8 324.5 L337.5 329.0 L339.8 333.6" stroke="#0b0908" stroke-width="1.9" opacity="0.97"/>
<path d="M332.1 296.6 L335.4 300.4 L338.6 304.3 L340.2 308.8 L339.7 313.8 L338.3 318.5 L337.8 322.9" stroke="#0b0908" stroke-width="1.8" opacity="0.75"/>
<path d="M335.2 300.5 L338.6 304.4 L340.3 308.8 L339.8 313.8 L338.3 318.5 L337.7 322.9 L338.8 327.3 L340.9 331.9" stroke="#120e0b" stroke-width="2.7" opacity="0.87"/>
<path d="M321.6 260.2 L323.7 264.6 L327.9 267.6 L331.7 270.8 L333.3 275.5 L334.1 280.5 L336.5 284.6 L340.2 288.3 L342.2 292.7 L342.1 297.8 L342.4 302.7 L344.9 306.9 L347.6 311.2 L347.6 315.9 L346.1 320.6 L346.2 325.2 L348.3 329.6" stroke="#120e0b" stroke-width="2.3" opacity="0.78"/>
<path d="M332.7 269.5 L334.4 274.1 L335.0 279.3 L337.2 283.5 L341.0 287.1 L343.3 291.4 L343.2 296.6 L343.3 301.6 L345.7 305.8 L348.6 310.0 L349.0 314.7 L347.3 319.5 L347.2 324.1 L349.4 328.5 L350.9 333.0" stroke="#120e0b" stroke-width="2.7" opacity="0.88"/>
<path d="M330.6 272.5 L332.5 277.0 L333.0 282.2 L335.0 286.4 L338.8 290.0 L341.3 294.2 L341.2 299.3 L341.0 304.3 L343.2 308.6 L346.2 312.7 L346.6 317.4 L344.7 322.1 L344.1 326.6 L346.2 331.1 L347.7 335.6" stroke="#080706" stroke-width="3.0" opacity="0.77"/>
<path d="M336.1 348.6 L333.7 352.5 L330.3 356.0 L328.5 360.1 L329.5 364.7 L331.9 368.8 L333.1 372.9 L332.6 377.8 L332.4 382.8 L334.5 387.0 L338.6 389.7 L342.4 391.9 L344.8 395.4 L346.3 400.0 L348.3 403.7 L351.7 405.9 L355.9 407.4 L359.1 409.8" stroke="#18120d" stroke-width="1.9" opacity="0.79"/>
<path d="M336.3 348.5 L334.1 352.4 L330.6 355.9 L328.5 360.0 L329.4 364.6 L332.0 368.7 L333.5 372.8 L333.1 377.6 L332.6 382.7 L334.4 387.0 L338.5 389.7 L342.6 391.8 L345.2 395.2 L346.6 399.8 L348.3 403.8 L351.6 406.1 L355.9 407.5 L359.3 409.7 L361.4 413.5" stroke="#080706" stroke-width="2.8" opacity="0.81"/>
<path d="M334.5 351.9 L331.1 355.4 L329.4 359.6 L330.5 364.2 L333.0 368.3 L334.1 372.4 L333.6 377.4 L333.3 382.4 L335.4 386.5 L339.5 389.2 L343.3 391.5 L345.7 395.1 L347.1 399.7 L349.0 403.5 L352.4 405.7 L356.6 407.2 L359.7 409.6 L361.6 413.6" stroke="#080706" stroke-width="2.2" opacity="0.86"/>
<path d="M324.5 295.3 L325.7 299.7 L327.0 304.0 L328.9 308.1 L331.2 312.2 L333.3 316.5 L334.2 321.0 L333.8 325.6 L332.5 329.9" stroke="#120e0b" stroke-width="3.0" opacity="0.80"/>
<path d="M319.9 287.4 L322.4 291.3 L324.1 295.7 L325.4 300.0 L326.9 304.2 L329.0 308.3 L331.3 312.4 L333.1 316.7 L333.9 321.2 L333.3 325.8 L332.1 330.1 L331.1 334.4 L331.0 338.9 L331.3 343.4 L331.2 347.9" stroke="#080706" stroke-width="1.8" opacity="0.90"/>
<path d="M322.7 291.0 L324.5 295.3 L325.7 299.8 L326.9 304.1 L328.7 308.2 L331.1 312.3 L333.2 316.6 L334.2 321.1 L333.8 325.6 L332.4 330.0 L331.2 334.3" stroke="#18120d" stroke-width="2.0" opacity="0.71"/>
<path d="M372.3 394.2 L372.5 398.3 L373.5 402.1 L375.7 405.5 L378.4 408.7 L381.1 412.3 L383.9 416.3 L387.3 420.1" stroke="#18120d" stroke-width="2.4" opacity="0.78"/>
<path d="M374.7 388.7 L374.7 393.3 L374.5 397.5 L375.3 401.5 L377.6 405.0 L380.4 408.0 L383.0 411.7 L385.7 415.9 L388.8 419.9" stroke="#080706" stroke-width="2.7" opacity="0.80"/>
<path d="M371.4 390.0 L371.7 394.4 L371.7 398.5 L372.8 402.4 L375.1 405.7 L378.0 408.7 L380.8 412.2 L383.5 416.4 L386.7 420.3" stroke="#1e1610" stroke-width="2.1" opacity="0.78"/>
<path d="M317.2 244.0 L320.0 248.1 L321.7 252.7 L323.3 257.5 L325.8 261.7 L329.3 265.2 L333.0 268.6 L335.9 272.5 L337.6 277.1 L338.6 282.0 L339.9 286.6 L342.1 291.0 L344.8 295.2 L347.1 299.5 L348.0 304.3 L347.9 309.2 L347.8 313.8" stroke="#52402a" stroke-width="1.0" opacity="0.55"/>
<path d="M318.1 242.7 L320.8 246.7 L322.5 251.4 L324.1 256.2 L326.6 260.4 L330.2 263.9 L333.9 267.3 L336.8 271.2 L338.5 275.9 L339.4 280.8 L340.7 285.5 L342.9 289.8 L345.8 294.0 L348.0 298.4 L349.0 303.2 L348.9 308.1 L348.8 312.8" stroke="#4e4636" stroke-width="0.9" opacity="0.83"/>
<path d="M313.6 240.4 L317.5 243.5 L320.5 247.4 L322.3 252.0 L323.7 256.9 L326.0 261.3 L329.4 264.9 L333.2 268.1 L336.4 271.9 L338.2 276.5 L339.1 281.4 L340.1 286.2 L342.1 290.6 L345.0 294.8 L347.5 299.1 L348.7 303.8 L348.6 308.7 L348.2 313.4" stroke="#463624" stroke-width="1.1" opacity="0.60"/>
<path d="M313.7 240.4 L317.6 243.5 L320.5 247.4 L322.2 252.1 L323.6 257.0 L325.9 261.4 L329.4 264.9 L333.3 268.1 L336.4 271.9 L338.2 276.5 L338.9 281.5 L340.0 286.3 L342.1 290.7 L345.0 294.8 L347.6 299.1 L348.7 303.8" stroke="#5c4a32" stroke-width="1.4" opacity="0.60"/>
<path d="M291.3 242.3 L292.7 246.7 L293.8 251.3 L295.3 255.6 L297.9 259.3 L301.2 262.7 L304.3 266.2 L306.5 270.2 L307.7 274.7 L308.8 279.4 L310.9 283.6 L314.1 286.9 L317.9 289.7 L321.5 292.8 L324.0 296.7 L325.3 301.2 L325.8 305.8 L326.8 310.2 L328.8 314.4" stroke="#120e0b" stroke-width="2.1" opacity="0.71"/>
<path d="M292.6 247.2 L293.5 251.9 L294.9 256.3 L297.4 260.0 L300.8 263.3 L304.1 266.7 L306.3 270.7 L307.4 275.3 L308.4 280.0 L310.3 284.2 L313.6 287.6 L317.5 290.3 L321.2 293.3 L323.8 297.1 L324.9 301.7 L325.3 306.4 L326.3 310.8" stroke="#0b0908" stroke-width="1.7" opacity="0.86"/>
<path d="M291.6 242.3 L292.8 246.8 L293.5 251.6 L294.8 256.0 L297.5 259.7 L301.1 262.9 L304.6 266.2 L306.8 270.2 L307.7 274.9 L308.5 279.7 L310.4 284.0 L313.7 287.3 L317.9 289.8 L321.7 292.7" stroke="#1e1610" stroke-width="2.2" opacity="0.80"/>
<path d="M282.4 217.9 L284.6 221.9 L287.9 224.7 L292.2 226.8 L296.7 228.9 L300.3 232.0 L302.5 236.2 L303.7 241.1 L304.8 246.0 L306.9 250.2 L310.2 253.5 L314.4 256.5 L318.3 259.7" stroke="#1e1610" stroke-width="2.9" opacity="0.93"/>
<path d="M269.9 204.3 L274.5 205.6 L278.0 208.5 L280.4 212.5 L282.5 216.7 L285.2 220.2 L288.9 222.7 L293.3 224.7 L297.4 227.1 L300.7 230.5 L302.7 234.9 L304.1 239.7 L305.7 244.3 L308.3 248.2 L311.9 251.4 L315.9 254.5 L319.4 257.9 L321.7 262.1 L323.1 266.8 L324.4 271.7" stroke="#18120d" stroke-width="1.6" opacity="0.81"/>
<path d="M280.0 214.7 L281.9 219.0 L284.4 222.6 L288.0 225.2 L292.3 227.3 L296.5 229.7 L299.6 233.2 L301.5 237.6 L302.6 242.5 L304.1 247.1 L306.5 251.0 L310.2 254.2 L314.2 257.3 L317.7 260.7 L320.0 264.8 L321.3 269.5 L322.5 274.5" stroke="#1e1610" stroke-width="3.0" opacity="0.84"/>
<path d="M337.4 370.2 L338.8 374.7 L341.0 378.9 L343.3 382.8 L345.4 386.6 L347.2 390.5" stroke="#0b0908" stroke-width="1.6" opacity="0.99"/>
<path d="M337.0 353.3 L336.7 357.6 L336.1 361.8 L335.7 366.2 L336.1 370.9 L337.5 375.3 L339.7 379.5 L341.9 383.4 L343.9 387.2 L345.9 391.1 L348.1 394.9 L350.9 398.1" stroke="#1e1610" stroke-width="2.7" opacity="0.98"/>
<path d="M335.0 366.7 L335.1 371.4 L336.2 375.9 L338.2 380.2 L340.8 384.0 L343.1 387.5 L345.2 391.3" stroke="#18120d" stroke-width="3.4" opacity="0.74"/>
<path d="M298.2 252.1 L301.1 255.7 L303.4 259.6 L305.1 264.0 L306.5 268.4 L308.1 272.8 L310.5 276.8 L313.6 280.3 L317.1 283.5 L320.2 286.8 L322.8 290.7" stroke="#0b0908" stroke-width="2.8" opacity="0.83"/>
<path d="M303.4 259.9 L305.3 264.1 L306.7 268.5 L308.1 273.1 L310.1 277.3 L312.9 280.9 L316.4 284.1 L319.9 287.3 L322.8 290.8 L325.0 295.0 L326.3 299.4" stroke="#0b0908" stroke-width="1.7" opacity="0.82"/>
<path d="M301.2 255.1 L303.9 258.8 L305.9 263.0 L307.4 267.4 L308.9 271.8 L311.0 276.0 L313.8 279.7 L317.2 283.0 L320.6 286.2 L323.5 289.8 L325.6 293.9 L327.1 298.3" stroke="#080706" stroke-width="2.2" opacity="0.96"/>
<path d="M377.7 316.9 L379.0 321.8 L381.3 326.4 L383.8 331.2 L385.5 336.1 L385.7 341.4 L385.1 346.8 L384.8 352.0 L385.6 357.2 L387.5 362.2" stroke="#080706" stroke-width="1.4" opacity="0.76"/>
<path d="M373.8 319.4 L375.3 324.1 L377.8 328.7 L380.1 333.4 L381.3 338.4 L381.1 343.6 L380.4 348.9" stroke="#1e1610" stroke-width="3.2" opacity="0.85"/>
<path d="M376.4 312.2 L376.9 317.3 L378.4 322.2 L380.8 326.8 L383.3 331.5 L384.8 336.5 L384.9 341.8 L384.2 347.1 L383.9 352.4 L384.9 357.5 L386.9 362.5 L389.0 367.4" stroke="#120e0b" stroke-width="2.8" opacity="0.74"/>
<path d="M340.2 406.4 L343.9 408.4 L347.8 410.3 L351.3 412.6 L354.5 415.6 L357.5 419.0 L360.9 422.2 L364.7 424.5" stroke="#1e1610" stroke-width="2.8" opacity="0.73"/>
<path d="M336.1 399.5 L339.0 402.8 L342.2 405.6 L345.7 407.7 L349.4 409.7 L352.8 412.2 L355.8 415.3 L358.9 418.7 L362.3 421.8" stroke="#0b0908" stroke-width="2.6" opacity="0.90"/>
<path d="M329.3 393.7 L332.3 396.6 L335.2 399.8 L338.1 403.1 L341.3 406.0 L344.8 408.1 L348.6 410.1 L352.1 412.4 L355.2 415.4 L358.3 418.8" stroke="#1e1610" stroke-width="1.9" opacity="0.72"/>
<path d="M301.6 260.5 L304.4 264.1 L307.7 267.6 L310.2 271.4 L311.7 275.9 L313.2 280.4 L316.0 284.1 L319.7 287.1 L323.2 290.3 L325.4 294.4 L326.4 299.0 L327.6 303.3 L329.9 307.4" stroke="#3a2c1e" stroke-width="1.3" opacity="0.66"/>
<path d="M298.1 253.1 L299.4 257.6 L300.8 262.0 L303.4 265.8 L306.5 269.3 L309.2 273.0 L310.8 277.4 L312.3 281.8 L314.9 285.7 L318.5 288.7 L322.0 291.8 L324.5 295.7 L325.6 300.3 L326.7 304.6 L328.7 308.8 L331.1 312.9 L332.6 317.2 L332.5 321.9" stroke="#44403a" stroke-width="1.4" opacity="0.61"/>
<path d="M308.6 266.3 L311.1 270.2 L312.4 274.7 L313.9 279.3 L316.7 283.0 L320.6 285.9 L324.1 289.1 L326.2 293.3 L327.1 297.9 L328.3 302.3 L330.7 306.3" stroke="#52402a" stroke-width="1.8" opacity="0.83"/>
<path d="M298.6 258.4 L300.5 262.5 L303.5 266.0 L306.7 269.6 L308.7 273.6 L309.9 278.2 L311.7 282.5 L314.8 286.0 L318.7 288.8 L321.8 292.2 L323.7 296.5 L324.8 301.0 L326.4 305.1 L328.9 309.0 L331.1 313.2 L331.9 317.7 L331.5 322.4" stroke="#4e4636" stroke-width="0.9" opacity="0.84"/>
<path d="M339.9 401.7 L344.3 403.1 L347.2 406.2" stroke="#1e1610" stroke-width="2.3" opacity="0.90"/>
<path d="M332.2 392.8 L334.1 397.1 L337.9 399.6 L342.5 400.7 L346.7 402.4 L349.4 405.6 L350.8 409.9 L352.7 413.9 L356.3 416.4" stroke="#1e1610" stroke-width="2.4" opacity="0.82"/>
<path d="M337.5 399.9 L342.2 401.1 L346.6 402.4 L349.4 405.4 L350.9 409.7" stroke="#18120d" stroke-width="2.6" opacity="0.73"/>
<path d="M317.6 265.4 L320.7 269.1 L324.6 272.3 L328.4 275.4 L331.4 279.1 L333.4 283.6 L334.3 288.4 L334.9 293.2 L336.0 297.8 L338.1 302.1" stroke="#52402a" stroke-width="1.5" opacity="0.66"/>
<path d="M312.4 252.0 L313.8 256.7 L315.4 261.2 L317.8 265.3 L321.2 268.9 L324.9 272.1 L328.4 275.5 L331.0 279.5 L332.7 284.0 L333.7 288.8 L334.7 293.4 L336.4 297.8 L338.7 302.0 L341.3 306.2 L343.2 310.6 L343.9 315.3" stroke="#463624" stroke-width="1.4" opacity="0.85"/>
<path d="M318.3 264.4 L321.5 268.2 L325.2 271.4 L328.9 274.6 L331.8 278.4 L333.8 282.9 L334.8 287.7 L335.6 292.4 L336.8 297.0 L338.9 301.3 L341.5 305.5 L343.8 309.8 L344.9 314.4 L344.6 319.1" stroke="#32281c" stroke-width="1.0" opacity="0.81"/>
<path d="M314.7 248.1 L316.2 252.8 L317.8 257.5 L320.2 261.7 L323.6 265.3 L327.3 268.5 L330.8 272.0 L333.5 276.0 L335.2 280.6 L336.2 285.4 L337.2 290.1 L338.7 294.6 L341.1 298.9 L343.7 303.1" stroke="#463624" stroke-width="1.7" opacity="0.85"/>
<path d="M333.7 354.0 L333.4 358.5 L334.1 362.8 L335.2 367.0 L336.1 371.3 L336.5 376.0 L336.9 380.7 L338.2 385.2 L340.7 389.0 L344.1 391.9 L347.8 394.4 L350.9 397.3 L353.2 400.8 L354.8 404.6" stroke="#18120d" stroke-width="3.2" opacity="0.75"/>
<path d="M339.0 360.4 L340.0 364.6 L340.6 369.1 L340.8 373.9 L341.1 378.7 L342.5 383.2 L345.1 386.9 L348.5 389.9 L352.0 392.7 L354.8 395.9 L356.6 399.7 L357.7 403.6" stroke="#18120d" stroke-width="3.0" opacity="1.00"/>
<path d="M333.2 358.5 L334.0 362.9 L335.3 367.0 L336.2 371.3 L336.5 376.0 L336.8 380.8 L337.9 385.3 L340.5 389.1 L344.0 391.9 L347.8 394.4 L351.0 397.2 L353.2 400.8 L354.7 404.6 L356.2 408.3 L358.7 411.6 L362.3 414.0 L366.5 416.0 L370.7 418.2" stroke="#080706" stroke-width="2.7" opacity="0.78"/>
<path d="M375.1 351.0 L377.8 355.7 L381.5 360.4 L381.7 365.4 L379.6 370.9 L379.8 376.1 L383.7 380.1 L387.4 384.3 L386.8 389.4 L383.4 393.9 L382.6 398.4 L385.9 402.5 L389.2 405.2 L390.4 409.8 L391.8 415.5" stroke="#52402a" stroke-width="1.7" opacity="0.83"/>
<path d="M376.0 356.5 L379.4 361.1 L380.6 366.0 L379.1 371.3 L378.9 376.6 L381.9 380.8 L385.7 384.9 L386.0 389.7 L383.2 394.3 L381.8 398.7 L384.4 402.9 L388.0 405.7 L390.0 409.7 L391.6 415.2" stroke="#44403a" stroke-width="0.9" opacity="0.55"/>
<path d="M382.7 359.8 L382.8 364.9 L380.7 370.4 L381.1 375.5 L384.9 379.6 L388.4 384.0 L387.6 389.1 L384.3 393.5 L383.6 398.1 L386.8 402.2 L389.9 405.1 L391.0 409.7 L392.5 415.3" stroke="#32281c" stroke-width="1.4" opacity="0.58"/>
<path d="M382.4 360.0 L382.5 365.0 L380.3 370.6 L380.5 375.8 L384.6 379.8 L388.2 384.1 L387.4 389.2 L383.9 393.6 L383.1 398.2 L386.5 402.3 L389.8 405.0 L390.8 409.7" stroke="#4e4636" stroke-width="1.3" opacity="0.81"/>
<path d="M356.7 326.8 L356.4 331.3 L357.1 335.8 L358.5 340.4 L359.7 344.9 L360.2 349.5 L359.8 354.3 L359.4 359.3 L359.6 364.3" stroke="#18120d" stroke-width="1.9" opacity="0.78"/>
<path d="M354.0 325.0 L353.0 329.7 L352.2 334.2 L352.3 338.6 L353.4 343.2 L354.7 347.7 L355.3 352.2 L355.1 356.8" stroke="#120e0b" stroke-width="2.1" opacity="0.90"/>
<path d="M357.0 327.0 L356.2 331.6 L356.2 336.1 L357.3 340.6 L358.7 345.2 L359.8 349.7 L360.0 354.4 L359.6 359.4" stroke="#18120d" stroke-width="3.1" opacity="0.75"/>
<path d="M297.1 224.4 L300.5 227.6 L304.4 230.5 L307.9 233.8 L310.6 237.7 L312.7 242.1 L314.7 246.5 L317.4 250.4 L320.8 254.0 L324.1 257.6 L326.8 261.6 L328.8 266.1 L330.7 270.7 L333.1 274.8 L336.1 278.6 L339.2 282.5 L341.3 286.8 L342.3 291.6" stroke="#32281c" stroke-width="1.2" opacity="0.57"/>
<path d="M289.2 212.3 L292.2 215.8 L294.7 219.8 L297.4 223.5 L300.9 226.5 L305.0 229.3 L308.7 232.4 L311.4 236.4 L313.3 241.0 L315.2 245.4 L318.0 249.3 L321.6 252.8 L325.2 256.3 L327.8 260.3 L329.6 264.9 L331.3 269.7 L333.6 273.8" stroke="#463624" stroke-width="1.2" opacity="0.55"/>
<path d="M296.4 226.2 L299.5 229.6 L303.2 232.6 L306.9 235.7 L309.8 239.4 L311.9 243.8 L313.7 248.3 L316.1 252.4 L319.3 256.1 L322.8 259.6 L325.7 263.4 L327.9 267.8 L329.6 272.4 L331.7 276.7 L334.6 280.5 L337.7 284.2 L340.2 288.4 L341.4 293.2" stroke="#32281c" stroke-width="1.5" opacity="0.76"/>
<path d="M294.3 221.1 L296.9 224.9 L300.1 228.2 L304.1 231.0 L307.8 234.1 L310.6 238.0 L312.6 242.5 L314.4 247.0 L316.9 251.0 L320.3 254.6 L323.9 258.0 L326.7 261.9 L328.7 266.4 L330.4 271.1 L332.6 275.4 L335.6 279.1" stroke="#52402a" stroke-width="1.5" opacity="0.65"/>
<path d="M380.9 314.3 L384.2 318.7 L388.5 323.0 L389.6 328.2 L387.9 334.0 L387.6 339.4 L390.6 344.2 L393.7 349.2" stroke="#080706" stroke-width="2.7" opacity="0.87"/>
<path d="M377.4 299.3 L379.4 304.2 L379.1 309.9 L379.8 315.2 L383.2 319.5 L386.6 324.0 L387.2 329.3" stroke="#1e1610" stroke-width="1.6" opacity="0.71"/>
<path d="M378.7 315.9 L381.5 320.4 L385.6 324.7 L386.9 329.7" stroke="#0b0908" stroke-width="2.9" opacity="0.74"/>
<path d="M338.5 288.7 L340.1 293.2 L343.1 297.2 L345.5 301.5 L346.0 306.4 L345.4 311.3 L345.9 315.8 L347.8 320.2" stroke="#18120d" stroke-width="1.6" opacity="0.91"/>
<path d="M338.6 282.8 L339.1 287.8 L340.9 292.2 L344.0 296.3 L346.3 300.6 L346.6 305.5 L346.1 310.4 L346.9 314.9 L348.9 319.3 L350.2 323.8 L349.6 328.4" stroke="#18120d" stroke-width="2.5" opacity="0.93"/>
<path d="M339.6 287.1 L341.2 291.6 L344.3 295.7 L346.8 300.0 L347.3 304.9 L346.7 309.8 L347.3 314.3 L349.4 318.7" stroke="#0b0908" stroke-width="2.7" opacity="0.91"/>
<path d="M311.6 225.3 L316.5 227.4 L319.7 231.2 L321.0 236.5 L322.4 241.5 L325.7 245.2 L330.4 248.1" stroke="#463624" stroke-width="0.9" opacity="0.87"/>
<path d="M307.9 221.1 L312.7 223.2 L317.7 225.4 L320.8 229.3 L322.1 234.6 L323.6 239.6 L327.1 243.2 L331.9 246.0 L335.6 249.6" stroke="#463624" stroke-width="0.8" opacity="0.52"/>
<path d="M303.9 219.3 L306.6 223.4 L311.4 225.5 L316.7 227.4 L320.0 231.1 L321.0 236.6 L322.0 241.8 L325.3 245.5 L330.4 248.2 L334.5 251.4 L336.0 256.4" stroke="#463624" stroke-width="1.8" opacity="0.84"/>
<path d="M308.5 219.8 L313.4 221.9 L318.4 224.0 L321.6 227.8 L323.0 233.2 L324.4 238.2" stroke="#4e4636" stroke-width="1.6" opacity="0.81"/>
<path d="M369.2 334.5 L368.4 339.4 L367.9 344.4 L368.3 349.4 L369.9 354.2 L372.0 358.9 L373.9 363.7 L374.8 368.5 L374.9 373.4 L375.2 378.4 L376.1 383.1 L378.0 387.3 L380.2 391.4" stroke="#080706" stroke-width="2.7" opacity="0.88"/>
<path d="M367.5 339.9 L366.9 344.9 L367.3 349.8 L369.0 354.6 L371.2 359.4 L373.0 364.1 L373.8 368.9 L374.0 373.8 L374.3 378.8 L375.3 383.5 L377.3 387.6 L379.5 391.6 L381.0 395.9 L381.4 399.9" stroke="#080706" stroke-width="1.7" opacity="0.95"/>
<path d="M367.1 325.2 L368.6 329.8 L368.8 334.6 L368.2 339.5 L367.7 344.5 L368.1 349.5 L369.6 354.3 L371.6 359.1 L373.4 363.8 L374.4 368.6 L374.7 373.5 L375.0 378.5 L376.0 383.2 L377.8 387.4 L379.8 391.5 L381.3 395.7 L381.7 399.8 L381.7 403.7" stroke="#1e1610" stroke-width="1.6" opacity="0.71"/>
<path d="M362.5 347.1 L363.8 351.9 L366.2 356.5 L367.9 361.2 L367.8 366.2 L367.3 371.4 L368.5 376.1 L371.4 380.1 L374.5 383.9 L375.9 388.3" stroke="#080706" stroke-width="2.6" opacity="0.98"/>
<path d="M365.0 345.9 L366.1 350.7 L368.3 355.4 L369.9 360.2 L370.1 365.2 L369.7 370.3 L370.7 375.1 L373.3 379.3 L376.2 383.2 L377.7 387.6 L377.6 392.3" stroke="#120e0b" stroke-width="1.6" opacity="0.95"/>
<path d="M364.7 337.2 L363.9 342.0 L363.1 346.9 L363.9 351.8 L366.0 356.4 L368.0 361.1 L368.4 366.1 L368.0 371.1 L368.7 376.0 L371.3 380.1 L374.4 383.9 L376.3 388.2 L376.2 392.8" stroke="#120e0b" stroke-width="1.8" opacity="0.99"/>
<path d="M315.9 217.2 L320.3 219.9 L323.2 224.2 L325.2 229.0 L328.3 232.9 L332.6 236.1 L335.9 240.0 L337.6 245.0 L339.3 249.9 L342.6 253.8" stroke="#5c4a32" stroke-width="1.7" opacity="0.79"/>
<path d="M310.9 215.4 L315.4 218.0 L320.0 220.5 L323.1 224.5 L325.0 229.4 L327.8 233.6 L331.9 236.9 L335.6 240.5 L337.5 245.4 L339.0 250.4 L342.0 254.5 L345.9 258.1 L348.5 262.5" stroke="#32281c" stroke-width="1.4" opacity="0.52"/>
<path d="M321.5 217.6 L324.6 221.7 L326.8 226.5 L329.8 230.5 L333.9 233.9 L337.4 237.7 L339.3 242.6 L341.0 247.5 L344.1 251.6 L347.8 255.4 L350.2 260.0" stroke="#4e4636" stroke-width="1.8" opacity="0.87"/>
<path d="M316.3 216.2 L321.0 218.6 L324.2 222.6 L326.2 227.5 L328.9 231.7 L333.1 235.0 L336.8 238.6 L338.8 243.5 L340.3 248.6" stroke="#5c4a32" stroke-width="1.2" opacity="0.64"/>
<path d="M313.3 382.5 L314.9 386.5 L315.0 391.2 L315.8 396.0 L319.0 399.2 L323.7 400.4 L328.2 401.5 L331.6 404.3 L334.3 408.4 L337.4 411.8 L341.7 413.3 L346.5 414.0" stroke="#0b0908" stroke-width="3.1" opacity="0.88"/>
<path d="M320.8 398.6 L325.5 399.8 L330.2 400.7 L333.7 403.3 L336.2 407.6 L338.9 411.4 L342.9 413.2 L347.8 413.7 L352.2 415.1 L355.3 418.6 L357.6 423.1 L360.8 426.4" stroke="#0b0908" stroke-width="1.8" opacity="0.70"/>
<path d="M315.1 386.4 L315.0 391.3 L315.6 396.1 L318.9 399.3 L323.8 400.4 L328.3 401.3 L331.7 404.3 L334.3 408.5 L337.3 412.0 L341.6 413.4 L346.6 413.8" stroke="#080706" stroke-width="2.5" opacity="0.78"/>
<path d="M374.8 368.5 L374.6 373.5 L374.6 378.6 L375.4 383.4 L377.3 387.5 L379.7 391.5" stroke="#1e1610" stroke-width="2.0" opacity="0.71"/>
<path d="M372.0 359.4 L373.1 364.2 L373.1 369.1 L372.8 374.2 L373.1 379.3 L374.5 383.8 L377.0 387.7 L379.7 391.7 L381.3 395.9 L381.5 400.0" stroke="#1e1610" stroke-width="3.2" opacity="0.73"/>
<path d="M368.8 349.2 L371.4 353.8 L373.6 358.6 L374.8 363.4 L374.7 368.4 L374.2 373.6 L374.4 378.6 L375.8 383.2 L378.3 387.2 L381.0 391.2" stroke="#1e1610" stroke-width="1.9" opacity="0.83"/>
<path d="M334.3 398.9 L337.4 402.0 L339.8 406.0 L342.1 409.9 L345.0 413.0 L348.9 415.0 L353.5 416.1 L358.1 417.3" stroke="#18120d" stroke-width="2.5" opacity="0.82"/>
<path d="M326.3 395.3 L330.6 396.8 L334.4 398.8 L337.5 402.0 L339.8 406.1 L342.1 410.0 L345.1 413.0 L349.1 414.8" stroke="#080706" stroke-width="3.0" opacity="0.72"/>
<path d="M338.1 406.5 L340.6 410.4 L343.6 413.5" stroke="#120e0b" stroke-width="1.6" opacity="0.70"/>
<path d="M326.9 226.3 L329.9 230.3 L333.4 234.1 L337.0 237.8 L340.4 241.7 L343.0 246.1 L344.9 251.0" stroke="#0b0908" stroke-width="2.1" opacity="0.88"/>
<path d="M331.5 236.9 L335.2 240.6 L338.6 244.4 L341.3 248.7 L343.2 253.5 L344.7 258.4 L346.5 263.1 L348.9 267.6 L351.7 271.9 L354.3 276.3" stroke="#120e0b" stroke-width="2.7" opacity="0.98"/>
<path d="M331.2 237.4 L334.9 241.1 L338.2 245.0 L340.8 249.3 L342.7 254.1 L344.3 259.0" stroke="#1e1610" stroke-width="2.4" opacity="0.79"/>
<path d="M361.6 322.7 L364.1 327.0 L366.2 331.5 L366.2 336.3 L364.7 341.2 L364.0 346.2 L365.5 350.9 L368.3 355.5 L370.1 360.2 L369.9 365.3 L369.0 370.5 L369.8 375.4 L372.8 379.5 L376.2 383.2 L378.0 387.6 L377.5 392.3 L376.4 396.6 L376.8 400.8 L379.5 404.4" stroke="#1e1610" stroke-width="2.4" opacity="0.87"/>
<path d="M367.5 339.4 L367.0 344.5 L369.2 349.2 L372.3 353.7 L373.8 358.6 L372.9 363.8 L371.7 369.1 L372.8 374.0 L376.2 378.0 L379.7 381.9 L380.9 386.5 L379.7 391.4" stroke="#1e1610" stroke-width="2.3" opacity="0.84"/>
<path d="M365.2 326.3 L367.8 330.7 L367.9 335.5 L366.0 340.5 L364.9 345.6 L366.5 350.3 L369.8 354.8 L371.9 359.5 L371.5 364.7 L370.1 370.0 L370.6 375.0 L373.8 379.0 L377.7 382.6 L379.6 387.0 L378.7 391.9 L376.9 396.3 L377.2 400.6" stroke="#080706" stroke-width="2.6" opacity="0.73"/>
<path d="M320.9 262.6 L322.4 267.3 L324.2 271.9 L327.0 275.7 L330.6 279.0 L334.1 282.5 L336.6 286.6 L337.6 291.4 L337.8 296.4 L338.6 301.1 L340.6 305.5 L343.2 309.7 L345.0 314.1 L345.2 318.7 L344.2 323.3 L343.1 327.9" stroke="#1e1610" stroke-width="2.4" opacity="0.85"/>
<path d="M318.5 258.7 L320.6 263.0 L322.2 267.7 L324.0 272.2 L326.7 276.1 L330.3 279.4 L333.8 282.8 L336.3 287.0 L337.3 291.8 L337.6 296.7 L338.4 301.5 L340.3 305.8 L342.9 310.0 L344.7 314.4 L344.9 319.1 L343.9 323.7 L342.7 328.2" stroke="#18120d" stroke-width="2.0" opacity="0.72"/>
<path d="M325.6 270.1 L327.9 274.2 L331.2 277.7 L334.8 281.2 L337.7 285.1 L339.1 289.8 L339.4 294.8 L339.9 299.7 L341.4 304.2 L343.9 308.4 L346.0 312.7 L346.8 317.3 L346.2 321.9" stroke="#0b0908" stroke-width="2.6" opacity="0.82"/>
<path d="M313.9 230.2 L316.1 234.6 L319.3 238.2 L323.3 241.3 L327.5 244.5 L331.1 248.1 L333.5 252.4" stroke="#7c6238" stroke-width="1.0" opacity="0.73"/>
<path d="M312.3 233.2 L314.4 237.6 L317.4 241.3 L321.3 244.6 L325.3 247.8 L328.8 251.4 L331.3 255.6" stroke="#5c4a32" stroke-width="1.1" opacity="0.48"/>
<path d="M312.3 224.6 L313.9 229.7 L316.1 234.2 L319.5 237.6 L323.9 240.4 L328.5 243.4 L332.1 246.9 L334.3 251.4 L335.4 256.7 L336.2 262.0 L337.7 266.7 L340.7 270.6" stroke="#4e4636" stroke-width="1.0" opacity="0.64"/>
<path d="M319.3 237.8 L323.2 240.9 L327.7 243.9 L331.7 247.3 L334.4 251.4 L335.9 256.4 L336.7 261.8" stroke="#745a34" stroke-width="1.3" opacity="0.52"/>
<path d="M319.0 238.8 L323.0 241.9 L327.1 245.2 L330.5 248.9 L332.7 253.3 L334.2 258.3 L335.5 263.3 L337.3 267.8" stroke="#9a7e4c" stroke-width="0.9" opacity="0.60"/>
<path d="M293.8 233.4 L298.2 235.9 L301.6 239.2 L303.4 243.5 L304.2 248.6 L305.1 253.4 L307.2 257.5 L310.8 260.8 L315.1 263.8 L318.8 267.0 L321.1 271.0 L322.2 275.9" stroke="#4e4636" stroke-width="0.9" opacity="0.83"/>
<path d="M304.3 248.5 L305.2 253.5 L307.1 257.7 L310.6 261.0 L314.8 264.0 L318.6 267.1 L321.1 271.0" stroke="#44403a" stroke-width="1.1" opacity="0.71"/>
<path d="M293.5 233.9 L297.8 236.4 L301.2 239.7 L303.2 243.9 L304.1 248.8 L305.1 253.7 L307.2 257.8 L310.6 261.2 L314.7 264.3 L318.3 267.5 L320.7 271.4 L322.1 276.2 L323.2 281.2" stroke="#32281c" stroke-width="2.0" opacity="0.78"/>
<path d="M303.3 243.3 L304.4 248.1 L305.7 252.8 L307.9 256.8 L311.4 260.2 L315.3 263.3 L318.7 266.7 L321.0 270.8" stroke="#3a2c1e" stroke-width="1.7" opacity="0.53"/>
<path d="M282.2 205.0 L285.6 208.0 L288.7 211.5 L291.9 214.9 L295.2 217.9 L299.0 220.6 L302.9 223.3 L306.6 226.4 L309.9 230.0 L312.5 234.0 L314.8 238.4 L317.0 242.7 L319.6 246.8 L322.7 250.6 L326.1 254.2 L329.4 257.8 L332.3 261.8 L334.5 266.2" stroke="#1e1610" stroke-width="2.0" opacity="0.76"/>
<path d="M282.6 203.0 L286.0 206.3 L289.1 209.9 L292.3 213.2 L295.9 215.9 L300.0 218.3 L304.2 220.8 L308.0 223.8 L311.1 227.6 L313.6 231.8 L315.8 236.3 L318.1 240.6 L320.9 244.5 L324.3 248.2 L328.0 251.7" stroke="#120e0b" stroke-width="3.1" opacity="0.79"/>
<path d="M288.4 212.0 L291.6 215.3 L295.2 217.9 L299.3 220.4 L303.3 223.0 L306.9 226.3 L309.8 230.1 L312.1 234.4 L314.2 238.8 L316.6 243.0 L319.5 246.8" stroke="#0b0908" stroke-width="2.5" opacity="0.73"/>
<path d="M368.0 312.5 L369.6 317.1 L371.6 321.7 L373.4 326.3 L374.4 331.1 L374.6 336.1 L374.6 341.2 L374.9 346.2 L375.9 351.2 L377.5 356.1 L379.0 361.1 L380.0 366.0 L380.4 370.9 L380.9 375.9" stroke="#080706" stroke-width="2.5" opacity="0.77"/>
<path d="M374.9 330.8 L374.9 335.8 L374.9 340.9 L375.5 345.9 L376.8 350.9 L378.5 355.8 L379.8 360.7 L380.4 365.7 L380.7 370.8" stroke="#120e0b" stroke-width="3.3" opacity="0.83"/>
<path d="M370.4 316.5 L372.6 321.0 L374.5 325.7 L375.4 330.6 L375.5 335.6 L375.4 340.7 L375.8 345.8 L377.0 350.7 L378.7 355.6 L380.2 360.6" stroke="#080706" stroke-width="2.6" opacity="0.90"/>
<path d="M311.6 225.7 L315.9 228.4 L319.2 232.1 L321.3 236.7 L322.9 241.6 L324.9 246.2 L328.0 250.1 L332.0 253.4 L335.9 256.8 L338.8 260.9 L340.3 265.8" stroke="#120e0b" stroke-width="1.7" opacity="0.95"/>
<path d="M320.6 238.1 L322.1 243.0 L324.0 247.7 L326.9 251.7 L330.7 255.1" stroke="#18120d" stroke-width="3.1" opacity="0.91"/>
<path d="M310.5 227.6 L314.8 230.3 L318.2 233.8 L320.5 238.3 L322.1 243.1 L323.9 247.8 L326.8 251.9 L330.6 255.3" stroke="#18120d" stroke-width="2.4" opacity="0.92"/>
<path d="M342.4 397.6 L346.8 399.2 L350.8 401.1 L353.2 404.4 L354.3 408.6 L355.9 412.7 L359.4 415.5" stroke="#080706" stroke-width="3.4" opacity="0.84"/>
<path d="M334.2 382.3 L334.9 386.6 L335.4 391.5 L337.4 395.6 L341.3 397.9 L345.9 399.3 L349.8 401.4 L351.9 404.9 L352.9 409.3 L354.9 413.2 L358.6 415.5 L363.5 416.7 L368.0 418.4" stroke="#1e1610" stroke-width="2.7" opacity="0.86"/>
<path d="M336.2 386.1 L336.7 390.9 L338.9 394.9 L343.0 397.1 L347.6 398.6 L351.1 400.9 L352.9 404.8 L353.8 409.2 L355.8 412.9 L359.8 415.0 L364.7 416.2 L369.0 418.1 L372.1 421.7" stroke="#0b0908" stroke-width="2.1" opacity="0.75"/>
<path d="M346.7 312.7 L346.8 317.4 L345.6 322.1 L344.3 326.7 L343.9 331.2 L344.7 335.5 L346.0 340.0 L346.8 344.5 L346.3 348.9 L344.6 353.1 L342.9 357.5 L342.4 362.3 L343.6 366.9 L346.1 371.2 L348.9 375.3 L351.0 379.3 L352.2 383.5 L353.1 388.0" stroke="#1e1610" stroke-width="2.2" opacity="0.77"/>
<path d="M342.1 311.0 L344.4 315.4 L345.0 320.1 L343.7 324.7 L341.7 329.2 L340.4 333.6 L340.5 337.9 L341.8 342.4 L343.0 347.0 L343.0 351.4 L341.5 355.5 L339.3 359.7 L338.1 364.4 L338.7 369.2 L341.1 373.5 L344.4 377.4 L347.3 381.0 L349.0 384.8" stroke="#120e0b" stroke-width="3.1" opacity="0.86"/>
<path d="M345.6 314.1 L346.1 318.8 L344.8 323.5 L343.0 328.0 L341.9 332.5 L342.2 336.8 L343.6 341.2 L344.8 345.9 L344.7 350.3 L343.2 354.4 L341.1 358.7 L340.0 363.4 L340.8 368.2 L343.2 372.5 L346.4 376.4 L349.1 380.2 L350.8 384.1" stroke="#120e0b" stroke-width="2.3" opacity="0.82"/>
<path d="M365.4 382.7 L368.2 386.5 L371.4 390.0 L374.0 393.7 L375.1 397.8 L374.8 401.8 L374.6 406.0 L376.0 410.4 L379.2 414.1" stroke="#5c4a32" stroke-width="0.7" opacity="0.61"/>
<path d="M373.3 398.3 L373.0 402.4 L372.8 406.7" stroke="#5c4a32" stroke-width="1.0" opacity="0.50"/>
<path d="M370.3 390.4 L373.0 394.0 L374.4 398.0 L374.5 401.9 L374.4 406.0 L375.7 410.4 L378.7 414.2" stroke="#3a2c1e" stroke-width="1.2" opacity="0.69"/>
<path d="M365.4 387.7 L368.5 391.1 L371.4 394.6 L373.2 398.3 L373.6 402.2 L373.7 406.2 L374.8 410.6 L377.6 414.6" stroke="#7c6238" stroke-width="1.2" opacity="0.38"/>
<path d="M373.0 398.4 L373.2 402.3 L373.0 406.5" stroke="#44403a" stroke-width="1.0" opacity="0.58"/>
<path d="M329.6 356.3 L329.4 360.7 L330.6 365.1 L330.7 369.2 L329.9 373.9 L330.8 378.5 L333.9 382.3 L336.7 385.8 L337.8 390.0 L339.4 394.4 L342.8 397.1 L347.2 398.8 L350.2 401.7 L351.6 405.8" stroke="#1e1610" stroke-width="3.2" opacity="0.72"/>
<path d="M329.3 356.4 L329.1 360.9 L330.4 365.2 L330.4 369.3 L329.6 374.1 L330.4 378.7 L333.6 382.4 L336.4 385.9 L337.6 390.2 L339.1 394.6 L342.6 397.3 L347.0 398.9 L350.0 401.7 L351.3 405.9 L353.2 409.5" stroke="#080706" stroke-width="1.4" opacity="0.74"/>
<path d="M328.7 357.1 L327.6 361.4 L328.6 365.8 L329.5 369.8 L329.2 374.4 L329.5 379.2 L331.9 383.2 L335.0 386.6 L337.0 390.3 L338.5 394.6 L341.4 397.9 L345.6 399.7 L349.2 402.0 L351.1 405.7 L352.7 409.5" stroke="#1e1610" stroke-width="3.0" opacity="0.85"/>
<path d="M362.8 388.7 L364.2 392.9 L366.5 396.3 L369.0 399.6" stroke="#080706" stroke-width="1.5" opacity="0.86"/>
<path d="M360.9 384.6 L362.2 389.0 L363.7 393.1 L365.9 396.6 L368.2 399.9 L369.9 403.3 L371.0 407.0" stroke="#120e0b" stroke-width="2.6" opacity="0.86"/>
<path d="M362.0 384.0 L363.1 388.5 L364.2 392.9 L366.0 396.5" stroke="#080706" stroke-width="2.0" opacity="0.81"/>
<path d="M291.5 201.3 L296.1 202.9 L301.0 204.2 L305.5 206.4 L309.0 210.0 L311.8 214.4 L314.7 218.5 L318.5 221.8 L323.0 224.5 L327.0 227.6 L329.9 231.9 L331.7 236.8 L333.6 241.7 L336.5 245.8 L340.4 249.4 L344.0 253.1 L346.5 257.6 L347.6 262.7 L348.5 267.8 L350.2 272.6" stroke="#3a2c1e" stroke-width="1.4" opacity="0.90"/>
<path d="M305.5 206.5 L308.9 210.2 L311.5 214.7 L314.5 218.8 L318.5 221.9 L323.0 224.5 L327.0 227.7 L329.7 232.1 L331.4 237.1 L333.3 241.9 L336.4 246.0 L340.4 249.5 L344.0 253.2 L346.3 257.8" stroke="#32281c" stroke-width="1.4" opacity="0.83"/>
<path d="M291.8 200.6 L296.4 202.2 L301.2 203.6 L305.6 205.9 L309.1 209.6 L312.0 213.9 L315.1 217.8 L319.0 221.0 L323.4 223.8 L327.3 227.1 L330.1 231.4 L332.0 236.3 L334.1 241.0 L337.2 245.1 L340.9 248.7 L344.4 252.6 L346.6 257.2 L347.8 262.2 L348.9 267.3" stroke="#3a2c1e" stroke-width="1.6" opacity="0.83"/>
<path d="M292.0 199.6 L296.8 200.8 L301.9 202.0 L306.3 204.3 L309.7 208.2 L312.4 212.7 L315.7 216.6 L319.8 219.5 L324.4 222.1 L328.4 225.4 L331.0 229.9 L332.7 235.0 L334.8 239.7 L338.1 243.7 L342.1 247.1 L345.6 251.0 L347.7 255.7 L348.6 261.0" stroke="#3a2c1e" stroke-width="1.1" opacity="0.54"/>
<path d="M309.0 287.0 L310.7 291.4 L313.6 294.9 L317.6 297.5 L321.5 300.3 L324.1 304.2 L324.8 308.8 L324.6 313.6" stroke="#4e4636" stroke-width="1.9" opacity="0.75"/>
<path d="M310.7 291.5 L313.4 295.1 L317.2 297.9 L321.1 300.6 L324.0 304.3 L325.0 308.9 L324.8 313.7 L324.9 318.3" stroke="#3a2c1e" stroke-width="1.7" opacity="0.56"/>
<path d="M310.6 291.7 L313.2 295.4 L316.9 298.2 L320.8 301.0 L323.7 304.6 L324.8 309.2 L324.6 314.0 L324.7 318.6 L326.1 322.8 L328.2 326.9 L329.6 331.3 L329.3 335.8" stroke="#32281c" stroke-width="1.3" opacity="0.53"/>
<path d="M310.2 292.2 L312.8 295.9 L316.5 298.7 L320.6 301.3 L323.7 304.9 L324.7 309.4 L324.4 314.3 L324.3 318.9" stroke="#5c4a32" stroke-width="1.1" opacity="0.89"/>
<path d="M387.2 362.7 L387.4 367.9 L387.2 373.2 L387.8 378.2 L389.6 382.9 L391.2 387.7 L390.9 392.6 L389.1 397.1 L387.9 401.7 L389.6 406.1 L393.5 409.3 L397.7 412.2 L401.2 416.1" stroke="#32281c" stroke-width="1.5" opacity="0.50"/>
<path d="M390.3 382.5 L391.8 387.4 L392.0 392.3 L390.4 396.9 L389.1 401.4 L390.2 405.9" stroke="#3a2c1e" stroke-width="0.9" opacity="0.59"/>
<path d="M390.4 382.6 L392.0 387.4 L391.8 392.4 L390.0 396.9 L388.7 401.4 L390.1 405.9 L394.0 409.2" stroke="#44403a" stroke-width="1.8" opacity="0.78"/>
<path d="M389.2 377.6 L390.5 382.4 L392.1 387.3 L392.2 392.3 L390.6 396.8 L389.2 401.3 L390.3 405.9 L394.0 409.4 L398.5 412.2 L402.3 415.7" stroke="#3a2c1e" stroke-width="1.6" opacity="0.83"/>
<path d="M297.2 244.4 L299.2 248.6 L302.3 252.1 L305.7 255.4 L308.2 259.3 L309.6 263.8 L311.0 268.4" stroke="#3a2c1e" stroke-width="1.8" opacity="0.75"/>
<path d="M289.1 235.7 L292.3 238.9 L294.5 242.9 L295.9 247.3 L297.7 251.6 L300.6 255.1" stroke="#44403a" stroke-width="1.5" opacity="0.55"/>
<path d="M283.3 229.7 L285.3 233.6 L288.4 236.8 L291.8 239.9 L294.3 243.7 L295.8 248.1 L297.2 252.5 L299.7 256.3 L303.0 259.7 L305.9 263.3 L307.6 267.7 L308.7 272.3" stroke="#52402a" stroke-width="1.1" opacity="0.73"/>
<path d="M285.9 232.3 L289.2 235.3 L292.4 238.5 L294.7 242.5 L296.1 246.9 L297.9 251.2 L300.7 254.8 L304.0 258.2 L306.6 262.0 L308.0 266.5 L309.4 271.0" stroke="#4e4636" stroke-width="1.5" opacity="0.50"/>
<path d="M286.0 240.7 L289.5 243.8 L293.3 246.8 L295.2 250.8 L295.6 255.8 L297.0 260.2" stroke="#52402a" stroke-width="1.3" opacity="0.79"/>
<path d="M294.2 258.4 L295.6 262.8 L299.1 266.0" stroke="#32281c" stroke-width="1.2" opacity="0.84"/>
<path d="M295.9 249.4 L296.7 254.2 L298.0 258.7" stroke="#5c4a32" stroke-width="1.5" opacity="0.84"/>
<path d="M289.6 243.0 L293.7 245.9 L295.9 249.8 L296.2 254.8 L297.4 259.4 L300.9 262.6 L304.8 265.7" stroke="#32281c" stroke-width="1.4" opacity="0.83"/>
<path d="M271.5 222.8 L274.1 226.0 L277.3 229.1 L280.3 232.5 L282.5 236.3 L283.7 240.7 L284.8 245.2 L286.6 249.2 L289.4 252.9 L292.4 256.4 L294.7 260.2" stroke="#52402a" stroke-width="1.0" opacity="0.63"/>
<path d="M266.2 215.2 L269.2 218.7 L271.5 222.4 L273.9 225.7 L277.1 228.8 L280.4 232.0 L282.9 235.7 L284.2 240.0 L285.1 244.6 L286.7 248.8 L289.4 252.4 L292.6 255.8 L295.2 259.5" stroke="#5c4a32" stroke-width="1.8" opacity="0.51"/>
<path d="M271.4 222.3 L274.2 225.4 L277.5 228.4 L280.6 231.7 L282.7 235.5 L283.9 239.9 L285.0 244.4 L286.9 248.4 L289.8 251.9" stroke="#52402a" stroke-width="0.9" opacity="0.59"/>
<path d="M269.1 219.5 L271.3 223.2 L273.8 226.5 L277.1 229.5 L280.4 232.8 L282.7 236.6 L283.7 241.0 L284.5 245.6 L286.2 249.8 L289.0 253.4 L292.3 256.8 L294.7 260.5 L296.0 264.9 L296.6 269.6" stroke="#52402a" stroke-width="1.5" opacity="0.76"/>
<path d="M297.0 246.9 L300.3 250.3 L301.7 254.7 L302.2 259.7 L303.4 264.3 L306.4 267.9 L310.4 270.9 L313.8 274.2 L315.6 278.4 L316.6 283.3 L318.3 287.9 L321.5 291.2 L325.7 293.8 L329.3 297.2 L330.7 301.8" stroke="#745a34" stroke-width="1.4" opacity="0.59"/>
<path d="M298.3 245.3 L301.0 249.0 L301.7 254.0 L302.0 259.1 L303.9 263.3 L307.7 266.4 L312.0 269.3 L314.8 272.9 L315.9 277.6 L316.6 282.8 L318.7 287.0" stroke="#64502e" stroke-width="1.2" opacity="0.46"/>
<path d="M289.6 240.3 L293.2 243.3 L297.7 245.8 L301.1 249.1 L302.3 253.7 L302.4 259.0 L303.6 263.5 L306.8 267.0 L311.2 269.8 L314.8 273.0 L316.4 277.4 L317.0 282.6 L318.5 287.2 L321.9 290.4" stroke="#5c4a32" stroke-width="0.9" opacity="0.52"/>
<path d="M294.8 241.5 L298.8 244.3 L301.1 248.3 L301.8 253.2 L302.5 258.1 L304.8 262.1 L308.7 265.2 L312.7 268.3 L315.1 272.1 L316.1 277.0 L317.2 281.9 L319.6 285.9 L323.7 288.6 L328.0 291.4 L330.7 295.3" stroke="#44403a" stroke-width="1.4" opacity="0.88"/>
<path d="M300.5 249.7 L301.0 254.8 L301.5 259.8 L303.7 263.7 L307.7 266.8 L311.8 269.8 L314.3 273.6 L315.1 278.5 L316.0 283.5 L318.5 287.5" stroke="#9a7e4c" stroke-width="0.7" opacity="0.45"/>
<path d="M274.6 198.6 L278.9 200.4 L282.3 203.7 L285.2 207.7 L288.2 211.2 L292.0 213.8 L296.4 215.5 L301.0 217.3 L305.1 220.1 L308.0 224.0 L310.1 228.7 L311.9 233.4 L314.5 237.5 L317.9 240.9" stroke="#463624" stroke-width="1.7" opacity="0.86"/>
<path d="M274.4 199.9 L278.8 201.4 L282.3 204.5 L285.1 208.5 L287.9 212.4 L291.4 215.3 L295.6 217.3 L300.2 219.1 L304.4 221.7 L307.5 225.3 L309.6 229.9 L311.4 234.7 L313.6 239.0" stroke="#4e4636" stroke-width="1.5" opacity="0.85"/>
<path d="M285.1 208.8 L288.0 212.6 L291.3 215.6 L295.3 217.8 L299.8 219.8 L303.9 222.4 L307.2 226.0 L309.4 230.4 L311.3 235.0 L313.5 239.4 L316.5 243.1" stroke="#4e4636" stroke-width="1.9" opacity="0.72"/>
<path d="M285.7 206.6 L288.7 210.4 L292.0 213.5 L296.1 215.7 L300.6 217.6 L304.9 220.1 L308.4 223.5 L310.8 227.8 L312.8 232.5 L315.0 236.9 L317.9 240.7 L321.6 244.0" stroke="#52402a" stroke-width="1.2" opacity="0.87"/>
<path d="M313.0 267.0 L315.5 270.9 L317.2 275.3 L319.0 279.8 L321.7 283.5 L325.2 286.7 L328.7 290.0 L330.8 294.2" stroke="#4e4636" stroke-width="0.9" opacity="0.75"/>
<path d="M310.5 262.3 L313.8 265.9 L316.0 269.9 L317.6 274.5 L319.5 278.9 L322.5 282.5 L326.2 285.6 L329.5 289.1 L331.3 293.4 L331.8 298.2 L332.6 302.9 L334.5 307.2 L337.1 311.3 L338.7 315.7" stroke="#5c4a32" stroke-width="1.8" opacity="0.67"/>
<path d="M311.4 269.7 L313.5 273.8 L314.9 278.4 L316.7 282.8 L319.8 286.3 L323.7 289.2 L327.0 292.5 L328.7 296.9 L329.2 301.7 L329.9 306.3 L331.9 310.5" stroke="#52402a" stroke-width="1.5" opacity="0.84"/>
<path d="M312.4 268.0 L314.7 272.0 L316.2 276.6 L318.0 281.0 L321.0 284.6 L324.7 287.6 L328.1 291.0 L329.9 295.3 L330.5 300.1 L331.2 304.7 L333.0 309.0" stroke="#3a2c1e" stroke-width="1.3" opacity="0.77"/>
<path d="M344.1 317.7 L344.7 322.2 L346.1 326.7 L346.9 331.2 L346.4 335.7 L345.0 340.0 L343.8 344.2" stroke="#7c6238" stroke-width="0.8" opacity="0.58"/>
<path d="M346.5 311.0 L346.2 315.6 L346.8 320.2 L348.2 324.6 L349.3 329.1 L349.2 333.6 L348.0 338.1 L346.9 342.4" stroke="#5c4a32" stroke-width="1.3" opacity="0.38"/>
<path d="M347.2 325.6 L348.1 330.2 L347.7 334.7 L346.4 339.0 L345.4 343.3" stroke="#44403a" stroke-width="0.6" opacity="0.40"/>
<path d="M346.4 306.3 L346.6 311.1 L346.2 315.8 L346.5 320.3 L347.8 324.8 L349.0 329.3 L349.1 333.8 L348.0 338.2 L346.8 342.5" stroke="#44403a" stroke-width="0.8" opacity="0.69"/>
<path d="M344.9 308.0 L344.7 312.7 L344.4 317.3 L345.2 321.8 L346.5 326.3 L347.4 330.8 L346.9 335.3 L345.5 339.6 L344.4 343.9 L344.4 348.3 L345.0 352.8" stroke="#4e4636" stroke-width="1.4" opacity="0.43"/>
<path d="M338.9 295.4 L342.4 299.3 L344.5 303.7 L344.5 308.6 L343.3 313.6 L342.6 318.1 L343.5 322.6 L345.8 327.0 L347.5 331.5" stroke="#32281c" stroke-width="1.2" opacity="0.62"/>
<path d="M333.5 282.5 L334.2 287.4 L335.7 291.9 L338.3 295.9 L341.4 299.9 L343.6 304.3 L344.1 309.1 L343.3 314.0 L342.6 318.6 L343.1 323.0 L344.8 327.5 L346.4 332.0 L346.5 336.5 L344.9 340.8 L342.7 344.9" stroke="#5c4a32" stroke-width="1.6" opacity="0.76"/>
<path d="M334.9 286.2 L336.9 290.5 L339.8 294.5 L342.8 298.5 L344.6 303.0 L344.8 308.0 L344.0 312.8 L343.7 317.4 L344.8 321.8 L346.7 326.2 L348.1 330.7 L347.8 335.3" stroke="#3a2c1e" stroke-width="1.6" opacity="0.58"/>
<path d="M333.3 282.2 L334.0 287.0 L336.1 291.2 L339.5 295.0 L342.9 298.9 L344.6 303.5 L344.3 308.5 L343.0 313.4 L342.6 318.0 L344.1 322.3 L346.5 326.8 L348.0 331.3 L347.4 335.8 L345.0 340.1 L342.7 344.2" stroke="#52402a" stroke-width="1.7" opacity="0.83"/>
<path d="M352.2 278.9 L355.0 283.3 L356.6 288.1 L357.0 293.3 L357.1 298.4 L357.7 303.3 L359.6 307.8 L362.3 312.1 L364.8 316.5 L366.2 321.1 L366.1 326.0 L365.1 330.9 L364.4 335.8" stroke="#52402a" stroke-width="1.4" opacity="0.53"/>
<path d="M352.0 279.4 L354.7 283.8 L356.2 288.6 L356.4 293.9 L356.4 299.0 L357.1 303.8 L359.1 308.3 L361.9 312.6 L364.4 316.9 L365.6 321.6 L365.3 326.5 L364.2 331.4 L363.5 336.2" stroke="#32281c" stroke-width="0.9" opacity="0.63"/>
<path d="M354.4 284.1 L355.7 289.0 L355.9 294.3 L356.0 299.4 L356.9 304.1 L359.0 308.5 L361.8 312.8 L364.1 317.2 L365.0 322.0 L364.6 326.9 L363.6 331.7 L363.1 336.5 L363.9 341.2 L365.9 345.8" stroke="#44403a" stroke-width="1.5" opacity="0.86"/>
<path d="M352.5 278.8 L355.2 283.2 L356.6 288.0 L356.9 293.3 L356.9 298.4 L357.8 303.2 L359.9 307.7 L362.6 312.0 L365.1 316.3 L366.2 321.0 L366.0 326.0 L365.0 330.9 L364.5 335.7 L365.3 340.4 L367.3 345.1 L369.6 349.7 L371.1 354.5 L371.2 359.6" stroke="#463624" stroke-width="1.4" opacity="0.56"/>
<path d="M330.8 347.6 L328.9 351.6 L326.8 355.4 L325.1 359.4 L324.1 363.7 L324.1 367.9 L324.9 372.0 L326.0 376.2 L327.0 380.6 L327.9 385.1 L329.4 389.4 L331.9 393.0" stroke="#463624" stroke-width="1.4" opacity="0.84"/>
<path d="M328.3 352.2 L326.1 356.0 L324.2 359.9 L323.0 364.1 L322.9 368.4 L323.9 372.5 L325.1 376.6 L326.2 381.0 L327.2 385.5 L328.6 389.7 L330.9 393.5 L334.3 396.3" stroke="#4e4636" stroke-width="1.9" opacity="0.61"/>
<path d="M327.1 352.6 L325.1 356.4 L323.4 360.5 L322.5 364.7 L322.4 368.9 L323.1 372.9 L324.1 377.1 L324.9 381.6 L325.9 386.1 L327.5 390.2 L330.2 393.7 L333.7 396.4" stroke="#3a2c1e" stroke-width="1.8" opacity="0.64"/>
<path d="M330.9 347.5 L328.9 351.4 L326.9 355.3 L325.2 359.3 L324.3 363.6 L324.4 367.8 L325.2 371.9 L326.2 376.1 L327.1 380.5 L328.0 385.1 L329.5 389.3 L332.0 392.9" stroke="#3a2c1e" stroke-width="1.6" opacity="0.61"/>
<path d="M294.9 251.9 L296.5 256.2 L297.4 260.8 L298.7 265.2 L301.2 269.0 L304.5 272.4 L307.5 276.0 L309.3 280.1 L310.7 284.6 L312.5 288.9 L315.6 292.3 L319.4 295.1 L322.9 298.2 L325.0 302.4 L325.5 307.1 L325.8 311.7 L327.2 316.0" stroke="#745a34" stroke-width="0.9" opacity="0.67"/>
<path d="M288.4 245.1 L291.8 248.4 L294.9 251.8 L296.8 255.9 L297.8 260.5 L298.9 265.0 L301.1 269.0 L304.4 272.4 L307.5 275.9 L309.6 279.8 L311.0 284.3 L312.7 288.7 L315.5 292.3 L319.3 295.1 L323.0 298.2 L325.3 302.1 L325.9 306.8 L326.0 311.5 L327.1 315.9 L329.3 320.0 L331.4 324.2 L331.8 328.8" stroke="#4e4636" stroke-width="0.7" opacity="0.53"/>
<path d="M295.6 258.1 L296.4 262.7 L297.6 267.2 L300.0 271.0 L303.3 274.5 L306.2 278.0 L308.1 282.0 L309.4 286.6 L311.2 290.9 L314.2 294.3 L318.1 297.0 L321.7 300.0 L323.8 304.1 L324.3 308.8 L324.5 313.4 L325.8 317.7 L328.1 321.8 L330.0 326.0" stroke="#ac9464" stroke-width="1.0" opacity="0.79"/>
<path d="M297.3 261.6 L298.4 266.1 L300.4 270.1 L303.5 273.7 L306.6 277.2 L308.8 281.0 L310.3 285.4 L312.1 289.8 L314.8 293.4 L318.4 296.3 L322.0 299.3 L324.5 303.2 L325.3 307.8 L325.4 312.5" stroke="#64502e" stroke-width="1.3" opacity="0.80"/>
<path d="M291.6 249.2 L294.4 252.8 L296.0 257.1 L297.0 261.7 L298.3 266.0 L300.8 269.8 L304.0 273.3 L306.8 276.9 L308.7 281.0 L310.0 285.5 L312.0 289.7 L315.1 293.1 L318.9 295.9 L322.3 299.1 L324.3 303.2 L324.9 307.8 L325.3 312.4" stroke="#7c6238" stroke-width="0.8" opacity="0.85"/>
<path d="M349.0 328.7 L350.6 333.1 L349.9 337.6 L347.7 341.9 L346.6 346.2 L347.7 350.8 L349.4 355.2 L349.5 359.7 L348.6 364.7 L348.9 369.6 L351.4 373.9 L354.4 377.8 L355.9 381.9 L356.4 386.7 L358.0 390.9 L361.3 393.9" stroke="#52402a" stroke-width="1.5" opacity="0.75"/>
<path d="M347.7 335.6 L346.4 340.0 L343.9 344.1 L343.0 348.4 L344.3 353.0 L345.6 357.3 L345.2 361.8 L344.3 366.8 L345.0 371.5 L347.9 375.6 L350.8 379.4 L352.0 383.6 L352.6 388.4 L354.6 392.4" stroke="#3a2c1e" stroke-width="1.3" opacity="0.61"/>
<path d="M349.9 337.7 L347.6 342.0 L346.4 346.3 L347.5 350.9 L349.2 355.3 L349.4 359.8 L348.4 364.8 L348.6 369.7 L351.1 374.0 L354.2 377.8 L355.8 381.9 L356.3 386.7" stroke="#3a2c1e" stroke-width="1.6" opacity="0.58"/>
<path d="M347.2 335.8 L346.5 340.2 L344.1 344.3 L342.5 348.6 L343.3 353.1 L345.0 357.5 L345.3 361.9 L344.4 366.8 L344.5 371.7 L347.0 376.0 L350.2 379.7 L352.0 383.6 L352.7 388.3 L354.3 392.5 L357.6 395.4" stroke="#4e4636" stroke-width="1.3" opacity="0.76"/>
<path d="M334.8 381.9 L335.6 386.4 L337.5 390.5 L340.8 393.4 L344.5 395.8 L347.6 398.8 L349.7 402.4 L351.8 405.9 L354.6 408.6 L358.1 410.8 L361.4 413.4 L364.3 416.9 L367.4 420.5" stroke="#5c4a32" stroke-width="1.4" opacity="0.52"/>
<path d="M331.1 373.6 L333.3 377.7 L334.3 382.1 L334.9 386.7 L336.9 390.7 L340.4 393.5 L344.2 395.8 L347.2 398.9 L349.2 402.7 L351.3 406.1 L354.3 408.7 L357.9 410.8" stroke="#5c4a32" stroke-width="0.6" opacity="0.66"/>
<path d="M334.4 377.1 L335.8 381.4 L336.5 386.0 L338.1 390.2 L341.3 393.2 L345.2 395.6 L348.4 398.4 L350.5 402.1 L352.3 405.7 L354.9 408.6 L358.5 410.8 L361.9 413.2 L364.9 416.6 L367.9 420.3 L371.5 423.3" stroke="#7c6238" stroke-width="0.6" opacity="0.42"/>
<path d="M331.2 360.4 L329.6 364.5 L329.8 369.0 L331.7 373.2 L333.9 377.4 L335.1 381.7 L335.9 386.3 L337.7 390.4 L341.0 393.3 L344.8 395.7 L347.9 398.6 L350.0 402.3 L351.9 405.8 L354.7 408.6 L358.2 410.8" stroke="#7c6238" stroke-width="0.7" opacity="0.69"/>
<path d="M327.7 370.1 L329.4 374.3 L331.6 378.4 L333.0 382.7 L334.0 387.1 L335.8 391.2 L339.0 394.2 L342.8 396.6 L346.1 399.3 L348.5 402.8 L350.6 406.3 L353.3 409.1 L356.8 411.3 L360.3 413.8 L363.4 417.0 L366.5 420.6 L370.1 423.5" stroke="#3a2c1e" stroke-width="1.4" opacity="0.42"/>
<path d="M342.4 255.1 L342.7 260.6 L344.0 265.5 L347.1 269.5 L351.2 273.3 L354.4 277.5" stroke="#32281c" stroke-width="1.7" opacity="0.75"/>
<path d="M342.5 247.5 L343.8 252.7 L344.6 258.0 L346.2 262.8 L349.3 266.9 L353.0 270.9 L355.8 275.3 L357.0 280.3 L357.1 285.7" stroke="#4e4636" stroke-width="1.5" opacity="0.73"/>
<path d="M338.3 245.6 L340.8 250.0 L341.7 255.4 L342.4 260.8 L344.3 265.3 L347.8 269.2" stroke="#5c4a32" stroke-width="1.6" opacity="0.83"/>
<path d="M341.5 248.7 L342.7 253.9 L343.7 259.1 L345.8 263.6 L349.2 267.6 L352.8 271.6 L355.1 276.2 L355.8 281.4 L355.9 286.8" stroke="#44403a" stroke-width="1.5" opacity="0.84"/>
<path d="M309.6 240.1 L311.7 244.4 L313.4 249.0 L315.3 253.4 L318.2 257.3 L321.8 260.7 L325.2 264.2 L327.8 268.2 L329.6 272.8 L331.3 277.4 L333.4 281.6 L336.3 285.4 L339.3 289.3" stroke="#3a2c1e" stroke-width="1.7" opacity="0.55"/>
<path d="M316.8 251.3 L319.5 255.3 L322.9 258.8 L326.3 262.4 L329.1 266.3 L331.1 270.8 L332.8 275.4 L334.8 279.7 L337.5 283.7 L340.3 287.7 L342.5 292.1 L343.8 296.8" stroke="#5c4a32" stroke-width="1.3" opacity="0.54"/>
<path d="M319.8 254.8 L323.2 258.4 L326.7 261.9 L329.5 265.8 L331.5 270.3 L333.1 274.9 L335.1 279.3 L337.7 283.3 L340.6 287.3" stroke="#44403a" stroke-width="1.5" opacity="0.80"/>
<path d="M315.3 253.5 L318.1 257.4 L321.6 260.9 L325.0 264.4 L327.8 268.3 L329.7 272.8 L331.3 277.5 L333.4 281.7 L336.1 285.6 L339.0 289.5 L341.2 293.9 L342.4 298.6" stroke="#4e4636" stroke-width="1.2" opacity="0.74"/>
<path d="M374.3 346.5 L375.3 351.5 L377.1 356.4 L378.6 361.3 L379.3 366.2" stroke="#32281c" stroke-width="1.8" opacity="0.62"/>
<path d="M372.5 337.5 L372.2 342.6 L372.0 347.6 L373.0 352.6 L374.8 357.4 L376.6 362.3 L377.5 367.1 L377.6 372.2 L377.9 377.2 L379.4 381.8" stroke="#52402a" stroke-width="1.7" opacity="0.84"/>
<path d="M372.9 347.3 L373.8 352.2 L375.4 357.1 L377.1 362.0 L378.0 366.9" stroke="#463624" stroke-width="0.9" opacity="0.58"/>
<path d="M375.9 335.6 L375.7 340.7 L375.6 345.9 L376.5 350.9 L378.2 355.8 L379.9 360.7" stroke="#52402a" stroke-width="1.2" opacity="0.87"/>
<path d="M291.1 202.7 L294.5 206.2 L299.1 207.7" stroke="#8c7242" stroke-width="0.8" opacity="0.70"/>
<path d="M292.4 199.0 L295.8 202.9 L300.0 205.1 L305.2 206.0" stroke="#7c6238" stroke-width="0.7" opacity="0.78"/>
<path d="M292.2 199.3 L295.8 202.9 L300.3 204.6 L305.7 205.3 L310.8 206.9 L314.5 210.5" stroke="#3a2c1e" stroke-width="0.8" opacity="0.79"/>
<path d="M288.2 197.0 L291.4 201.5 L295.0 204.8 L299.7 206.2 L305.2 206.9 L310.1 208.8 L313.4 212.8 L315.3 218.0" stroke="#8c7242" stroke-width="0.6" opacity="0.81"/>
<path d="M295.3 204.1 L299.6 206.2 L304.9 206.9 L310.2 208.4 L314.1 211.7" stroke="#463624" stroke-width="0.6" opacity="0.54"/>
<path d="M266.1 216.2 L270.6 217.7 L272.2 222.5 L272.9 227.2 L276.5 229.9 L281.1 232.5 L282.7 236.7 L282.1 242.0 L283.6 246.2 L288.2 248.9 L291.5 252.3 L291.4 257.3 L291.2 262.4 L294.5 265.8 L299.0 268.5 L300.6 272.8" stroke="#52402a" stroke-width="0.9" opacity="0.68"/>
<path d="M272.3 223.1 L273.2 227.7 L276.3 230.9 L280.5 233.7 L282.3 237.8 L282.1 242.9 L283.4 247.2 L287.4 250.2 L290.7 253.6 L291.0 258.4 L291.0 263.3 L293.8 267.0" stroke="#463624" stroke-width="1.4" opacity="0.73"/>
<path d="M266.0 216.7 L270.7 218.0 L272.3 222.7 L272.8 227.6 L276.2 230.5 L281.0 233.0 L282.7 237.1 L282.0 242.5 L283.3 246.8 L287.8 249.5 L291.4 252.8 L291.3 257.8 L290.9 262.9 L294.0 266.4 L298.7 269.2 L300.5 273.3 L299.6 278.7" stroke="#52402a" stroke-width="1.2" opacity="0.53"/>
<path d="M270.4 217.9 L271.8 222.9 L273.0 227.1 L277.1 229.6 L281.2 232.4 L282.2 237.0 L281.8 242.2 L284.1 246.0 L288.6 248.7 L291.2 252.4 L290.8 257.5 L291.3 262.3 L295.1 265.5 L299.2 268.5 L300.1 273.0" stroke="#463624" stroke-width="1.9" opacity="0.87"/>
<path d="M349.0 281.7 L350.4 286.5 L353.2 290.8 L356.1 295.1 L357.4 299.9 L357.2 304.9 L357.5 309.8 L359.3 314.3 L361.8 318.6 L363.0 323.2" stroke="#52402a" stroke-width="1.2" opacity="0.79"/>
<path d="M348.6 276.7 L349.0 281.9 L350.1 286.8 L352.8 291.2 L355.7 295.4 L357.3 300.1 L357.2 305.1 L357.2 310.0 L358.8 314.6 L361.2 318.9" stroke="#52402a" stroke-width="1.6" opacity="0.86"/>
<path d="M351.8 292.2 L354.8 296.4 L356.4 301.1 L356.3 306.1 L356.2 311.0 L357.6 315.6 L360.0 319.9 L361.5 324.4" stroke="#3a2c1e" stroke-width="1.1" opacity="0.79"/>
<path d="M353.5 290.4 L356.5 294.7 L357.8 299.5 L357.5 304.6 L357.7 309.5" stroke="#5c4a32" stroke-width="1.4" opacity="0.88"/>
<path d="M336.8 228.0 L340.9 231.5 L345.0 235.0 L347.9 239.4 L349.3 244.6 L350.3 249.9 L352.3 254.6 L355.6 258.9 L358.8 263.2 L360.9 268.0 L361.7 273.4 L362.4 278.7" stroke="#3a2c1e" stroke-width="1.9" opacity="0.84"/>
<path d="M347.5 240.3 L348.5 245.7 L349.2 251.1 L351.4 255.7 L355.0 259.8 L358.6 264.0 L360.5 268.8 L360.8 274.3 L361.2 279.8 L363.1 284.6 L366.7 288.7" stroke="#32281c" stroke-width="1.9" opacity="0.66"/>
<path d="M336.2 228.8 L340.6 232.1 L344.8 235.6 L347.5 240.1 L348.7 245.4 L349.6 250.7 L351.7 255.4 L355.2 259.6 L358.6 263.8 L360.6 268.6 L361.1 274.0 L361.6 279.5 L363.5 284.3" stroke="#32281c" stroke-width="1.4" opacity="0.75"/>
<path d="M336.6 228.2 L340.8 231.6 L345.1 234.9 L348.2 239.3 L349.5 244.6 L350.2 249.9 L352.0 254.8 L355.4 259.0 L358.9 263.2 L361.2 267.9 L361.9 273.3 L362.3 278.8" stroke="#52402a" stroke-width="1.4" opacity="0.78"/>
<path d="M328.4 249.8 L331.6 253.7 L335.1 257.3 L338.2 261.2 L340.2 265.8 L341.6 270.6 L343.3 275.2 L345.6 279.6 L348.2 283.9 L350.4 288.4 L351.6 293.3 L352.3 298.2 L353.1 303.0 L354.7 307.5" stroke="#8c7242" stroke-width="0.8" opacity="0.52"/>
<path d="M328.1 250.2 L331.2 254.1 L334.8 257.7 L338.0 261.5 L340.1 266.0 L341.5 270.8 L343.1 275.5 L345.2 280.0 L347.9 284.3 L350.1 288.7 L351.5 293.5 L352.2 298.4 L352.9 303.2 L354.2 307.8 L356.1 312.2 L357.6 316.8" stroke="#7c6238" stroke-width="1.0" opacity="0.88"/>
<path d="M325.3 246.4 L327.8 250.7 L331.2 254.4 L334.7 258.0 L337.6 262.0 L339.5 266.7 L340.9 271.5 L342.7 276.0 L345.2 280.3 L347.8 284.6 L349.8 289.2 L350.9 294.0 L351.5 299.0 L352.5 303.7 L354.1 308.1" stroke="#463624" stroke-width="1.1" opacity="0.70"/>
<path d="M333.0 251.6 L336.6 255.2 L339.6 259.2 L341.7 263.8 L343.0 268.6 L344.6 273.3 L346.9 277.7 L349.6 282.1 L351.8 286.6 L353.1 291.4 L353.8 296.4 L354.7 301.2 L356.3 305.7 L358.3 310.2 L359.9 314.7 L360.5 319.5 L360.4 324.3" stroke="#3a2c1e" stroke-width="1.1" opacity="0.80"/>
<path d="M325.8 245.8 L328.3 250.1 L331.5 253.9 L334.9 257.6 L337.8 261.6 L339.9 266.2 L341.4 270.9 L343.2 275.5 L345.5 279.9 L348.0 284.2 L350.0 288.8 L351.3 293.6 L352.0 298.5 L353.0 303.2 L354.5 307.7 L356.2 312.2 L357.5 316.8 L357.9 321.5" stroke="#84683c" stroke-width="1.3" opacity="0.49"/>
<path d="M285.3 206.8 L289.4 208.9 L293.8 210.7 L297.9 213.0 L301.3 216.3 L304.1 220.4 L306.7 224.5 L309.8 228.2 L313.5 231.3 L317.4 234.4" stroke="#4e4636" stroke-width="1.4" opacity="0.69"/>
<path d="M281.6 203.7 L285.5 206.1 L289.8 207.9 L294.2 209.6 L298.3 212.1 L301.6 215.5 L304.3 219.6 L307.0 223.7 L310.3 227.2 L314.2 230.2 L318.2 233.3 L321.5 237.0" stroke="#64502e" stroke-width="1.4" opacity="0.83"/>
<path d="M288.9 210.9 L293.1 212.9 L297.0 215.5 L300.2 219.0 L302.8 223.1 L305.4 227.1 L308.6 230.7 L312.3 233.8 L316.0 237.0" stroke="#8c7242" stroke-width="0.8" opacity="0.83"/>
<path d="M293.4 212.1 L297.3 214.6 L300.6 218.0 L303.3 222.0" stroke="#5c4a32" stroke-width="0.9" opacity="0.72"/>
<path d="M293.5 211.4 L297.5 213.8 L301.0 217.0 L303.8 220.9 L306.5 225.0" stroke="#84683c" stroke-width="1.0" opacity="0.74"/>
<path d="M349.1 237.8 L351.5 242.5 L351.8 248.2 L353.2 253.2 L357.0 257.3 L360.3 261.6" stroke="#8c7242" stroke-width="1.0" opacity="0.56"/>
<path d="M350.9 248.7 L353.1 253.4 L357.6 257.2 L360.4 261.7" stroke="#9a7e4c" stroke-width="0.7" opacity="0.87"/>
<path d="M352.7 246.8 L353.7 252.0 L357.9 256.0 L361.7 260.1 L362.2 265.6 L361.8 271.5" stroke="#84683c" stroke-width="0.8" opacity="0.74"/>
<path d="M352.0 255.1 L356.3 258.9 L359.1 263.4 L359.0 269.0" stroke="#4e4636" stroke-width="1.1" opacity="0.77"/>
<path d="M350.2 236.5 L351.9 241.7 L351.7 247.6 L353.8 252.4 L358.3 256.2 L361.2 260.7 L360.9 266.5 L361.3 272.1" stroke="#84683c" stroke-width="1.4" opacity="0.62"/>
<path d="M326.2 253.2 L328.6 257.5 L332.2 261.1 L335.9 264.5 L338.5 268.7 L339.9 273.5 L341.0 278.4 L342.9 282.8 L345.7 287.0" stroke="#5c4a32" stroke-width="0.8" opacity="0.69"/>
<path d="M325.8 261.6 L329.3 265.1 L333.1 268.4 L335.9 272.5 L337.3 277.2 L338.3 282.0 L340.1 286.5 L342.9 290.6 L345.5 294.9 L346.8 299.6" stroke="#463624" stroke-width="1.2" opacity="0.69"/>
<path d="M335.6 264.8 L338.2 269.0 L339.7 273.8 L340.9 278.6 L342.8 283.0 L345.5 287.3" stroke="#745a34" stroke-width="1.1" opacity="0.80"/>
<path d="M324.1 256.2 L326.9 260.2 L330.7 263.5 L334.2 267.0 L336.4 271.4 L337.6 276.3 L339.0 281.0 L341.4 285.2 L344.3 289.3" stroke="#84683c" stroke-width="0.9" opacity="0.78"/>
<path d="M330.2 264.2 L333.6 267.8 L335.9 272.1 L337.3 276.8 L338.7 281.5 L341.0 285.7 L343.7 289.9 L345.8 294.3 L346.8 299.2" stroke="#745a34" stroke-width="0.9" opacity="0.81"/>
<path d="M312.7 274.6 L314.0 279.3 L316.4 283.3 L320.0 286.4 L323.9 289.3 L326.6 293.1 L327.8 297.7 L328.3 302.3 L329.8 306.7" stroke="#463624" stroke-width="0.7" opacity="0.85"/>
<path d="M311.9 269.3 L313.3 273.8 L314.4 278.6 L316.7 282.7 L320.5 285.6 L324.6 288.4 L327.4 292.2" stroke="#44403a" stroke-width="0.8" opacity="0.63"/>
<path d="M309.4 273.1 L311.0 277.4 L312.2 282.1 L314.2 286.3 L317.8 289.4 L321.8 292.1 L324.9 295.6 L326.2 300.2 L326.4 304.9" stroke="#52402a" stroke-width="0.8" opacity="0.85"/>
<path d="M302.4 258.8 L305.5 262.3 L309.0 265.7 L311.6 269.5 L313.0 274.0 L314.3 278.7 L316.9 282.6 L320.6 285.6 L324.4 288.6" stroke="#8c7242" stroke-width="1.4" opacity="0.64"/>
<path d="M310.5 277.6 L312.0 282.1 L314.7 285.9 L318.5 288.7 L322.2 291.7 L324.6 295.7 L325.6 300.3 L326.4 304.8" stroke="#44403a" stroke-width="0.8" opacity="0.52"/>
<path d="M273.9 211.3 L277.4 214.0 L279.0 218.6 L280.6 223.0 L284.1 225.7 L288.7 227.6 L292.1 230.6 L293.4 235.2 L294.2 240.1 L296.9 243.8 L301.3 246.5" stroke="#745a34" stroke-width="0.7" opacity="0.52"/>
<path d="M268.7 211.3 L273.6 211.6 L277.7 213.6 L279.7 217.8 L280.8 222.6 L283.6 225.9 L288.2 227.8 L292.3 230.3 L294.1 234.5 L294.7 239.6 L296.6 243.8 L300.7 246.7 L305.0 249.4 L307.2 253.5" stroke="#52402a" stroke-width="0.6" opacity="0.79"/>
<path d="M273.9 209.4 L277.6 211.9 L279.5 216.3 L281.3 220.5 L284.8 223.2 L289.4 225.1 L292.9 227.9 L294.6 232.4 L295.6 237.2 L298.3 241.0 L302.6 243.6 L306.4 246.7 L308.1 251.1" stroke="#4e4636" stroke-width="1.2" opacity="0.83"/>
<path d="M260.9 207.0 L264.5 210.1 L268.9 211.1 L273.7 211.5 L277.5 213.9 L279.3 218.3 L280.8 222.8 L283.9 225.9 L288.4 227.8 L292.1 230.6 L293.7 235.0 L294.5 240.0 L296.8 243.9 L300.9 246.7 L304.8 249.6" stroke="#44403a" stroke-width="0.6" opacity="0.87"/>
<path d="M260.6 206.8 L264.4 209.5 L269.1 209.8 L274.1 210.2 L277.6 213.0 L279.1 217.7 L280.7 222.0 L284.5 224.5 L289.2 226.2 L292.6 229.3 L293.8 234.0 L294.6 239.0 L297.5 242.5 L302.1 245.0" stroke="#5c4a32" stroke-width="1.0" opacity="0.61"/>
<path d="M321.7 373.9 L323.4 377.7 L323.6 382.3 L323.3 387.3 L324.5 391.8 L328.0 394.9 L332.6 396.4 L336.7 398.1 L339.7 401.3 L341.7 405.6 L343.9 409.4 L347.3 411.7 L351.8 412.9 L356.3 414.2 L359.8 416.9" stroke="#52402a" stroke-width="0.6" opacity="0.63"/>
<path d="M322.3 387.8 L323.1 392.5 L326.3 395.8 L330.9 397.4 L335.2 398.8 L338.6 401.5 L340.9 405.6 L343.0 409.6 L346.2 412.3 L350.6 413.6" stroke="#3a2c1e" stroke-width="1.2" opacity="0.53"/>
<path d="M323.1 392.4 L326.6 395.5 L330.9 397.2 L334.9 399.0 L338.0 402.1 L340.4 406.1 L342.9 409.6 L346.4 411.8 L350.7 413.2 L355.0 414.7 L358.5 417.5" stroke="#52402a" stroke-width="0.6" opacity="0.65"/>
<path d="M320.3 374.4 L322.2 378.3 L322.7 382.7 L322.6 387.6 L323.7 392.2 L327.0 395.4 L331.5 397.0 L335.7 398.6 L338.8 401.6 L341.1 405.7 L343.4 409.5 L346.7 412.0 L351.0 413.3 L355.5 414.6 L359.2 417.1" stroke="#5c4a32" stroke-width="1.4" opacity="0.40"/>
<path d="M319.5 374.8 L321.8 378.5 L322.5 382.9 L322.2 387.8 L322.9 392.6 L326.1 396.0 L330.7 397.5 L335.2 398.8 L338.6 401.5 L340.8 405.6 L342.9 409.7 L346.0 412.4 L350.4 413.7 L355.1 414.7 L359.0 416.9 L361.8 420.7" stroke="#44403a" stroke-width="1.3" opacity="0.56"/>
<path d="M309.8 245.9 L313.1 249.3 L316.8 252.6" stroke="#52402a" stroke-width="1.1" opacity="0.64"/>
<path d="M308.4 240.0 L311.2 243.8 L314.5 247.2" stroke="#5c4a32" stroke-width="0.8" opacity="0.60"/>
<path d="M305.9 236.2 L308.2 240.3 L311.1 244.1 L314.4 247.5 L317.9 251.0 L320.9 254.8 L323.4 258.9 L325.4 263.4" stroke="#64502e" stroke-width="1.1" opacity="0.64"/>
<path d="M300.8 229.2 L303.0 233.5 L304.9 237.9 L307.2 242.1 L310.1 245.8 L313.5 249.2 L316.9 252.6 L320.0 256.4 L322.3 260.6" stroke="#9a7e4c" stroke-width="0.9" opacity="0.71"/>
<path d="M301.1 228.5 L303.5 232.6 L305.5 237.0 L307.7 241.3 L310.5 245.1" stroke="#7c6238" stroke-width="1.4" opacity="0.62"/>
</g></g>
<g clip-path="url(#hairclip)"><g filter="url(#b1)" fill="none" stroke-linecap="round" stroke-linejoin="round">
<path d="M224.3 199.3 L222.4 200.4 L220.0 200.9 L217.7 201.5 L215.7 202.5 L214.3 204.3 L213.2 206.3 L212.1 208.2 L210.6 209.6 L208.6 210.6 L206.3 211.5 L204.5 212.9 L203.3 214.8 L202.6 217.0 L201.9 219.0 L201.0 220.7 L199.6 222.0 L197.7 223.5 L196.3 225.3 L195.6 227.4 L195.6 229.8 L195.5 232.2 L195.1 234.2 L194.0 235.9 L192.5 237.6 L191.3 239.6 L191.0 241.8 L191.4 244.2 L192.0 246.5 L192.0 248.7 L191.3 250.8 L190.0 252.8 L188.9 254.9 L188.6 257.1 L189.1 259.4 L189.8 261.7 L190.2 264.0" stroke="#84683c" stroke-width="0.9" opacity="0.59"/>
<path d="M221.4 199.1 L220.1 201.0 L218.3 202.3 L216.0 202.9 L213.6 203.4 L211.6 204.3 L210.1 206.0 L209.2 208.2 L208.4 210.4 L207.0 212.1 L205.0 213.3 L202.8 214.3 L200.8 215.5 L199.5 217.2 L198.9 219.4 L198.9 221.7 L198.4 223.8 L197.0 225.6 L195.2 227.3 L193.6 229.0 L192.8 231.0 L192.6 233.3 L192.9 235.6 L193.0 237.8 L192.3 239.8 L190.9 241.8 L189.7 243.8 L189.1 246.0 L189.4 248.3 L190.0 250.6 L190.4 252.9 L189.9 255.0" stroke="#ac9464" stroke-width="0.9" opacity="0.85"/>
<path d="M221.0 198.4 L218.6 198.9 L216.4 199.6 L214.7 201.1 L213.4 203.1 L212.2 205.1 L210.8 206.8 L209.0 207.9 L206.7 208.9 L204.6 209.9 L203.1 211.6 L202.2 213.7 L201.4 216.0 L200.5 217.9 L199.2 219.5 L197.3 220.9 L195.5 222.5 L194.4 224.5 L194.1 226.8 L194.2 229.2 L193.9 231.5 L193.1 233.4 L191.7 235.2 L190.1 237.1 L189.3 239.2 L189.4 241.5 L190.0 243.9 L190.3 246.2 L189.9 248.4 L188.8 250.4 L187.6 252.5 L186.8 254.7 L186.9 256.9 L187.6 259.2 L188.2 261.5 L188.1 263.8 L187.2 265.9" stroke="#9a7e4c" stroke-width="1.1" opacity="0.73"/>
<path d="M223.3 194.0 L222.1 196.1 L220.7 198.1 L218.9 199.4 L216.6 200.0 L214.3 200.5 L212.1 201.4 L210.5 203.0 L209.4 205.2 L208.4 207.4 L207.1 209.2 L205.1 210.3 L202.8 211.3 L200.8 212.5 L199.4 214.3 L198.5 216.5 L198.1 218.8 L197.5 221.0 L196.1 222.8 L194.3 224.4 L192.7 226.1 L191.8 228.2 L191.6 230.5 L191.7 233.0 L191.6 235.2 L190.8 237.3 L189.4 239.3 L188.1 241.3 L187.5 243.4 L187.8 245.8 L188.4 248.1 L188.7 250.4 L188.2 252.6 L187.0 254.7 L185.9 256.8 L185.3 259.0 L185.6 261.2" stroke="#64502e" stroke-width="1.0" opacity="0.82"/>
<path d="M219.0 195.7 L217.8 197.8 L216.5 199.8 L214.7 201.2 L212.5 201.9 L210.1 202.5 L207.9 203.6 L206.3 205.4 L205.4 207.6 L204.6 209.9 L203.3 211.8 L201.4 213.0 L199.2 214.1 L197.1 215.4 L195.6 217.4 L195.2 219.9 L195.2 222.4 L194.8 224.6 L193.5 226.5 L191.7 228.2 L190.1 229.9 L189.1 232.0 L188.9 234.5 L189.4 237.0 L189.7 239.3 L189.0 241.5 L187.7 243.5 L186.4 245.5 L185.7 247.7 L185.9 250.0 L186.6 252.4 L187.1 254.7 L186.8 256.9 L185.7 259.0 L184.5 261.1 L183.8 263.3 L184.0 265.5 L185.6 268.0" stroke="#8c7242" stroke-width="1.0" opacity="0.83"/>
<path d="M220.8 194.3 L219.5 196.3 L217.8 197.8 L215.6 198.6 L213.2 199.1 L211.0 199.8 L209.2 201.3 L207.9 203.5 L206.9 205.9 L205.6 207.8 L203.8 209.1 L201.5 210.1 L199.4 211.2 L197.8 212.9 L196.7 215.1 L196.1 217.7 L195.7 220.1 L194.5 222.1 L192.7 223.7 L191.0 225.4 L189.9 227.4 L189.5 229.7 L189.6 232.2 L189.6 234.7 L189.0 236.9 L187.7 238.9 L186.3 241.0 L185.5 243.1 L185.6 245.4 L186.2 247.8 L186.6 250.1 L186.3 252.4 L185.3 254.5 L184.1 256.6 L183.3 258.7" stroke="#745a34" stroke-width="1.3" opacity="0.62"/>
<path d="M211.4 234.7 L211.2 236.6 L210.4 238.2 L209.2 239.6 L207.7 240.8 L206.3 242.1 L205.3 243.6 L204.8 245.3 L204.7 247.2 L204.8 249.2 L204.5 251.1 L203.9 252.7 L202.7 254.1 L201.4 255.4 L200.2 256.8 L199.4 258.3 L199.3 260.1 L199.7 262.0 L200.2 263.9 L200.3 265.8 L200.0 267.5 L199.2 269.2 L198.1 270.8 L197.1 272.4 L196.6 274.1 L196.7 275.9 L197.2 277.8 L197.8 279.6 L198.1 281.5 L197.9 283.2 L197.1 285.0 L196.1 286.6" stroke="#84683c" stroke-width="0.8" opacity="0.62"/>
<path d="M211.6 232.8 L210.2 234.1 L208.6 235.3 L207.4 236.7 L206.8 238.4 L206.5 240.2 L206.5 242.2 L206.4 244.1 L205.9 245.8 L204.8 247.3 L203.4 248.6 L201.9 249.9 L200.8 251.4 L200.2 253.1 L200.1 254.9 L200.3 256.8 L200.6 258.6 L200.4 260.3 L199.7 262.0 L198.6 263.6 L197.5 265.2 L196.8 266.9 L196.6 268.7 L196.9 270.6 L197.4 272.4 L197.8 274.3 L197.7 276.0 L197.1 277.7 L196.1 279.4 L195.2 281.1 L194.6 282.9" stroke="#64502e" stroke-width="1.3" opacity="0.66"/>
<path d="M211.4 228.7 L210.0 230.0 L208.9 231.5 L208.4 233.2 L208.3 235.1 L208.2 237.1 L207.8 238.9 L207.0 240.5 L205.8 241.9 L204.3 243.2 L203.0 244.5 L202.0 246.1 L201.6 247.8 L201.6 249.8 L201.6 251.7 L201.3 253.5 L200.7 255.1 L199.6 256.6 L198.4 258.1 L197.3 259.7 L196.8 261.5 L196.8 263.3 L197.2 265.2 L197.7 267.1 L197.8 268.9 L197.4 270.6 L196.5 272.3 L195.4 274.0 L194.6 275.7 L194.2 277.4 L194.4 279.2 L195.0 281.1 L195.5 283.0 L195.8 284.8 L195.4 286.6" stroke="#7c6238" stroke-width="1.4" opacity="0.72"/>
<path d="M210.5 228.3 L210.5 230.2 L210.1 232.1 L209.3 233.6 L208.0 235.0 L206.5 236.2 L205.0 237.5 L204.0 239.1 L203.6 240.9 L203.5 242.8 L203.5 244.8 L203.3 246.6 L202.5 248.2 L201.3 249.6 L199.8 250.9 L198.5 252.3 L197.5 254.0 L197.2 255.9 L197.5 257.9 L198.0 259.9 L198.1 261.7 L197.7 263.4 L196.8 265.1 L195.6 266.7 L194.6 268.3 L194.1 270.1 L194.2 272.0 L194.7 273.9 L195.3 275.8 L195.6 277.6 L195.2 279.3 L194.4 281.1 L193.4 282.7" stroke="#8c7242" stroke-width="1.4" opacity="0.72"/>
<path d="M206.5 232.2 L205.6 233.8 L205.2 235.6 L205.1 237.5 L205.0 239.5 L204.6 241.3 L203.7 242.9 L202.3 244.2 L200.9 245.5 L199.6 247.0 L198.8 248.6 L198.5 250.4 L198.5 252.4 L198.5 254.3 L198.3 256.2 L197.6 258.0 L196.6 259.6 L195.4 261.2 L194.6 262.9 L194.2 264.6 L194.3 266.5 L194.8 268.4 L195.2 270.3 L195.2 272.1 L194.7 273.9 L193.8 275.6 L192.8 277.3 L192.1 279.0 L191.9 280.8 L192.2 282.6 L192.8 284.5 L193.3 286.3 L193.4 288.1 L193.1 289.9" stroke="#745a34" stroke-width="1.2" opacity="0.66"/>
<path d="M234.6 199.9 L233.5 200.2 L232.3 200.4 L231.1 200.6 L230.0 200.9 L228.9 201.2 L227.9 201.8 L227.1 202.5 L226.3 203.3 L225.7 204.3 L225.2 205.3 L224.8 206.3 L224.3 207.3 L223.6 208.2 L222.8 208.9 L221.8 209.5 L220.8 210.0 L219.6 210.4 L218.5 210.8 L217.4 211.3 L216.5 212.0 L215.7 212.7 L215.1 213.7 L214.7 214.7 L214.5 215.8 L214.3 217.0 L214.1 218.1 L213.7 219.2 L213.1 220.2 L212.4 221.0 L211.5 221.7 L210.5 222.3 L209.4 223.0 L208.4 223.6" stroke="#745a34" stroke-width="1.2" opacity="0.46"/>
<path d="M230.5 199.7 L229.4 200.0 L228.3 200.4 L227.4 200.9 L226.5 201.7 L225.8 202.6 L225.2 203.6 L224.6 204.6 L224.2 205.7 L223.6 206.6 L222.9 207.5 L222.1 208.2 L221.1 208.7 L220.0 209.2 L218.8 209.6 L217.7 210.0 L216.7 210.6 L215.8 211.2 L215.0 212.1 L214.4 213.0 L214.0 214.1 L213.8 215.3 L213.6 216.5 L213.3 217.6 L212.9 218.7 L212.3 219.6 L211.5 220.4 L210.5 221.1 L209.5 221.7 L208.5 222.4 L207.5 223.0" stroke="#7c6238" stroke-width="1.3" opacity="0.63"/>
<path d="M235.8 195.6 L234.6 195.8 L233.4 196.1 L232.3 196.5 L231.4 197.0 L230.6 197.8 L229.9 198.7 L229.2 199.7 L228.6 200.8 L227.9 201.7 L227.2 202.6 L226.3 203.3 L225.3 203.8 L224.3 204.2 L223.2 204.6 L222.0 205.0 L220.9 205.4 L219.9 206.0 L219.0 206.6 L218.2 207.5 L217.6 208.4 L217.2 209.5 L216.7 210.6 L216.3 211.8 L215.8 212.8 L215.2 213.7 L214.5 214.6 L213.7 215.3 L212.8 216.0 L211.8 216.6 L210.7 217.2 L209.8 217.9 L208.9 218.7 L208.3 219.6 L207.8 220.6 L207.5 221.7" stroke="#8c7242" stroke-width="1.5" opacity="0.53"/>
<path d="M231.8 195.6 L230.8 196.2 L230.0 197.0 L229.3 197.9 L228.6 198.9 L228.0 199.9 L227.3 200.9 L226.6 201.8 L225.7 202.5 L224.8 203.0 L223.7 203.5 L222.5 203.9 L221.3 204.3 L220.2 204.7 L219.2 205.3 L218.3 205.9 L217.5 206.7 L216.9 207.7 L216.4 208.8 L216.0 209.9 L215.6 211.1 L215.1 212.1 L214.5 213.1 L213.8 213.9 L212.9 214.7 L212.0 215.4 L210.9 216.0 L209.9 216.7 L208.9 217.4 L208.1 218.1 L207.4 219.0 L206.9 220.0 L206.6 221.1 L206.4 222.3 L206.2 223.5" stroke="#ac9464" stroke-width="1.4" opacity="0.53"/>
<path d="M277.1 198.4 L278.7 200.3 L280.4 201.8 L282.5 202.6 L284.9 203.1 L287.3 203.6 L289.3 204.7 L290.7 206.4 L291.9 208.5 L293.3 210.4 L295.1 211.7 L297.4 212.6 L299.8 213.6 L301.7 214.9 L302.9 216.8 L303.6 219.1 L304.4 221.3 L305.7 223.1 L307.6 224.4 L309.8 225.5 L311.8 226.8 L313.1 228.8 L313.7 231.1 L314.1 233.5 L314.9 235.5 L316.5 237.1 L318.5 238.4 L320.4 239.8 L321.8 241.7 L322.4 244.0 L322.6 246.4 L323.0 248.7 L324.2 250.6 L326.0 252.1" stroke="#7c6238" stroke-width="1.1" opacity="0.81"/>
<path d="M280.1 202.4 L281.9 203.7 L284.0 204.4 L286.4 204.9 L288.6 205.6 L290.4 206.8 L291.8 208.8 L293.0 210.8 L294.4 212.5 L296.3 213.8 L298.5 214.7 L300.7 215.8 L302.4 217.3 L303.4 219.3 L304.0 221.6 L304.9 223.7 L306.4 225.4 L308.5 226.5 L310.6 227.7 L312.4 229.2 L313.3 231.3 L313.8 233.7 L314.3 236.0 L315.3 237.9 L317.1 239.4 L319.1 240.7 L320.9 242.2 L322.0 244.2 L322.3 246.6 L322.5 249.0" stroke="#84683c" stroke-width="1.4" opacity="0.80"/>
<path d="M282.3 203.0 L283.6 205.1 L285.0 206.9 L286.8 208.1 L289.1 208.8 L291.4 209.2 L293.5 210.1 L295.1 211.7 L296.3 213.8 L297.1 216.0 L298.4 217.8 L300.3 219.1 L302.5 220.1 L304.5 221.3 L305.8 223.0 L306.6 225.2 L307.3 227.5 L308.3 229.4 L309.9 231.0 L311.9 232.2 L313.9 233.6 L315.2 235.3 L315.9 237.5 L316.3 239.9 L316.9 242.1 L318.2 243.9 L320.0 245.3 L321.9 246.8 L323.3 248.5 L324.0 250.7 L324.2 253.1 L324.5 255.4 L325.4 257.4 L328.5 258.2" stroke="#8c7242" stroke-width="1.1" opacity="0.56"/>
<path d="M280.0 202.5 L282.0 203.4 L283.5 205.2 L284.7 207.3 L286.2 209.0 L288.1 210.1 L290.4 210.7 L292.7 211.2 L294.7 212.2 L296.1 214.0 L296.9 216.2 L297.8 218.4 L299.1 220.1 L301.1 221.3 L303.3 222.3 L305.2 223.5 L306.4 225.4 L307.2 227.6 L307.8 229.8 L308.8 231.8 L310.4 233.3 L312.5 234.5 L314.3 235.9 L315.5 237.7 L316.1 240.0 L316.5 242.3 L317.2 244.5 L318.5 246.2 L320.4 247.6 L322.2 249.1 L323.5 250.9 L324.0 253.1" stroke="#ac9464" stroke-width="0.9" opacity="0.85"/>
<path d="M281.3 204.6 L283.4 205.4 L285.0 207.0 L286.2 209.0 L287.5 211.0 L289.2 212.4 L291.3 213.1 L293.6 213.6 L295.7 214.5 L297.1 216.0 L297.9 218.2 L298.6 220.5 L299.7 222.4 L301.5 223.8 L303.7 224.8 L305.7 226.0 L307.2 227.5 L308.1 229.6 L308.5 232.0 L309.2 234.1 L310.6 235.8 L312.5 237.1 L314.5 238.4 L316.0 240.1 L316.8 242.1 L317.2 244.5 L317.5 246.7 L318.5 248.6 L320.2 250.2" stroke="#84683c" stroke-width="1.1" opacity="0.66"/>
<path d="M269.3 199.5 L271.4 200.1 L273.1 201.5 L274.7 203.4 L276.2 205.1 L278.1 206.1 L280.2 206.5 L282.5 206.8 L284.6 207.5 L286.2 208.9 L287.5 210.9 L288.7 213.0 L290.3 214.5 L292.2 215.3 L294.4 215.9 L296.4 216.7 L297.9 218.3 L298.7 220.4 L299.4 222.7 L300.4 224.7 L302.1 226.2 L304.2 227.3 L306.3 228.3 L307.8 229.8 L308.7 231.8 L309.0 234.2 L309.6 236.4 L310.9 238.2 L312.7 239.6 L314.7 240.9 L316.4 242.4 L317.3 244.4 L317.6 246.7 L317.8 249.0 L318.6 251.1 L320.1 252.7 L322.1 254.2" stroke="#8c7242" stroke-width="1.5" opacity="0.73"/>
<path d="M285.2 215.9 L287.4 217.3 L288.8 219.4 L289.7 221.9 L290.8 224.3 L292.6 226.0 L295.0 227.3 L297.4 228.7 L299.0 230.7 L299.7 233.3 L300.3 235.9 L301.5 238.1 L303.5 239.8 L305.8 241.2 L307.7 243.0 L308.7 245.4 L309.0 248.2 L309.5 250.7 L311.0 252.8 L313.1 254.5 L315.1 256.2 L316.2 258.4 L316.6 261.1 L316.9 263.7 L317.9 265.9 L319.8 267.5 L322.2 268.7 L324.1 270.2 L325.2 272.5 L326.0 275.1 L327.1 277.4 L329.0 279.0" stroke="#745a34" stroke-width="1.0" opacity="0.77"/>
<path d="M285.5 219.1 L286.6 221.4 L288.6 223.0 L291.1 224.0 L293.4 225.3 L295.0 227.3 L295.8 229.9 L296.5 232.5 L297.8 234.6 L300.0 236.2 L302.3 237.6 L304.0 239.4 L304.9 241.8 L305.4 244.5 L306.2 246.9 L307.8 248.8 L310.0 250.5 L311.9 252.3 L312.9 254.6 L313.1 257.3 L313.5 259.9 L314.7 262.1 L316.7 263.8 L318.7 265.4 L320.3 267.2 L321.2 269.5 L321.9 272.1 L323.1 274.3 L325.2 275.8 L327.7 277.0 L329.8 278.4 L331.2 280.3 L332.2 282.8 L333.4 285.1 L335.3 286.7" stroke="#9a7e4c" stroke-width="1.4" opacity="0.83"/>
<path d="M290.4 224.6 L291.3 227.2 L292.6 229.4 L294.5 230.9 L296.9 232.2 L298.9 233.9 L300.0 236.1 L300.6 238.8 L301.3 241.3 L302.8 243.2 L305.0 244.7 L307.2 246.3 L308.6 248.4 L309.0 251.0 L309.3 253.7 L310.2 256.1 L312.0 257.9 L314.1 259.6 L315.8 261.5 L316.6 263.9 L317.0 266.5 L317.7 269.1 L319.3 271.0 L321.8 272.2 L324.1 273.5 L325.7 275.4 L326.6 277.9 L327.5 280.4 L329.0 282.5" stroke="#7c6238" stroke-width="1.0" opacity="0.59"/>
<path d="M281.9 219.0 L284.3 220.2 L286.7 221.3 L288.6 223.0 L289.7 225.4 L290.5 227.9 L291.8 230.0 L293.8 231.5 L296.1 232.8 L298.1 234.4 L299.2 236.7 L299.7 239.4 L300.5 241.9 L302.0 243.8 L304.2 245.3 L306.4 246.8 L307.7 248.9 L308.1 251.5 L308.3 254.2 L309.3 256.5 L311.1 258.4 L313.3 260.0 L314.9 262.0 L315.7 264.4 L316.1 267.1 L316.8 269.7 L318.6 271.6 L321.1 272.8 L323.4 274.1 L324.9 276.0 L325.8 278.6 L326.7 281.1 L328.3 283.1 L330.7 284.4 L333.3 285.2 L335.4 286.6 L336.8 288.7" stroke="#64502e" stroke-width="0.9" opacity="0.61"/>
<path d="M279.3 214.6 L281.0 216.5 L282.0 219.0 L282.9 221.5 L284.5 223.4 L286.8 224.7 L289.3 225.7 L291.3 227.3 L292.4 229.5 L293.0 232.1 L293.9 234.4 L295.7 236.2 L298.0 237.6 L300.1 239.1 L301.4 241.2 L301.9 243.9 L302.5 246.4 L303.7 248.4 L305.7 250.1 L307.8 251.7 L309.3 253.7 L309.8 256.3 L310.0 259.0 L310.8 261.4 L312.4 263.3 L314.6 265.0 L316.5 266.8 L317.7 269.0 L318.4 271.7 L319.3 274.3 L321.0 276.1 L323.3 277.4 L325.7 278.6 L327.5 280.4 L328.7 282.8 L329.7 285.4 L331.3 287.4 L333.6 288.6 L336.2 289.4 L338.4 290.6" stroke="#ac9464" stroke-width="1.4" opacity="0.76"/>
<path d="M298.3 198.1 L300.4 198.5 L302.6 198.8 L304.5 199.5 L306.0 200.8 L307.3 202.6 L308.6 204.4 L310.0 205.8 L311.9 206.8 L314.0 207.5 L316.2 208.3 L317.9 209.4 L319.1 211.0 L320.0 213.0 L320.8 215.1 L321.9 216.8 L323.5 218.0 L325.5 218.9 L327.6 219.9 L329.3 221.3 L330.3 223.2 L330.7 225.4 L331.1 227.5 L331.9 229.4 L333.3 230.9 L335.1 232.1 L336.9 233.3 L338.4 234.8 L339.2 236.7 L339.6 238.9 L339.9 241.1 L340.4 243.1 L341.6 244.7 L343.3 246.2 L344.9 247.6 L346.2 249.2 L346.8 251.1" stroke="#9a7e4c" stroke-width="1.5" opacity="0.57"/>
<path d="M305.4 201.8 L307.4 202.5 L308.9 203.8 L310.2 205.6 L311.4 207.4 L312.7 209.0 L314.3 210.2 L316.3 211.0 L318.3 211.8 L320.1 213.0 L321.3 214.6 L322.1 216.6 L322.9 218.6 L324.0 220.3 L325.5 221.6 L327.4 222.7 L329.4 223.9 L330.8 225.3 L331.7 227.1 L332.1 229.3 L332.5 231.4 L333.3 233.3 L334.7 234.8 L336.5 236.0 L338.3 237.3 L339.7 238.8 L340.5 240.8 L340.7 243.0 L340.8 245.2 L341.3 247.1 L342.5 248.8 L344.2 250.2" stroke="#7c6238" stroke-width="1.0" opacity="0.53"/>
<path d="M303.3 201.5 L304.5 203.3 L305.8 205.1 L307.3 206.5 L309.1 207.2 L311.2 207.7 L313.3 208.3 L315.1 209.4 L316.3 211.1 L317.1 213.1 L317.9 215.1 L319.1 216.8 L320.7 217.9 L322.7 218.8 L324.8 219.6 L326.4 220.9 L327.5 222.7 L327.9 224.8 L328.3 227.0 L329.1 228.9 L330.5 230.3 L332.4 231.5 L334.2 232.7 L335.6 234.2 L336.4 236.1 L336.8 238.2 L337.1 240.3 L337.7 242.2 L339.0 243.8 L340.6 245.2 L342.3 246.6" stroke="#9a7e4c" stroke-width="1.1" opacity="0.60"/>
<path d="M296.9 200.3 L299.1 200.6 L301.1 201.1 L302.9 202.1 L304.2 203.7 L305.4 205.6 L306.8 207.2 L308.4 208.3 L310.3 208.9 L312.4 209.4 L314.3 210.2 L315.8 211.6 L316.7 213.5 L317.5 215.5 L318.4 217.4 L319.8 218.8 L321.7 219.8 L323.7 220.6 L325.6 221.6 L326.9 223.1 L327.5 225.2 L327.8 227.3 L328.4 229.4 L329.5 231.0 L331.1 232.3 L333.0 233.5 L334.7 234.8 L335.8 236.5 L336.3 238.5 L336.6 240.6 L337.0 242.7 L337.8 244.4 L339.3 245.9 L341.1 247.3 L342.5 248.8 L343.4 250.6 L343.7 252.7 L343.8 254.9 L346.2 255.9" stroke="#64502e" stroke-width="1.3" opacity="0.56"/>
<path d="M296.5 201.0 L297.8 202.7 L299.4 203.9 L301.4 204.5 L303.6 204.8 L305.7 205.2 L307.5 206.1 L308.8 207.7 L309.9 209.5 L310.8 211.2 L312.1 212.5 L313.8 213.5 L315.9 214.3 L317.8 215.2 L319.3 216.5 L320.3 218.3 L321.1 220.4 L322.0 222.3 L323.1 223.7 L324.6 224.8 L326.5 225.8 L328.2 227.1 L329.4 228.7 L330.1 230.7 L330.4 232.8 L330.9 234.9 L332.0 236.6 L333.5 238.0 L335.4 239.1 L337.0 240.4 L338.1 242.1 L338.4 244.1 L338.5 246.3 L338.8 248.4 L339.6 250.2 L341.0 251.8 L342.7 253.1" stroke="#745a34" stroke-width="0.9" opacity="0.51"/>
<path d="M301.3 235.3 L302.7 236.3 L303.8 237.4 L304.6 238.8 L305.0 240.3 L305.2 242.0 L305.3 243.7 L305.6 245.3 L306.3 246.7 L307.3 247.9 L308.6 248.9 L310.0 250.0 L311.2 251.1 L312.2 252.5 L312.6 254.2 L312.6 255.9 L312.4 257.6 L312.3 259.3 L312.6 260.8 L313.3 262.2 L314.3 263.5 L315.4 264.8 L316.5 266.1 L317.3 267.4 L317.7 268.9 L317.7 270.6 L317.5 272.3 L317.3 274.0 L317.4 275.6 L317.9 277.0 L318.8 278.4 L319.9 279.7 L321.0 281.0 L321.8 282.3" stroke="#8c7242" stroke-width="0.9" opacity="0.61"/>
<path d="M303.2 241.3 L304.6 242.3 L305.8 243.4 L306.8 244.7 L307.3 246.1 L307.6 247.8 L307.7 249.5 L307.9 251.1 L308.4 252.6 L309.2 253.9 L310.3 255.1 L311.5 256.3 L312.6 257.6 L313.4 258.9 L313.8 260.4 L313.8 262.1 L313.7 263.7 L313.5 265.4 L313.6 267.0 L314.2 268.5 L315.1 269.8 L316.2 271.1 L317.3 272.4 L318.2 273.7 L318.7 275.2 L318.8 276.8 L318.6 278.5 L318.4 280.1 L318.3 281.8 L318.7 283.3" stroke="#64502e" stroke-width="1.3" opacity="0.65"/>
<path d="M301.7 242.2 L302.3 243.6 L303.3 244.8 L304.6 245.9 L306.0 246.9 L307.2 248.0 L308.1 249.2 L308.7 250.7 L309.0 252.3 L309.0 254.0 L309.0 255.6 L309.2 257.1 L309.9 258.5 L310.9 259.8 L312.0 261.0 L313.1 262.3 L313.9 263.7 L314.3 265.2 L314.4 266.8 L314.2 268.5 L314.1 270.1 L314.2 271.7 L314.6 273.2 L315.5 274.5 L316.6 275.8 L317.7 277.1 L318.6 278.5 L319.1 279.9 L319.2 281.5 L319.0 283.2 L318.8 284.9 L318.7 286.5 L319.0 288.0 L319.8 289.4" stroke="#84683c" stroke-width="1.5" opacity="0.63"/>
<path d="M299.4 236.3 L299.6 238.0 L299.8 239.7 L300.0 241.3 L300.7 242.7 L301.6 244.0 L302.9 245.0 L304.3 246.0 L305.6 247.1 L306.5 248.3 L307.1 249.8 L307.4 251.4 L307.5 253.1 L307.6 254.6 L307.8 256.0 L308.4 257.4 L309.4 258.6 L310.5 259.9 L311.7 261.2 L312.5 262.5 L312.9 264.0 L313.0 265.6 L312.8 267.3 L312.7 269.0 L312.7 270.6 L313.2 272.0 L314.0 273.4 L315.1 274.6 L316.3 275.9 L317.2 277.3 L317.7 278.7 L317.8 280.3 L317.6 282.0 L317.4 283.7 L317.3 285.3 L317.6 286.8 L318.3 288.2 L319.4 289.6 L320.5 290.8" stroke="#7c6238" stroke-width="1.4" opacity="0.52"/>
</g></g>
<g fill="none" stroke="#130e0a" stroke-linecap="round" filter="url(#b1)">
<path d="M385 337 C395 334 403 342 402.4 352 C402 361 396 367 389 367" stroke-width="3"/>
<path d="M383 318 C389 322 393 330 394 338" stroke-width="2.4" opacity="0.9"/>
<path d="M376 296 C382 300 386 308 388 314" stroke-width="1.8" opacity="0.8"/>
<path d="M130 350 C124 352 120 354 116 353" stroke-width="2.4" opacity="0.85"/>
<path d="M131 342 C126 340 123 338 120 335" stroke-width="1.8" opacity="0.7"/>
<path d="M133 372 C127 376 122 380 119 385" stroke-width="2.4" opacity="0.8"/>
<path d="M136 394 C130 397 126 398 123 397.4" stroke-width="2.2" opacity="0.75"/>
<path d="M144 414 C140 420 137 424 134 426" stroke-width="2.2" opacity="0.75"/>
<path d="M133 318 C129 316 127.6 312 127.6 307" stroke-width="1.6" opacity="0.6"/>
</g>
<path d="M219 376 L218.6 392 L215.8 412 L214.4 439 L240 440 L266 438 L292 433 L314 425.6 L343 412.6 L330 405 L314.4 398 L305.6 380 L300 370 Z" fill="#bd8670" filter="url(#b1)"/>
<g clip-path="url(#neckclip)">
<path d="M216 362 C222 374 230 384 240 390.6 C250 396 260 398.6 270 398.6 C280 398.4 290 394 298 387.6 C306 380 313 370 318 360 L322 372 C316 384 306 396 294 402 C280 407 258 407 244 401 C232 395 222 384 214 372 Z" fill="#5e3426" filter="url(#b2)" opacity="0.9"/>
<ellipse cx="266" cy="404" rx="40" ry="6" fill="#8a5642" filter="url(#b4)" opacity="0.7"/>
<ellipse cx="268" cy="424" rx="36" ry="10" fill="#d09a84" filter="url(#b8)" opacity="0.8"/>
<ellipse cx="224" cy="415" rx="7" ry="26" fill="#a06c56" filter="url(#b4)" opacity="0.8"/>
<ellipse cx="322" cy="406" rx="12" ry="10" fill="#8a5844" filter="url(#b4)" opacity="0.8"/>
</g>
<path d="M98.5 476 C103 463 110 452 122 444 C128 440.4 134 438 140 436.4 L152 441 L205 441 L214.4 439 C240 440.6 255 439.4 266 438 C290 435 316 426 343.5 412.6 L366 409.4 L389 406 C398 410 406 413.4 411.6 416.2 C421 421.6 428 427.6 432 433 C440 446 446 460 451 476 Z" fill="#0b0b0c" filter="url(#b1)"/>
<path d="M120 476 L120 452 L440 452 L446 476 Z" fill="#0b0b0c"/>
<path d="M210 396 C204 412 200 428 194 444 C190 456 189 466 189 476" stroke="#7a5a34" stroke-width="2.2" fill="none" filter="url(#b1)" opacity="0.9"/>
<path d="M213 404 C207 420 203 432 198 446" stroke="#a08050" stroke-width="1.2" fill="none" filter="url(#b1)" opacity="0.8"/>
<path d="M246.8 216.6 C251.0 215.6 255.9 214.0 260.0 215.0 C264.1 216.0 268.6 219.6 271.6 222.8 C274.6 226.0 275.9 229.9 278.0 234.0 C280.1 238.1 282.2 243.6 284.0 247.6 C285.8 251.6 287.3 254.6 289.0 258.0 C290.7 261.4 292.6 264.6 294.4 268.3 C296.2 272.0 298.2 276.4 300.0 280.0 C301.8 283.6 303.0 286.7 305.0 290.0 C307.0 293.3 309.5 296.8 312.0 300.0 C314.5 303.2 317.9 306.4 320.0 309.0 C322.1 311.6 323.4 313.0 324.4 315.7 C325.4 318.4 325.8 321.9 326.0 325.0 C326.2 328.1 326.0 331.0 325.5 334.3 C325.0 337.6 324.0 341.6 323.0 345.0 C322.0 348.4 320.8 351.7 319.3 355.0 C317.8 358.3 316.1 361.9 314.0 365.0 C311.9 368.1 309.3 370.9 306.8 373.7 C304.3 376.5 301.8 379.6 299.0 382.0 C296.2 384.4 292.8 386.5 290.3 388.2 C287.8 389.9 286.1 391.0 284.0 392.0 C281.9 393.0 280.1 393.6 277.8 394.4 C275.5 395.1 272.4 396.1 270.0 396.5 C267.6 396.9 266.6 396.9 263.3 396.5 C260.0 396.1 254.5 395.4 250.0 394.0 C245.5 392.6 240.2 390.5 236.4 388.2 C232.6 385.9 229.8 382.8 227.0 380.0 C224.2 377.2 222.1 374.9 219.8 371.6 C217.5 368.3 214.7 364.1 213.0 360.0 C211.3 355.9 210.7 351.8 209.5 346.8 C208.3 341.8 206.9 335.2 206.0 330.0 C205.1 324.8 204.5 320.2 204.0 315.7 C203.5 311.2 203.1 307.1 203.0 303.0 C202.9 298.9 202.8 294.8 203.3 291.0 C203.8 287.2 205.0 283.8 206.0 280.0 C207.0 276.2 208.2 272.6 209.5 268.3 C210.8 264.0 212.3 258.5 214.0 254.0 C215.7 249.5 217.8 245.4 219.8 241.4 C221.8 237.4 223.5 233.4 226.0 230.0 C228.5 226.6 231.5 223.2 235.0 221.0 C238.5 218.8 242.6 217.6 246.8 216.6Z" fill="#d89888" filter="url(#b1)"/>
<g clip-path="url(#faceclip)">
<ellipse cx="257" cy="252" rx="34" ry="30" fill="#ecb8a8" filter="url(#b8)"/>
<ellipse cx="262" cy="264" rx="15" ry="9" fill="#f2d0c4" filter="url(#b4)" opacity="0.8"/>
<ellipse cx="240" cy="240" rx="10" ry="8" fill="#f0cabc" filter="url(#b4)" opacity="0.7"/>
<ellipse cx="227" cy="317" rx="16" ry="14" fill="#eca89e" filter="url(#b8)"/>
<ellipse cx="225" cy="313" rx="6" ry="5" fill="#f4c6bc" filter="url(#b2)" opacity="0.75"/>
<ellipse cx="306" cy="320" rx="15" ry="14" fill="#e8a49a" filter="url(#b8)"/>
<ellipse cx="305" cy="315" rx="6" ry="5" fill="#f0bcb2" filter="url(#b2)" opacity="0.6"/>
<ellipse cx="265" cy="300" rx="8" ry="12" fill="#eab0a2" filter="url(#b4)"/>
<ellipse cx="268" cy="381" rx="15" ry="8" fill="#e2a296" filter="url(#b4)"/>
<ellipse cx="269" cy="379" rx="5" ry="3.4" fill="#f2c4bc" filter="url(#b2)" opacity="0.8"/>
<ellipse cx="266" cy="368" rx="18" ry="5" fill="#c88878" filter="url(#b4)" opacity="0.6"/>
<path d="M205 276 C198 330 210 372 240 394 L228 398 L194 350 Z" fill="#9a5e4c" filter="url(#b4)" opacity="0.75"/>
<path d="M327 300 C332 340 318 376 290 394 L312 396 L338 340 Z" fill="#9a5e4c" filter="url(#b4)" opacity="0.75"/>
<path d="M212 352 C218 368 228 382 242 390 C258 397 280 397 294 389 C306 381 315 368 320 354" stroke="#8a5040" stroke-width="5" fill="none" filter="url(#b2)" opacity="0.75"/>
<path d="M212 256 C220 236 234 220 250 214 L228 208 L203 252 Z" fill="#8a5a48" filter="url(#b4)" opacity="0.8"/>
<path d="M268 218 C282 236 292 262 302 284 L314 272 L286 216 Z" fill="#8a5a48" filter="url(#b4)" opacity="0.7"/>
<path d="M302 284 C310 296 318 304 326 312 L332 300 L312 280 Z" fill="#7a4c3c" filter="url(#b2)" opacity="0.7"/>
<ellipse cx="232" cy="290" rx="18" ry="6.5" fill="#b27464" filter="url(#b2)" opacity="0.75"/>
<ellipse cx="294" cy="290" rx="14" ry="6" fill="#b27464" filter="url(#b2)" opacity="0.75"/>
<path d="M216 297 C226 301 240 301 250 298" stroke="#c08474" stroke-width="2" fill="none" filter="url(#b1)" opacity="0.7"/>
<path d="M282 297.6 C290 300 300 298.6 307 295" stroke="#c08474" stroke-width="2" fill="none" filter="url(#b1)" opacity="0.7"/>
<path d="M254 290 C252 302 249 310 246.6 318" stroke="#c48a7a" stroke-width="3" fill="none" filter="url(#b2)" opacity="0.7"/>
<path d="M277 290 C280 302 283 310 286 318" stroke="#c48a7a" stroke-width="3" fill="none" filter="url(#b2)" opacity="0.7"/>
</g>
<path d="M213 360 C217 369 223 377.6 231 384.4 C239 390.4 249 394.6 259 396.4 C265 397.2 270 397 275 395.6 C281 393.6 286 390.4 290 387 C296 382 302 376 307 369.6" stroke="#6a3a2c" stroke-width="5" fill="none" filter="url(#b2)" opacity="0.55" transform="translate(0 2.4)"/>
<path d="M215 364 C219 372 224 379 231 384.4 C239 390.4 249 394.6 259 396.4 C265 397.2 270 397 275 395.6 C281 393.6 286 390.4 290 387 C296 382 301 377 305 372" stroke="#3c1c16" stroke-width="2.2" fill="none" filter="url(#b1)" opacity="0.85" transform="translate(0 1)"/>
<g filter="url(#b1)" fill="none" stroke="#3a2a20" opacity="0.55" stroke-width="0.9"><path d="M240 218 C232 230 226 244 222 262"/><path d="M246 216 C236 226 228 240 225 252"/><path d="M266 217 C276 228 284 244 290 262"/><path d="M272 222 C282 236 290 250 297 270"/></g>
<g filter="url(#b1)">
<path d="M208.4 280.6 C211 275.4 215.4 271.6 220.4 270.6 C226 270.2 232 272 238 274.4 C243.6 276.4 249 278 254 279.6 C248 279.8 242 279 236 277.6 C230 276.2 225 275 220.6 275 C216 275.4 212 277.6 208.4 280.6 Z" fill="#2c1a14" stroke="#2c1a14" stroke-width="0.8" opacity="0.92"/>
<path d="M277 282.4 C283 280 290 277.4 296.8 275.6 C293 278.6 285 281.6 277 282.4 Z" fill="#2c1a14" stroke="#2c1a14" stroke-width="1.5" opacity="0.88"/>
<path d="M217.4 291.8 C222 288.4 228 286.6 233.6 286.8 C239 287.2 244 290.4 247.6 294.2 C241 292.6 234 291.6 228 291.6 C224 291.6 220.6 291.8 217.4 291.8 Z" fill="#20141a" stroke="#20141a" stroke-width="1.2"/>
<path d="M283.6 292.6 C287 289.4 291 287.6 295 287.4 C298.6 287.2 301.6 288 304.2 288.8 C298 290.2 290.6 291.6 283.6 292.6 Z" fill="#20141a" stroke="#20141a" stroke-width="1.2"/>
</g>
<circle cx="233.4" cy="288.4" r="0.95" fill="#e6dcff"/>
<circle cx="294.4" cy="288.8" r="0.95" fill="#e6dcff"/>
<g filter="url(#b1)">
<path d="M246.6 322.4 C245.4 317 248.6 313.4 252.6 314 C256 310.6 262 309 266 309 C270.6 309 276 310.6 280 314 C284 313.4 287.4 317.4 286.2 322.4 C285 327 281 329 277 328.6 C273.6 331.4 269.6 332.4 266 332.2 C262 332 258.6 331 256 328.6 C252 329.4 247.8 327 246.6 322.4 Z" fill="#de9e90" opacity="0.9"/>
<ellipse cx="265.6" cy="320.6" rx="7.4" ry="5" fill="#e8aca0"/>
<ellipse cx="265" cy="320.4" rx="2.6" ry="1.6" fill="#f6d0c8" opacity="0.8"/>
<path d="M248.6 325 C251.4 328.4 255.4 327.4 258.6 329.6 C262.6 331.8 269.6 331.8 273.6 329.6 C277 327.4 281.4 328.4 284.4 325" stroke="#7a3c32" stroke-width="1.7" fill="none" opacity="0.95"/>
<path d="M247.4 315 C245.6 319 246 323.6 249 326.4" stroke="#98584c" stroke-width="1.3" fill="none" opacity="0.85"/>
<path d="M285.4 315 C287.2 319 286.8 323.6 284 326.4" stroke="#98584c" stroke-width="1.3" fill="none" opacity="0.85"/>
</g>
<path d="M242 322 C236.6 329 234.6 335 236.6 341" stroke="#a8645a" stroke-width="1.8" fill="none" filter="url(#b1)" opacity="0.7"/>
<path d="M291 322 C296.6 330 298 337 296 343.6" stroke="#a8645a" stroke-width="1.8" fill="none" filter="url(#b1)" opacity="0.7"/>
<g filter="url(#b1)">
<path d="M238.4 341 C246 341.6 256 340 265 341 C274 340.6 284 343 293.6 343.6 C289 353 279 361 266 361.4 C254 361 243.6 352 238.4 341 Z" fill="#b8525a"/>
<path d="M241.6 343 C250 345 256 344 266 345 C276 345.6 284 346 291 345 C287 351 278 354.6 266.6 354.4 C256 354 246.6 350 241.6 343 Z" fill="#ece2c0"/>
<path d="M245 347 C252 352 260 354.6 266.6 354.6 C274 354.6 281 352 287 348 C283 354 275 357 266.6 357 C258 357 250 353.6 245 347 Z" fill="#8a3a40" opacity="0.55"/>
<path d="M238.4 341 C247 343 256 341.6 265 342.4 C274 342 284 344.4 293.6 343.6" stroke="#a0424c" stroke-width="1.6" fill="none"/>
<ellipse cx="266" cy="358.6" rx="9" ry="1.6" fill="#e08a90" opacity="0.8"/>
</g>
<path d="M248.6 345 V350.6 M254 345.6 V353 M260.4 346 V354 M268 346 V354.2 M275.4 346 V353.4 M281.6 346 V351.4 M286.4 345.6 V349" stroke="#b4a478" stroke-width="0.7" fill="none" opacity="0.8"/>
<path d="M241.6 343.4 L246 347 M291 345 L287 348" stroke="#5a2a2a" stroke-width="1.6" fill="none" opacity="0.6" filter="url(#b1)"/>
</g>
</svg>
<div id="navbox" style="left:525.4px;top:55.4px;width:170.8px;height:83.6px;background:#848484;border:1px solid #3e3e3e;"></div>
<div class="checker" style="left:547.4px;top:56.4px;width:125.6px;height:81.8px;background-size:4.73px 4.73px;background-position:0.6px 0.3px;"></div>
<svg id="navimg" style="left:547.4px;top:56.4px" width="125.6" height="81.8" viewBox="547.4 56.4 125.6 81.8">
  <g transform="translate(562 55.6) scale(0.2117) translate(-20 -79)"><use href="#pt"/></g>
</svg>
<div style="left:547.4px;top:56.4px;width:13.8px;height:81.8px;background:rgba(150,150,150,0.8);border-left:1px solid #3a3a3a;"></div>
<div style="left:665.4px;top:56.4px;width:7.6px;height:81.8px;background:rgba(150,150,150,0.8);border-right:1px solid #3a3a3a;"></div>

<div id="labels">
<span class="t" style="left:17.0px;top:4.68px;font-size:8.2px;line-height:10.25px;font-weight:700;color:#dcdcdc;transform:scaleX(0.8576)">AKVIS SmartMask v.12.0 - IMG_1456.JPG (RGB/8, 3072x2048)</span>
<span class="t" style="left:449.3px;top:23.05px;font-size:9.2px;line-height:11.5px;font-weight:700;color:#f0f0f0;transform:scaleX(0.9559)">Auto</span>
<span class="t" style="left:479.9px;top:23.05px;font-size:9.2px;line-height:11.5px;font-weight:400;color:#8e8e8e;transform:scaleX(1.0186)">Manual</span>
<span class="t" style="left:133.0px;top:43.65px;font-size:7.6px;line-height:9.5px;font-weight:400;color:#c4c4c4;transform:scaleX(0.8788)">Original</span>
<span class="t" style="left:375.3px;top:43.52px;font-size:7.8px;line-height:9.75px;font-weight:700;color:#e8e8e8;transform:scaleX(0.9014)">Processing</span>
<span class="t" style="left:526.0px;top:43.52px;font-size:7.8px;line-height:9.75px;font-weight:700;color:#f0f0f0;transform:scaleX(0.9592)">Navigator</span>
<span class="t" style="left:544.3px;top:147.03px;font-size:8.6px;line-height:10.75px;font-weight:400;color:#f0f0f0;transform:scaleX(1.0173)">33%</span>
<span class="t" style="left:526.5px;top:163.93px;font-size:7.8px;line-height:9.75px;font-weight:700;color:#f0f0f0;transform:scaleX(0.9768)">Parameters</span>
<span class="t" style="left:523.0px;top:178.50px;font-size:8px;line-height:10.0px;font-weight:400;color:#e2e2e2;transform:scaleX(0.9062)">Edge Priority</span>
<span class="t" style="left:672.0px;top:178.78px;font-size:8.2px;line-height:10.25px;font-weight:700;color:#f0f0f0;transform:scaleX(1.2075)">50</span>
<span class="t" style="left:534.0px;top:202.90px;font-size:8px;line-height:10.0px;font-weight:400;color:#e2e2e2;transform:scaleX(0.8549)">Find Similar Areas</span>
<span class="t" style="left:523.0px;top:215.90px;font-size:8px;line-height:10.0px;font-weight:400;color:#e2e2e2;transform:scaleX(0.8894)">Mask Smoothing</span>
<span class="t" style="left:675.0px;top:216.18px;font-size:8.2px;line-height:10.25px;font-weight:700;color:#f0f0f0;transform:scaleX(1.2055)">2</span>
<span class="t" style="left:523.0px;top:241.50px;font-size:8px;line-height:10.0px;font-weight:400;color:#e2e2e2;transform:scaleX(0.8884)">Sharpen Edges</span>
<span class="t" style="left:675.0px;top:241.88px;font-size:8.2px;line-height:10.25px;font-weight:700;color:#f0f0f0;transform:scaleX(1.2055)">0</span>
<span class="t" style="left:523.0px;top:267.80px;font-size:8px;line-height:10.0px;font-weight:400;color:#e2e2e2;transform:scaleX(0.9024)">Sensitivity</span>
<span class="t" style="left:675.0px;top:268.07px;font-size:8.2px;line-height:10.25px;font-weight:700;color:#f0f0f0;transform:scaleX(1.2055)">0</span>
<span class="t" style="left:661.0px;top:293.62px;font-size:7.8px;line-height:9.75px;font-weight:700;color:#f0f0f0;transform:scaleX(1.0213)">Default</span>
<span class="t" style="left:526.0px;top:308.73px;font-size:7.8px;line-height:9.75px;font-weight:700;color:#f0f0f0;transform:scaleX(0.9558)">Transition Area Pencil</span>
<span class="t" style="left:523.0px;top:323.60px;font-size:8px;line-height:10.0px;font-weight:400;color:#e2e2e2;transform:scaleX(0.8032)">Size</span>
<span class="t" style="left:670.0px;top:323.77px;font-size:8.2px;line-height:10.25px;font-weight:700;color:#f0f0f0;transform:scaleX(1.1703)">100</span>
<span class="t" style="left:661.0px;top:349.93px;font-size:7.8px;line-height:9.75px;font-weight:700;color:#f0f0f0;transform:scaleX(1.0213)">Default</span>
<span class="t" style="left:526.0px;top:365.12px;font-size:7.8px;line-height:9.75px;font-weight:700;color:#f0f0f0;transform:scaleX(0.9860)">History</span>
<span class="t" style="left:522.5px;top:376.82px;font-size:7.8px;line-height:9.75px;font-weight:700;color:#f4f4f4;transform:scaleX(0.9466)">AKVIS SmartMask</span>
<span class="t" style="left:523.0px;top:393.02px;font-size:7.8px;line-height:9.75px;font-weight:400;color:#c2c2c2;transform:scaleX(0.9283)">The program makes even a difficult selection</span>
<span class="t" style="left:523.0px;top:401.34px;font-size:7.8px;line-height:9.75px;font-weight:400;color:#c2c2c2;transform:scaleX(0.9343)">incredibly simple. The software provides powerful</span>
<span class="t" style="left:523.0px;top:409.66px;font-size:7.8px;line-height:9.75px;font-weight:400;color:#c2c2c2;transform:scaleX(0.9345)">tools for masking objects on images and removing</span>
<span class="t" style="left:523.0px;top:417.98px;font-size:7.8px;line-height:9.75px;font-weight:400;color:#c2c2c2;transform:scaleX(0.9176)">backgrounds. With SmartMask, you can spend less of</span>
<span class="t" style="left:523.0px;top:426.30px;font-size:7.8px;line-height:9.75px;font-weight:400;color:#c2c2c2;transform:scaleX(0.9560)">your time on selection of objects and more of it on</span>
<span class="t" style="left:523.0px;top:434.62px;font-size:7.8px;line-height:9.75px;font-weight:400;color:#c2c2c2;transform:scaleX(0.9580)">creativity.</span>
</div>
</div>
</body>
</html>
